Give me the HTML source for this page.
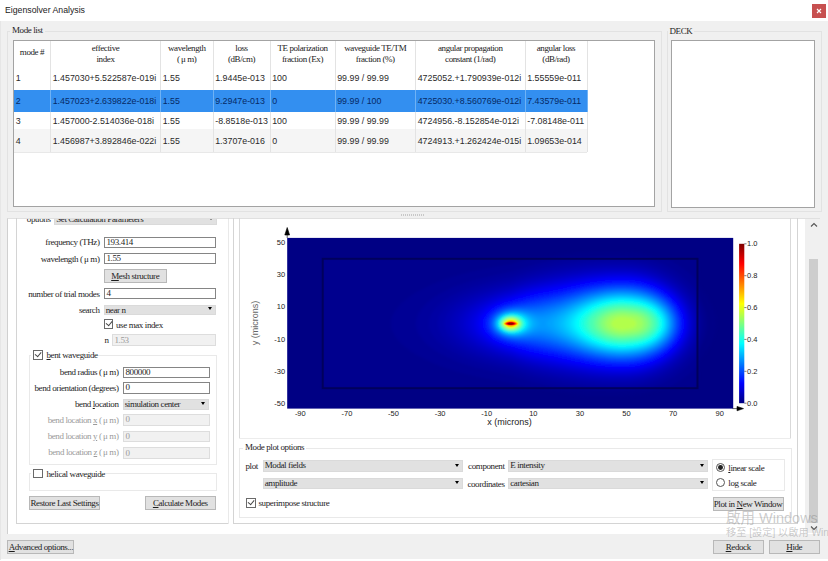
<!DOCTYPE html>
<html><head><meta charset="utf-8"><title>Eigensolver Analysis</title>
<style>
*{box-sizing:border-box}
html,body{margin:0;padding:0}
body{width:828px;height:561px;background:#f0f0f0;position:relative;overflow:hidden;font-family:"Liberation Serif","Noto Serif CJK SC",serif;font-size:9px;letter-spacing:-0.4px;color:#1c1c1c}
.a{position:absolute}
.t{position:absolute;white-space:nowrap;line-height:12px;height:12px}
.r{text-align:right}
.c{text-align:center}
.gb{position:absolute;border:1px solid #e2e2e2}
.in{position:absolute;border:1px solid #858585;background:#fff;height:12px;line-height:10px;padding-left:2px;white-space:nowrap;overflow:hidden}
.dis{background:#f1f1f1;border-color:#dddddd;color:#9a9a9a}
.cb{position:absolute;background:#e1e1e1;border:1px solid #dadada;height:11px;line-height:9px;padding-left:1.2px;white-space:nowrap;overflow:hidden}
.cb:after{content:"";position:absolute;right:2.8px;top:50%;margin-top:-2.2px;border-left:2.5px solid transparent;border-right:2.5px solid transparent;border-top:3px solid #000}
.btn{position:absolute;background:#e1e1e1;border:1px solid #b8b8b8;text-align:center;white-space:nowrap;height:14px;line-height:12px}
.ck{position:absolute;width:9.5px;height:9.5px;border:1px solid #6a6a6a;background:#fff}
.ck.on:after{content:"";position:absolute;left:1.3px;top:0.8px;width:4.5px;height:2.5px;border-left:1px solid #444;border-bottom:1px solid #444;transform:rotate(-50deg)}
.gray{color:#9a9a9a}
.sans{font-family:"Liberation Sans","Noto Sans CJK TC",sans-serif;letter-spacing:0}
.td{position:absolute;white-space:nowrap;font-family:"Liberation Sans",sans-serif;font-size:8.85px;letter-spacing:0;line-height:12px;color:#2a2a2a}
.th{position:absolute;white-space:nowrap;text-align:center;font-size:9px;line-height:11px;color:#222}
.vl{position:absolute;width:1px;background:#e3e3e3}
.ax{font-family:"Liberation Sans",sans-serif;font-size:7.5px;fill:#222;letter-spacing:0}
u{text-decoration:underline}
</style></head>
<body>
<div class="a" style="left:0;top:0;width:828px;height:20.5px;background:#fff"></div>
<div class="t sans" style="left:5px;top:3px;font-size:8.72px;line-height:14px;height:14px;color:#222">Eigensolver Analysis</div>
<div class="a" style="left:812px;top:4px;width:14px;height:14px;background:#c75050"></div>
<svg class="a" style="left:812px;top:4px" width="14" height="14"><path d="M5 5L9 9M9 5L5 9" stroke="#fff" stroke-width="1.1"/></svg>
<div class="a" style="left:0;top:559px;width:828px;height:2px;background:#fff"></div>
<div class="a" style="left:0;top:20.5px;width:1.2px;height:539px;background:#e6e6e6"></div>
<div class="gb" style="left:7px;top:31px;width:655px;height:181px"></div>
<div class="t" style="left:10px;top:24px;background:#f0f0f0;padding:0 2px">Mode list</div>
<div class="a" style="left:13px;top:39.5px;width:641.5px;height:167px;background:#fff;border:1px solid #a3a3a3"></div>
<div class="a" style="left:14px;top:129px;width:573px;height:23px;background:#f5f5f5"></div>
<div class="a" style="left:14px;top:89.5px;width:573px;height:22.2px;background:#338ff0"></div>
<div class="vl" style="left:50.0px;top:41px;height:111px"></div>
<div class="vl" style="left:50.0px;top:89.5px;height:22.5px;background:#6fb2f5"></div>
<div class="vl" style="left:160.0px;top:41px;height:111px"></div>
<div class="vl" style="left:160.0px;top:89.5px;height:22.5px;background:#6fb2f5"></div>
<div class="vl" style="left:212.5px;top:41px;height:111px"></div>
<div class="vl" style="left:212.5px;top:89.5px;height:22.5px;background:#6fb2f5"></div>
<div class="vl" style="left:269.5px;top:41px;height:111px"></div>
<div class="vl" style="left:269.5px;top:89.5px;height:22.5px;background:#6fb2f5"></div>
<div class="vl" style="left:334.5px;top:41px;height:111px"></div>
<div class="vl" style="left:334.5px;top:89.5px;height:22.5px;background:#6fb2f5"></div>
<div class="vl" style="left:415.0px;top:41px;height:111px"></div>
<div class="vl" style="left:415.0px;top:89.5px;height:22.5px;background:#6fb2f5"></div>
<div class="vl" style="left:524.5px;top:41px;height:111px"></div>
<div class="vl" style="left:524.5px;top:89.5px;height:22.5px;background:#6fb2f5"></div>
<div class="vl" style="left:586.5px;top:41px;height:111px"></div>
<div class="vl" style="left:586.5px;top:89.5px;height:22.5px;background:#6fb2f5"></div>
<div class="a" style="left:14px;top:152px;width:573px;height:1px;background:#e8e8e8"></div>
<div class="th" style="left:13.5px;width:37.0px;top:47.0px">mode #</div>
<div class="th" style="left:50.5px;width:110.0px;top:42.5px">effective<br>index</div>
<div class="th" style="left:160.5px;width:52.5px;top:42.5px">wavelength<br>(&#8201;μ m)</div>
<div class="th" style="left:213.0px;width:57.0px;top:42.5px">loss<br>(dB/cm)</div>
<div class="th" style="left:270.0px;width:65.0px;top:42.5px">TE polarization<br>fraction (Ex)</div>
<div class="th" style="left:335.0px;width:80.5px;top:42.5px">waveguide TE/TM<br>fraction (%)</div>
<div class="th" style="left:415.5px;width:109.5px;top:42.5px">angular propagation<br>constant (1/rad)</div>
<div class="th" style="left:525.0px;width:62.0px;top:42.5px">angular loss<br>(dB/rad)</div>
<div class="td" style="left:15.7px;top:71.5px">1</div>
<div class="td" style="left:52.7px;top:71.5px">1.457030+5.522587e-019i</div>
<div class="td" style="left:162.7px;top:71.5px">1.55</div>
<div class="td" style="left:215.2px;top:71.5px">1.9445e-013</div>
<div class="td" style="left:272.2px;top:71.5px">100</div>
<div class="td" style="left:337.2px;top:71.5px">99.99 / 99.99</div>
<div class="td" style="left:417.7px;top:71.5px">4725052.+1.790939e-012i</div>
<div class="td" style="left:527.2px;top:71.5px">1.55559e-011</div>
<div class="td" style="left:15.7px;top:94.5px;color:#062a66">2</div>
<div class="td" style="left:52.7px;top:94.5px;color:#062a66">1.457023+2.639822e-018i</div>
<div class="td" style="left:162.7px;top:94.5px;color:#062a66">1.55</div>
<div class="td" style="left:215.2px;top:94.5px;color:#062a66">9.2947e-013</div>
<div class="td" style="left:272.2px;top:94.5px;color:#062a66">0</div>
<div class="td" style="left:337.2px;top:94.5px;color:#062a66">99.99 / 100</div>
<div class="td" style="left:417.7px;top:94.5px;color:#062a66">4725030.+8.560769e-012i</div>
<div class="td" style="left:527.2px;top:94.5px;color:#062a66">7.43579e-011</div>
<div class="td" style="left:15.7px;top:114.5px">3</div>
<div class="td" style="left:52.7px;top:114.5px">1.457000-2.514036e-018i</div>
<div class="td" style="left:162.7px;top:114.5px">1.55</div>
<div class="td" style="left:215.2px;top:114.5px">-8.8518e-013</div>
<div class="td" style="left:272.2px;top:114.5px">100</div>
<div class="td" style="left:337.2px;top:114.5px">99.99 / 99.99</div>
<div class="td" style="left:417.7px;top:114.5px">4724956.-8.152854e-012i</div>
<div class="td" style="left:527.2px;top:114.5px">-7.08148e-011</div>
<div class="td" style="left:15.7px;top:134.5px">4</div>
<div class="td" style="left:52.7px;top:134.5px">1.456987+3.892846e-022i</div>
<div class="td" style="left:162.7px;top:134.5px">1.55</div>
<div class="td" style="left:215.2px;top:134.5px">1.3707e-016</div>
<div class="td" style="left:272.2px;top:134.5px">0</div>
<div class="td" style="left:337.2px;top:134.5px">99.99 / 99.99</div>
<div class="td" style="left:417.7px;top:134.5px">4724913.+1.262424e-015i</div>
<div class="td" style="left:527.2px;top:134.5px">1.09653e-014</div>
<div class="gb" style="left:667px;top:31px;width:155px;height:181px"></div>
<div class="t" style="left:667.5px;top:24.5px;background:#f0f0f0;padding:0 2px">DECK</div>
<div class="a" style="left:671px;top:39.5px;width:144px;height:168px;background:#fff;border:1px solid #a3a3a3"></div>
<div class="a" style="left:401px;top:214.3px;width:23.5px;height:2px;background:repeating-linear-gradient(90deg,#c8c8c8 0 1px,#f0f0f0 1px 2px)"></div>
<div class="a" style="left:6.5px;top:218px;width:813px;height:315.5px;background:#fff;border-left:1px solid #d0d0d0;border-top:1px solid #e0e0e0"></div>
<div class="a" style="left:16px;top:210px;width:212.5px;height:314px;border:1px solid #d4d4d4;clip-path:inset(8px 0 0 0)"></div>
<div class="a" style="left:233px;top:210px;width:565px;height:314px;border:1px solid #d4d4d4;clip-path:inset(8px 0 0 0)"></div>
<div class="a" style="left:239px;top:210px;width:552px;height:228.5px;border:1px solid #d9d9d9;clip-path:inset(8px 0 0 0)"></div>
<div class="a" style="left:805px;top:218.5px;width:14.5px;height:314.5px;background:#f0f0f0"></div>
<div class="a" style="left:809px;top:258.5px;width:9.3px;height:264.5px;background:#cdcdcd"></div>
<svg class="a" style="left:805px;top:218px" width="15" height="316"><path d="M6 8.5L9 5.5L12 8.5" fill="none" stroke="#555" stroke-width="1.1"/><path d="M6 308.5L9 311.5L12 308.5" fill="none" stroke="#555" stroke-width="1.1"/></svg>
<div class="a" style="left:0;top:218.5px;width:230px;height:12px;overflow:hidden"><div class="t r" style="left:0;width:50.5px;top:-5.5px">options</div><div class="cb" style="left:54px;top:-5.5px;width:163px;height:11.8px;line-height:10px">Set Calculation Parameters</div></div>
<div class="t r " style="left:0;width:99.5px;top:236.0px">frequency (THz)</div>
<div class="in " style="left:103.5px;top:236.5px;width:112.5px;height:11.5px;line-height:9.5px">193.414</div>
<div class="t r " style="left:0;width:99.5px;top:252.5px">wavelength (&#8201;μ m)</div>
<div class="in " style="left:103.5px;top:253.0px;width:112.5px;height:11.0px;line-height:9.0px">1.55</div>
<div class="btn" style="left:104.0px;top:268.5px;width:62.5px;height:14.0px;line-height:12.0px"><u>M</u>esh structure</div>
<div class="t r " style="left:0;width:99.5px;top:287.5px">number of trial modes</div>
<div class="in " style="left:103.5px;top:288.0px;width:112.5px;height:11.0px;line-height:9.0px">4</div>
<div class="t r " style="left:0;width:99.5px;top:303.5px">search</div>
<div class="cb" style="left:103.5px;top:304.5px;width:112.5px;height:10.0px;line-height:8.0px">near n</div>
<div class="ck on" style="left:103.5px;top:319.4px"></div>
<div class="t" style="left:116px;top:318.5px">use max index</div>
<div class="t" style="left:104.5px;top:334px">n</div>
<div class="in dis" style="left:111.5px;top:334.0px;width:104.5px;height:12.0px;line-height:10.0px">1.53</div>
<div class="gb" style="left:28.5px;top:355px;width:188px;height:109.5px;border-color:#e9e9e9"></div>
<div class="a" style="left:31px;top:349px;width:66px;height:12px;background:#fff"></div>
<div class="ck on" style="left:33.1px;top:350.1px"></div>
<div class="t" style="left:46.5px;top:349px"><u>b</u>ent waveguide</div>
<div class="t r " style="left:0;width:118.5px;top:366.0px">bend radius (&#8201;μ m)</div>
<div class="in " style="left:122.5px;top:366.5px;width:87.0px;height:11.5px;line-height:9.5px">800000</div>
<div class="t r " style="left:0;width:118.5px;top:381.5px">bend orientation (degrees)</div>
<div class="in " style="left:122.5px;top:382.0px;width:87.0px;height:11.5px;line-height:9.5px">0</div>
<div class="t r " style="left:0;width:118.5px;top:398.0px">bend <u>l</u>ocation</div>
<div class="cb" style="left:122.5px;top:399.0px;width:86.5px;height:10.5px;line-height:8.5px">simulation center</div>
<div class="t r gray" style="left:0;width:118.5px;top:413.5px">bend location <u>x</u> (&#8201;μ m)</div>
<div class="in dis" style="left:122.5px;top:414.0px;width:87.0px;height:11.5px;line-height:9.5px">0</div>
<div class="t r gray" style="left:0;width:118.5px;top:430.0px">bend location <u>y</u> (&#8201;μ m)</div>
<div class="in dis" style="left:122.5px;top:430.5px;width:87.0px;height:11.5px;line-height:9.5px">0</div>
<div class="t r gray" style="left:0;width:118.5px;top:446.0px">bend location <u>z</u> (&#8201;μ m)</div>
<div class="in dis" style="left:122.5px;top:446.5px;width:87.0px;height:12.0px;line-height:10.0px">0</div>
<div class="gb" style="left:28.5px;top:473px;width:188px;height:17.5px;border-color:#e9e9e9"></div>
<div class="a" style="left:31px;top:467px;width:73px;height:12px;background:#fff"></div>
<div class="ck" style="left:33.1px;top:468.7px"></div>
<div class="t" style="left:46.5px;top:467.5px">helical waveguide</div>
<div class="btn" style="left:29.0px;top:496.0px;width:71.0px;height:14.0px;line-height:12.0px">Restore Last Settings</div>
<div class="btn" style="left:145.0px;top:496.0px;width:70.5px;height:14.0px;line-height:12.0px"><u>C</u>alculate Modes</div>
<div class="btn" style="left:7.2px;top:540.2px;width:67.3px;height:14.0px;line-height:12.0px"><u>A</u>dvanced options...</div>
<div class="gb" style="left:239px;top:448px;width:552.5px;height:69.5px;border-color:#e9e9e9"></div>
<div class="t" style="left:243px;top:441.3px;background:#fff;padding:0 2px">Mode plot options</div>
<div class="t" style="left:245.5px;top:460px">plot</div>
<div class="cb" style="left:262.5px;top:460.0px;width:200.0px;height:11.7px;line-height:9.7px">Modal fields</div>
<div class="cb" style="left:262.5px;top:477.6px;width:200.0px;height:11.7px;line-height:9.7px">amplitude</div>
<div class="t r" style="left:400px;width:104.5px;top:460px">component</div>
<div class="t r" style="left:400px;width:104.5px;top:478px">coordinates</div>
<div class="cb" style="left:508.0px;top:460.0px;width:199.5px;height:11.7px;line-height:9.7px">E intensity</div>
<div class="cb" style="left:508.0px;top:477.6px;width:199.5px;height:11.7px;line-height:9.7px">cartesian</div>
<div class="ck on" style="left:246px;top:498px"></div>
<div class="t" style="left:258.5px;top:497px">superimpose structure</div>
<div class="gb" style="left:712px;top:458.5px;width:73px;height:32.5px;border-color:#e9e9e9"></div>
<div class="a" style="left:716.2px;top:463.2px;width:9px;height:9px;border:1px solid #555;border-radius:50%;background:#fff"></div>
<div class="a" style="left:718.3px;top:465.3px;width:4.8px;height:4.8px;border-radius:50%;background:#222"></div>
<div class="a" style="left:716.2px;top:478px;width:9px;height:9px;border:1px solid #555;border-radius:50%;background:#fff"></div>
<div class="t" style="left:728.3px;top:461.5px"><u>l</u>inear scale</div>
<div class="t" style="left:728.3px;top:476.5px">log scale</div>
<div class="btn" style="left:712.5px;top:496.5px;width:71.0px;height:14.0px;line-height:12.0px">Plot in <u>N</u>ew Window</div>
<div class="btn" style="left:713.0px;top:540.2px;width:50.5px;height:14.0px;line-height:12.0px"><u>R</u>edock</div>
<div class="btn" style="left:769.0px;top:540.2px;width:50.5px;height:14.0px;line-height:12.0px"><u>H</u>ide</div>
<svg class="a" style="left:239.5px;top:219px" width="551" height="219" viewBox="239.5 219 551 219">
<g transform="translate(286.7,237.9)"><rect x="0" y="0" width="446.0" height="170.7" fill="#000084"/>
<filter id="bl" x="-5%" y="-5%" width="110%" height="110%"><feGaussianBlur stdDeviation="1.6"/></filter><filter id="bl2"><feGaussianBlur stdDeviation="0.5"/></filter><clipPath id="pc"><rect x="0" y="0" width="446.0" height="170.7"/></clipPath><g clip-path="url(#pc)">
<g filter="url(#bl)"><path fill="#000087" d="M298.5,13.6 303.3,13.2 309.3,13.1 315.4,13.1 321.4,13.0 327.4,13.1 333.4,13.2 339.4,13.4 343.9,13.7 349.9,14.4 354.4,15.2 360.4,16.6 364.9,17.9 369.4,19.4 373.9,19.8 379.9,19.9 385.9,20.0 391.9,20.2 397.9,20.2 404.0,20.3 410.0,20.3 410.8,25.7 410.9,31.7 411.1,37.8 411.3,43.8 411.5,48.5 414.5,52.0 417.4,55.9 419.5,58.9 422.0,62.9 423.9,66.5 425.9,71.0 427.4,75.5 428.3,80.1 428.7,86.1 428.1,92.1 427.1,96.7 425.5,101.2 423.5,105.5 421.7,108.8 419.0,113.1 416.7,116.3 414.3,119.3 411.5,122.7 411.2,128.4 411.0,134.4 410.9,140.5 410.8,146.5 408.5,150.4 402.5,150.4 396.4,150.5 390.4,150.6 384.4,150.7 378.4,150.9 372.4,151.0 367.9,152.3 363.4,153.8 358.9,155.0 354.4,156.0 348.4,157.0 343.9,157.5 337.9,157.9 331.9,158.1 325.9,158.2 319.9,158.2 313.9,158.2 307.8,158.1 301.8,158.0 295.8,157.4 291.3,156.9 285.3,156.2 280.8,155.5 274.8,154.6 270.3,153.8 264.3,152.7 259.8,151.7 255.3,151.0 249.3,150.9 243.3,150.8 237.3,150.8 231.3,150.7 225.3,150.6 219.2,150.6 213.2,150.6 207.2,150.5 201.2,150.5 195.2,150.5 189.2,150.5 183.2,150.5 177.2,150.4 171.2,150.4 165.2,150.4 159.2,150.4 153.2,150.4 147.2,150.4 141.2,150.4 135.2,150.4 129.1,150.4 123.1,150.3 117.1,150.3 111.1,150.3 105.1,150.3 99.1,150.3 93.1,150.3 87.1,150.3 81.1,150.3 75.1,150.3 69.1,150.3 63.1,150.3 57.1,150.3 51.1,150.3 45.1,150.3 39.0,150.3 35.3,148.0 35.3,142.0 35.3,136.0 35.3,129.9 35.3,123.9 35.3,117.8 35.2,111.8 35.2,105.7 35.2,99.7 35.2,93.7 35.2,87.6 35.2,81.6 35.2,75.5 35.2,69.5 35.2,63.4 35.3,57.4 35.3,51.4 35.3,45.3 35.3,39.3 35.3,33.2 35.3,27.2 35.3,21.1 40.5,20.4 46.6,20.4 52.6,20.4 58.6,20.4 64.6,20.4 70.6,20.4 76.6,20.4 82.6,20.4 88.6,20.4 94.6,20.4 100.6,20.4 106.6,20.4 112.6,20.4 118.6,20.4 124.6,20.4 130.6,20.3 136.7,20.3 142.7,20.3 148.7,20.3 154.7,20.3 160.7,20.3 166.7,20.3 172.7,20.3 178.7,20.3 184.7,20.2 190.7,20.2 196.7,20.2 202.7,20.2 208.7,20.2 214.7,20.2 220.7,20.1 226.8,20.1 232.8,20.0 238.8,20.0 244.8,19.9 250.8,19.8 256.8,19.7 261.3,19.2 266.9,18.1 271.8,17.2 276.3,16.4 282.3,15.5 286.8,14.9 292.8,14.1 298.5,13.6Z"/>
<path fill="#00008e" d="M300.3,19.6 304.8,19.3 310.8,19.1 316.9,18.9 322.9,18.8 328.9,18.8 334.9,18.9 340.9,19.1 346.4,19.6 351.4,19.7 357.4,19.9 363.4,20.0 369.4,20.2 375.4,20.4 381.4,20.6 387.4,20.7 393.4,20.8 399.4,20.9 405.5,20.9 410.1,21.1 410.2,27.2 410.3,33.2 410.5,39.3 410.7,45.3 411.0,51.4 411.4,57.4 413.0,61.6 414.7,65.0 416.7,69.5 418.2,74.0 419.1,78.6 419.7,84.6 419.4,90.6 418.7,95.2 417.4,99.7 415.7,104.2 413.4,108.8 411.5,112.1 411.1,117.8 410.8,123.9 410.5,129.9 410.4,136.0 410.2,142.0 410.2,148.0 407.0,149.7 400.9,149.8 394.9,149.9 388.9,150.0 382.9,150.1 376.9,150.3 370.9,150.5 364.9,150.7 358.9,150.8 352.9,151.0 348.4,151.3 342.4,152.0 336.4,152.3 330.4,152.4 324.4,152.4 318.4,152.3 312.4,152.2 306.3,152.0 300.3,151.6 294.9,151.1 289.8,151.0 283.8,150.9 277.8,150.8 271.8,150.7 265.8,150.6 259.8,150.5 253.8,150.4 247.8,150.3 241.8,150.2 235.8,150.1 229.8,150.0 223.8,150.0 217.7,149.9 211.7,149.9 205.7,149.9 199.7,149.9 193.7,149.8 187.7,149.8 181.7,149.8 175.7,149.8 169.7,149.8 163.7,149.8 157.7,149.7 151.7,149.7 145.7,149.7 139.7,149.7 133.6,149.7 127.6,149.7 121.6,149.7 115.6,149.7 109.6,149.7 103.6,149.7 97.6,149.7 91.6,149.7 85.6,149.7 79.6,149.7 73.6,149.7 67.6,149.7 61.6,149.7 55.6,149.7 49.6,149.7 43.5,149.7 37.5,149.6 35.9,146.5 35.9,140.5 35.9,134.4 35.9,128.4 35.9,122.4 35.9,116.3 35.9,110.3 35.9,104.2 35.9,98.2 35.9,92.1 35.9,86.1 35.9,80.1 35.9,74.0 35.9,68.0 35.9,61.9 35.9,55.9 35.9,49.9 35.9,43.8 35.9,37.8 35.9,31.7 35.9,25.7 36.0,21.1 42.0,21.1 48.1,21.0 54.1,21.0 60.1,21.0 66.1,21.0 72.1,21.0 78.1,21.0 84.1,21.0 90.1,21.0 96.1,21.0 102.1,21.0 108.1,21.0 114.1,21.0 120.1,21.0 126.1,21.0 132.1,21.0 138.2,21.0 144.2,21.0 150.2,21.0 156.2,21.0 162.2,21.0 168.2,20.9 174.2,20.9 180.2,20.9 186.2,20.9 192.2,20.9 198.2,20.9 204.2,20.8 210.2,20.8 216.2,20.8 222.2,20.8 228.3,20.7 234.3,20.6 240.3,20.6 246.3,20.5 252.3,20.4 258.3,20.3 264.3,20.2 270.3,20.1 276.3,20.0 282.3,19.9 288.3,19.8 294.3,19.7 300.3,19.6Z"/>
<path fill="#000095" d="M242.4,21.1 246.3,21.1 250.8,21.0 255.3,20.9 259.8,20.9 264.3,20.8 268.8,20.7 273.3,20.6 277.8,20.5 282.3,20.5 286.8,20.4 291.3,20.3 295.8,20.3 300.3,20.2 304.8,20.2 309.3,20.2 313.9,20.1 318.4,20.1 322.9,20.1 327.4,20.1 331.9,20.1 336.4,20.1 340.9,20.1 345.4,20.2 349.9,20.3 354.4,20.4 358.9,20.5 363.4,20.6 367.9,20.8 372.4,20.9 376.9,21.1 379.9,21.4 382.9,22.9 385.9,24.6 388.9,26.4 391.9,28.3 394.7,30.2 396.8,31.7 399.4,33.7 402.5,36.1 404.4,37.8 407.0,40.0 409.4,42.3 410.1,45.3 410.3,49.9 410.6,54.4 410.9,58.9 411.2,63.4 411.5,67.6 412.8,71.0 413.7,74.0 414.5,77.4 415.1,81.6 415.3,86.1 415.0,90.6 414.5,93.8 413.4,98.2 412.4,101.2 411.4,104.2 411.1,108.8 410.8,113.3 410.5,117.8 410.2,122.4 410.0,126.9 408.5,129.8 406.7,131.4 404.0,133.8 401.4,136.0 399.4,137.5 396.4,139.8 393.4,141.9 391.0,143.5 388.6,145.0 385.9,146.6 382.9,148.3 379.9,149.6 375.4,149.7 370.9,149.9 366.4,150.0 361.9,150.2 357.4,150.3 352.9,150.4 348.4,150.5 343.9,150.6 339.4,150.6 334.9,150.7 330.4,150.7 325.9,150.7 321.4,150.7 316.9,150.7 312.4,150.6 307.8,150.6 303.3,150.6 298.8,150.5 294.3,150.5 289.8,150.4 285.3,150.3 280.8,150.3 276.3,150.2 271.8,150.1 267.3,150.0 262.8,150.0 258.3,149.9 253.8,149.8 249.3,149.7 244.8,149.6 240.3,149.6 237.3,148.7 234.3,147.9 229.8,146.5 226.8,145.6 223.8,144.7 219.2,144.0 216.2,143.4 211.7,142.7 208.1,142.0 204.2,141.3 200.1,140.5 196.7,139.8 192.7,139.0 189.2,138.3 185.8,137.5 181.7,136.5 178.7,135.8 174.2,134.6 171.2,133.8 168.2,132.9 163.7,131.5 160.7,130.5 157.7,129.4 154.7,128.3 150.9,126.9 147.2,125.4 144.2,124.1 141.2,122.7 138.2,121.3 135.2,119.7 132.1,118.1 129.1,116.4 126.6,114.8 124.2,113.3 121.6,111.5 118.6,109.2 116.2,107.3 114.1,105.3 111.6,102.7 109.6,100.4 108.0,98.2 106.3,95.2 105.0,92.1 104.0,87.6 104.1,83.1 105.1,78.8 106.6,75.5 108.1,72.9 109.6,70.8 112.1,68.0 114.1,65.9 116.8,63.4 118.7,61.9 121.6,59.7 124.6,57.7 127.4,55.9 130.0,54.4 132.6,52.9 135.5,51.4 138.5,49.9 141.6,48.3 145.0,46.8 148.6,45.3 151.7,44.1 154.7,42.9 157.7,41.8 160.7,40.8 165.2,39.3 168.2,38.4 171.2,37.5 175.7,36.3 178.7,35.5 181.8,34.7 186.2,33.7 189.2,33.0 193.7,32.1 196.7,31.5 201.2,30.6 204.2,30.0 208.7,29.1 211.7,28.6 216.2,27.8 220.2,27.2 223.8,26.6 226.8,25.7 231.3,24.3 234.3,23.4 237.3,22.6 241.8,21.3Z"/>
<path fill="#00009d" d="M277.0,21.1 280.8,21.1 285.3,21.0 289.8,20.9 294.3,20.9 298.8,20.8 303.3,20.8 307.8,20.7 312.4,20.7 316.9,20.7 321.4,20.7 325.9,20.7 330.4,20.7 334.9,20.7 339.4,20.7 343.9,20.7 348.4,20.8 352.9,20.9 357.4,21.0 361.0,21.1 364.9,22.3 367.9,23.3 370.9,24.5 373.9,25.8 376.9,27.2 379.9,28.7 382.9,30.4 385.9,32.2 388.9,34.2 391.8,36.3 393.7,37.8 396.4,40.0 399.1,42.3 400.9,44.1 403.7,46.8 405.5,48.8 407.7,51.4 410.0,54.3 410.2,57.4 410.5,61.9 410.8,66.5 411.1,71.0 411.4,75.5 411.7,78.6 412.2,83.1 412.2,87.6 411.8,92.1 411.4,95.2 411.2,99.7 410.9,104.2 410.5,108.8 410.2,113.3 410.0,116.9 408.1,119.3 405.5,122.4 404.0,124.1 401.2,126.9 399.4,128.6 396.4,131.2 394.4,132.9 391.9,134.8 388.9,137.0 385.9,139.0 383.4,140.5 380.8,142.0 377.9,143.5 374.8,145.0 371.3,146.5 367.9,147.8 364.9,148.9 361.9,149.6 357.4,149.7 352.9,149.9 348.4,150.0 343.9,150.0 339.4,150.1 334.9,150.1 330.4,150.1 325.9,150.1 321.4,150.1 316.9,150.1 312.4,150.1 307.8,150.0 303.3,150.0 298.8,150.0 294.3,149.9 289.8,149.8 285.3,149.8 280.8,149.7 276.3,149.6 273.3,149.5 268.8,148.8 265.2,148.0 261.3,147.3 257.8,146.5 253.8,145.7 250.8,144.9 246.3,143.8 243.3,143.0 239.6,142.0 235.8,140.9 232.8,140.0 229.6,139.0 225.3,137.6 222.2,136.8 217.9,136.0 214.7,135.4 210.4,134.4 207.2,133.8 203.5,132.9 199.7,132.1 196.7,131.4 192.2,130.2 189.2,129.5 185.5,128.4 181.7,127.3 178.7,126.4 175.7,125.4 171.5,123.9 168.2,122.6 165.2,121.4 162.2,120.0 159.2,118.6 156.2,117.1 153.2,115.5 150.2,113.7 147.3,111.8 145.1,110.3 142.7,108.4 139.7,105.8 138.0,104.2 135.3,101.2 133.6,99.1 132.1,96.7 130.6,93.7 129.3,89.1 129.0,86.1 129.1,83.0 130.2,78.6 131.6,75.5 133.4,72.5 135.2,70.2 137.1,68.0 139.7,65.5 142.0,63.4 144.2,61.7 147.2,59.6 150.2,57.6 153.1,55.9 155.8,54.4 158.8,52.9 162.0,51.4 165.2,49.9 168.2,48.7 171.2,47.5 174.2,46.5 177.6,45.3 181.7,44.0 184.7,43.1 187.7,42.3 192.2,41.1 195.2,40.3 199.5,39.3 202.7,38.5 206.2,37.8 210.2,36.9 213.3,36.3 217.7,35.3 221.1,34.7 225.3,33.7 228.3,32.7 231.5,31.7 235.8,30.4 238.8,29.5 241.8,28.7 246.3,27.5 249.3,26.7 253.7,25.7 256.8,25.0 260.6,24.2 264.3,23.4 268.3,22.7 271.8,22.0 276.3,21.3Z"/>
<path fill="#0000a4" d="M300.1,22.7 303.3,22.3 307.8,22.1 312.4,21.9 316.9,21.8 321.4,21.6 325.9,21.6 330.4,21.6 334.9,21.6 339.4,21.8 343.9,22.1 348.4,22.6 351.4,23.1 355.9,24.0 358.9,24.7 362.3,25.7 366.4,27.0 369.4,28.1 372.4,29.4 375.4,30.8 378.4,32.3 381.4,34.0 384.4,35.9 387.2,37.8 389.3,39.3 391.9,41.3 394.9,43.8 396.5,45.3 399.4,48.2 401.0,49.9 403.6,52.9 405.5,55.3 407.0,57.4 408.9,60.4 410.0,63.4 410.4,68.0 410.7,72.5 410.9,77.0 411.1,81.6 411.1,86.1 411.0,90.6 410.9,95.2 410.6,99.7 410.3,104.2 410.0,108.8 408.5,111.5 407.0,113.8 405.2,116.3 402.7,119.3 400.9,121.4 398.6,123.9 396.4,126.0 393.7,128.4 391.9,129.9 388.9,132.2 385.9,134.3 383.4,136.0 380.9,137.5 378.2,139.0 375.2,140.5 371.9,142.0 368.2,143.5 364.9,144.7 361.9,145.7 358.7,146.5 354.4,147.6 351.4,148.1 346.9,148.8 342.4,149.2 337.9,149.5 334.6,149.6 330.4,149.6 325.9,149.6 321.5,149.6 318.4,149.5 313.9,149.3 309.3,149.2 304.8,149.0 300.3,148.6 295.8,148.1 292.8,147.8 288.3,147.2 283.8,146.6 280.8,146.2 276.3,145.4 273.3,144.9 268.8,144.2 265.4,143.5 261.3,142.7 257.8,142.0 253.8,141.1 250.8,140.4 246.3,139.3 243.3,138.6 239.4,137.5 235.8,136.4 232.8,135.5 229.5,134.4 225.3,133.0 222.2,132.2 218.6,131.4 214.7,130.6 211.7,129.9 207.2,128.9 204.2,128.1 199.7,126.9 196.7,126.1 193.7,125.3 189.2,123.9 186.2,123.0 183.2,122.0 180.2,120.8 176.3,119.3 172.7,117.8 169.7,116.4 166.7,114.9 163.7,113.3 161.2,111.8 158.8,110.3 156.2,108.4 153.2,106.0 151.2,104.2 148.7,101.6 147.1,99.7 145.1,96.7 143.5,93.7 142.5,90.6 141.8,86.1 142.3,81.6 143.2,78.6 144.5,75.5 146.4,72.5 148.7,69.7 150.3,68.0 153.2,65.3 155.5,63.4 157.7,61.8 160.7,59.8 163.7,58.0 166.7,56.4 169.7,54.9 172.7,53.5 175.7,52.2 178.7,51.0 181.8,49.9 186.2,48.4 189.2,47.4 192.2,46.5 196.3,45.3 199.7,44.4 202.7,43.6 207.2,42.5 210.2,41.7 214.4,40.8 217.7,40.0 221.7,39.3 225.3,38.3 228.3,37.3 231.4,36.3 235.8,34.9 238.8,34.0 241.8,33.2 246.3,32.0 249.3,31.2 253.7,30.2 256.8,29.5 260.7,28.7 264.3,28.0 268.5,27.2 271.8,26.6 276.3,25.8 279.3,25.4 283.8,24.7 287.5,24.2 291.3,23.6 295.8,23.1 300.1,22.7Z"/>
<path fill="#0000ab" d="M302.6,25.7 306.3,25.4 310.8,25.2 315.4,24.9 319.9,24.8 324.4,24.6 328.9,24.6 333.4,24.6 337.9,24.7 342.4,25.0 346.9,25.4 349.9,25.8 354.4,26.6 357.4,27.3 361.9,28.6 364.9,29.6 367.9,30.7 370.9,31.9 373.9,33.3 376.9,34.8 379.9,36.4 382.9,38.3 385.9,40.3 388.6,42.3 390.5,43.8 393.4,46.3 395.6,48.3 397.9,50.8 399.8,52.9 402.3,55.9 404.0,58.2 405.5,60.6 407.1,63.4 408.7,66.5 410.0,69.6 410.3,74.0 410.5,78.6 410.6,83.1 410.6,87.6 410.5,92.1 410.3,96.7 410.0,101.2 408.9,104.2 407.4,107.3 405.7,110.3 404.0,113.0 402.5,115.0 400.3,117.8 397.9,120.4 396.1,122.4 393.4,124.9 391.2,126.9 388.9,128.7 385.9,130.9 382.9,132.9 380.4,134.4 377.8,136.0 374.9,137.5 371.6,139.0 368.0,140.5 364.9,141.6 361.9,142.6 358.7,143.5 354.4,144.6 351.4,145.1 346.9,145.8 342.4,146.2 337.9,146.5 334.9,146.6 330.4,146.6 325.9,146.6 322.8,146.5 318.4,146.4 313.9,146.2 309.3,146.0 304.8,145.7 300.3,145.3 297.3,145.0 292.8,144.5 288.3,143.9 285.3,143.4 280.8,142.8 276.3,142.0 273.3,141.5 268.8,140.7 265.8,140.2 261.3,139.3 258.3,138.7 253.8,137.8 250.8,137.1 246.3,136.0 243.3,135.2 240.3,134.4 235.8,133.1 232.8,132.2 229.8,131.2 226.1,129.9 222.2,128.7 219.2,128.1 214.7,127.1 211.7,126.3 208.1,125.4 204.2,124.3 201.2,123.5 197.5,122.4 193.7,121.2 190.7,120.2 187.7,119.1 184.3,117.8 180.6,116.3 177.2,114.8 174.2,113.3 171.3,111.8 168.8,110.3 166.4,108.8 163.7,106.8 160.7,104.4 158.9,102.7 156.2,99.7 154.7,97.7 153.1,95.2 151.7,91.8 150.7,87.6 150.8,83.1 151.7,79.5 153.2,76.1 154.7,73.6 156.7,71.0 159.2,68.3 161.2,66.5 163.7,64.5 166.7,62.4 169.7,60.5 172.5,58.9 175.4,57.4 178.6,55.9 181.7,54.5 184.7,53.3 187.7,52.2 190.7,51.1 194.6,49.9 198.2,48.7 201.2,47.8 204.8,46.8 208.7,45.8 211.7,45.0 216.2,43.9 219.2,43.2 223.5,42.3 226.8,41.2 229.8,40.1 232.8,39.2 237.3,37.8 240.3,36.9 243.3,36.1 247.8,35.0 250.8,34.2 255.3,33.2 258.3,32.6 262.6,31.7 265.8,31.1 270.3,30.3 273.3,29.7 277.8,29.0 280.8,28.5 285.3,27.8 289.8,27.2 292.8,26.8 297.3,26.2 301.8,25.8Z"/>
<path fill="#0000b2" d="M320.8,27.2 324.4,27.1 328.9,27.0 333.4,27.0 337.9,27.1 340.9,27.3 345.4,27.6 349.9,28.2 352.9,28.8 357.4,29.8 360.4,30.6 364.0,31.7 367.9,33.2 370.9,34.4 373.9,35.8 376.9,37.4 379.9,39.1 382.6,40.8 384.9,42.3 387.4,44.2 390.4,46.6 392.3,48.3 394.9,50.9 396.8,52.9 399.4,55.9 400.9,58.0 402.7,60.4 404.5,63.4 406.1,66.5 407.4,69.5 408.5,72.5 409.7,77.0 410.0,80.1 410.1,84.6 410.1,89.1 410.0,92.5 409.1,96.7 408.1,99.7 407.0,102.7 405.5,105.9 403.9,108.8 402.0,111.8 399.8,114.8 397.9,117.1 395.9,119.3 393.4,121.8 391.2,123.9 388.9,125.8 385.9,128.1 383.4,129.9 381.1,131.4 378.4,133.0 375.4,134.6 372.4,136.1 369.3,137.5 365.4,139.0 361.9,140.2 358.9,141.1 355.0,142.0 351.4,142.7 346.9,143.4 343.9,143.7 339.4,144.0 334.9,144.2 330.4,144.2 325.9,144.2 321.4,144.1 316.9,143.9 312.4,143.6 309.3,143.4 304.8,143.1 300.3,142.7 295.8,142.2 292.8,141.8 288.3,141.1 284.0,140.5 280.8,140.0 276.3,139.3 273.3,138.8 268.8,138.0 265.8,137.4 261.3,136.6 258.3,135.9 253.8,135.0 250.8,134.3 246.3,133.3 243.3,132.5 239.4,131.4 235.8,130.4 232.8,129.4 229.6,128.4 225.3,126.9 222.2,126.0 219.2,125.3 214.7,124.2 211.7,123.4 208.1,122.4 204.2,121.2 201.2,120.3 198.2,119.3 193.9,117.8 190.7,116.6 187.7,115.5 184.7,114.2 181.7,112.8 178.7,111.3 175.7,109.6 172.7,107.7 169.9,105.7 168.0,104.2 165.2,101.7 163.3,99.7 161.0,96.7 159.3,93.7 158.2,90.6 157.5,87.6 157.6,83.1 158.3,80.1 159.6,77.0 161.4,74.0 163.7,71.2 165.3,69.5 168.2,66.9 170.7,65.0 172.9,63.4 175.7,61.7 178.7,60.1 181.7,58.5 184.7,57.2 187.7,55.9 191.5,54.4 195.2,53.0 198.2,52.0 201.2,51.0 205.1,49.9 208.7,48.8 211.7,47.9 216.0,46.8 219.2,46.0 222.4,45.3 226.8,43.9 229.8,42.9 232.8,41.9 236.3,40.8 240.3,39.6 243.3,38.8 247.5,37.8 250.8,37.0 254.1,36.3 258.3,35.3 261.3,34.7 265.8,33.9 269.3,33.2 273.3,32.5 277.8,31.8 280.8,31.3 285.3,30.6 288.3,30.1 292.8,29.5 297.3,28.9 300.3,28.5 304.8,28.1 309.3,27.8 313.9,27.5 318.4,27.3Z"/>
<path fill="#0000b9" d="M305.8,30.2 307.8,30.0 310.8,29.8 313.9,29.6 316.9,29.4 319.9,29.3 322.9,29.2 325.9,29.1 328.9,29.0 331.9,29.0 334.9,29.1 337.9,29.1 340.9,29.3 343.9,29.5 346.9,29.8 349.6,30.2 351.4,30.5 354.4,31.1 357.0,31.7 358.9,32.2 361.9,33.1 363.4,33.6 366.4,34.7 367.9,35.2 370.3,36.3 372.4,37.2 373.9,38.0 376.4,39.3 378.4,40.4 379.9,41.3 381.5,42.3 383.7,43.8 385.8,45.3 387.4,46.6 388.9,47.8 390.4,49.1 391.9,50.5 393.4,52.0 394.9,53.6 396.4,55.3 397.9,57.1 399.3,58.9 400.4,60.4 401.4,61.9 402.5,63.7 403.9,66.5 404.6,68.0 405.5,69.9 406.4,72.5 407.0,74.3 407.7,77.0 408.2,80.1 408.5,82.9 408.5,84.6 408.5,87.6 408.4,89.1 408.0,92.1 407.4,95.2 407.0,96.9 406.1,99.7 405.5,101.3 404.2,104.2 403.4,105.7 402.5,107.5 400.9,109.9 399.7,111.8 398.6,113.3 397.4,114.8 396.1,116.3 394.7,117.8 393.3,119.3 391.7,120.8 390.1,122.4 388.3,123.9 386.5,125.4 384.4,126.9 382.9,128.0 381.4,129.0 379.9,129.9 377.3,131.4 375.4,132.5 373.9,133.2 371.4,134.4 369.4,135.3 367.9,136.0 364.9,137.1 363.4,137.6 360.4,138.6 358.9,139.0 355.9,139.8 352.9,140.4 351.4,140.7 348.4,141.2 345.4,141.6 342.4,141.8 339.5,142.0 337.9,142.1 334.9,142.1 331.9,142.2 328.9,142.2 325.9,142.1 322.9,142.0 321.4,142.0 318.4,141.9 315.4,141.7 312.4,141.5 309.3,141.3 306.3,141.1 303.3,140.8 300.4,140.5 298.8,140.3 295.8,139.9 292.8,139.5 289.8,139.1 288.3,138.8 285.3,138.4 282.3,137.9 279.6,137.5 277.8,137.2 274.8,136.7 271.8,136.1 270.3,135.9 267.3,135.3 264.3,134.8 262.6,134.4 259.8,133.9 256.8,133.3 255.1,132.9 252.3,132.3 249.3,131.7 247.8,131.3 244.8,130.6 242.3,129.9 240.3,129.4 237.3,128.5 235.8,128.1 232.8,127.1 231.3,126.6 228.3,125.6 226.8,125.1 223.8,124.0 222.2,123.6 219.2,122.9 217.2,122.4 214.7,121.7 211.7,120.9 210.2,120.4 207.2,119.5 205.7,119.0 202.7,118.0 201.2,117.5 198.2,116.4 196.7,115.9 193.9,114.8 192.2,114.1 190.3,113.3 187.7,112.1 186.2,111.4 183.9,110.3 181.7,109.1 180.2,108.2 178.6,107.3 176.3,105.7 174.3,104.2 172.7,102.9 171.2,101.6 169.7,100.1 168.2,98.4 166.9,96.7 165.9,95.2 165.1,93.7 163.9,90.6 163.5,89.1 163.1,86.1 163.3,83.1 163.7,81.4 164.7,78.6 165.4,77.0 166.7,74.9 168.2,72.9 169.7,71.2 171.2,69.7 172.7,68.4 174.2,67.2 175.7,66.0 177.3,65.0 179.6,63.4 181.7,62.2 183.2,61.4 185.1,60.4 187.7,59.2 189.2,58.5 191.8,57.4 193.7,56.6 195.5,55.9 198.2,54.9 199.7,54.3 202.7,53.3 204.2,52.8 207.2,51.8 208.8,51.4 211.7,50.5 213.9,49.9 216.2,49.2 219.2,48.4 220.7,48.1 223.8,47.3 225.3,46.8 228.3,45.7 229.8,45.2 232.8,44.2 234.3,43.7 237.3,42.8 239.1,42.3 241.8,41.5 244.7,40.8 246.3,40.4 249.3,39.7 251.0,39.3 253.8,38.6 256.8,38.0 258.3,37.7 261.3,37.1 264.3,36.5 265.8,36.2 268.8,35.7 271.8,35.1 274.1,34.7 276.3,34.4 279.3,33.8 282.3,33.4 283.8,33.1 286.8,32.6 289.8,32.2 292.8,31.8 294.3,31.5 297.3,31.1 300.3,30.7 303.3,30.4 305.8,30.2Z"/>
<path fill="#0000c0" d="M310.4,31.7 312.4,31.6 315.4,31.3 318.4,31.2 321.4,31.0 324.4,30.9 327.4,30.8 330.4,30.8 333.4,30.8 336.4,30.8 339.4,30.9 342.4,31.1 345.4,31.4 347.9,31.7 349.9,32.0 352.9,32.5 355.9,33.2 357.4,33.6 360.4,34.4 361.9,34.9 364.9,35.9 366.4,36.5 369.4,37.7 370.9,38.4 372.8,39.3 375.4,40.6 376.9,41.4 378.4,42.3 380.8,43.8 382.9,45.3 384.4,46.3 385.9,47.5 387.4,48.7 388.9,50.0 390.5,51.4 392.0,52.9 393.5,54.4 394.9,56.0 396.4,57.8 397.9,59.8 399.4,61.9 400.4,63.4 401.3,65.0 402.5,67.2 403.5,69.5 404.1,71.0 405.1,74.0 405.6,75.5 406.2,78.6 406.7,81.6 406.9,84.6 406.8,87.6 406.6,90.6 406.1,93.7 405.5,96.0 404.8,98.2 404.0,100.6 403.1,102.7 402.3,104.2 400.9,106.8 399.8,108.8 398.8,110.3 397.7,111.8 396.4,113.4 394.9,115.2 393.4,116.9 391.9,118.4 390.4,119.9 388.9,121.2 387.4,122.5 385.7,123.9 383.7,125.4 381.5,126.9 379.9,128.0 378.4,128.9 376.6,129.9 373.9,131.4 372.4,132.1 370.7,132.9 367.9,134.1 366.4,134.7 363.4,135.8 361.9,136.3 358.9,137.2 357.4,137.6 354.4,138.3 351.4,138.9 349.9,139.2 346.9,139.6 343.9,140.0 340.9,140.2 337.9,140.3 334.9,140.4 331.9,140.4 328.9,140.4 325.9,140.4 322.9,140.3 319.9,140.1 316.9,140.0 313.9,139.8 310.8,139.6 307.8,139.3 304.8,139.0 303.3,138.9 300.3,138.6 297.3,138.2 294.3,137.7 292.6,137.5 289.8,137.1 286.8,136.6 283.8,136.1 282.3,135.9 279.3,135.4 276.3,134.9 274.0,134.4 271.8,134.1 268.8,133.5 265.8,133.0 264.3,132.7 261.3,132.1 258.3,131.5 256.8,131.2 253.8,130.6 250.8,129.9 249.3,129.6 246.3,128.9 244.4,128.4 241.8,127.7 238.8,126.9 237.3,126.5 234.3,125.6 232.8,125.1 229.8,124.1 228.3,123.6 225.3,122.5 223.8,121.9 220.7,121.2 219.2,120.8 216.2,120.0 214.1,119.3 211.7,118.6 209.3,117.8 207.2,117.2 204.8,116.3 202.7,115.6 200.7,114.8 198.2,113.9 196.7,113.2 193.7,112.0 192.2,111.3 190.1,110.3 187.7,109.1 186.2,108.2 184.5,107.3 182.1,105.7 180.2,104.5 178.7,103.3 177.2,102.1 175.7,100.8 174.2,99.3 172.7,97.5 171.2,95.5 170.1,93.7 169.4,92.1 168.4,89.1 168.2,87.6 168.1,84.6 168.3,83.1 169.0,80.1 169.7,78.5 171.2,75.8 172.5,74.0 173.8,72.5 175.2,71.0 176.9,69.5 178.7,68.0 180.2,66.9 181.7,65.8 183.2,64.9 185.6,63.4 187.7,62.3 189.2,61.5 191.4,60.4 193.7,59.4 195.2,58.7 198.2,57.5 199.7,56.9 202.4,55.9 204.2,55.2 206.6,54.4 208.7,53.7 211.2,52.9 213.2,52.2 216.2,51.4 217.7,51.0 220.7,50.2 222.2,49.8 225.3,48.9 226.8,48.3 229.8,47.3 231.3,46.8 234.3,45.8 235.8,45.3 238.8,44.4 241.0,43.8 243.3,43.2 246.3,42.4 247.8,42.1 250.8,41.4 253.5,40.8 255.3,40.4 258.3,39.8 260.9,39.3 262.8,38.9 265.8,38.3 268.8,37.8 270.3,37.5 273.3,36.9 276.3,36.4 277.8,36.2 280.8,35.6 283.8,35.1 286.3,34.7 288.3,34.4 291.3,33.9 294.3,33.5 296.3,33.2 298.8,32.9 301.8,32.5 304.8,32.2 307.8,31.9 310.4,31.7Z"/>
<path fill="#0000c7" d="M312.1,33.2 313.9,33.1 316.9,32.9 319.9,32.7 322.9,32.5 325.9,32.4 328.9,32.4 331.9,32.3 334.9,32.4 337.9,32.4 340.9,32.6 343.9,32.8 346.9,33.1 348.4,33.3 351.4,33.8 354.4,34.4 355.9,34.8 358.9,35.6 361.2,36.3 363.4,37.0 365.5,37.8 367.9,38.7 369.4,39.3 372.4,40.7 373.9,41.5 375.4,42.3 378.0,43.8 379.9,45.0 381.4,46.0 382.9,47.0 384.7,48.3 386.6,49.9 388.3,51.4 390.0,52.9 391.5,54.4 392.9,55.9 394.2,57.4 395.5,58.9 396.6,60.4 397.9,62.3 399.4,64.7 400.4,66.5 401.2,68.0 402.5,70.8 403.1,72.5 404.0,75.2 404.4,77.0 405.0,80.1 405.3,83.1 405.4,86.1 405.2,89.1 404.8,92.1 404.2,95.2 403.8,96.7 402.7,99.7 402.1,101.2 400.9,103.7 399.9,105.7 399.0,107.3 397.9,108.9 396.4,111.0 394.9,113.0 393.4,114.7 392.0,116.3 390.5,117.8 388.9,119.3 387.4,120.6 385.9,121.9 384.4,123.1 382.9,124.2 381.2,125.4 378.8,126.9 376.9,128.1 375.4,128.9 373.5,129.9 370.9,131.2 369.4,131.9 366.8,132.9 364.9,133.7 362.7,134.4 360.4,135.2 357.7,136.0 355.9,136.4 352.9,137.1 350.8,137.5 348.4,137.9 345.4,138.3 342.4,138.5 339.4,138.7 336.4,138.8 333.4,138.9 330.4,138.9 327.4,138.8 324.4,138.7 321.4,138.6 318.4,138.5 315.4,138.3 312.4,138.0 309.3,137.8 306.3,137.5 304.8,137.4 301.8,137.0 298.8,136.6 295.8,136.2 294.3,136.0 291.3,135.5 288.3,135.0 285.3,134.5 283.8,134.3 280.8,133.8 277.8,133.3 276.0,132.9 273.3,132.5 270.3,131.9 267.6,131.4 265.8,131.1 262.8,130.5 259.8,129.9 258.3,129.7 255.3,129.1 252.3,128.4 250.8,128.1 247.8,127.4 245.7,126.9 243.3,126.3 240.3,125.5 238.8,125.1 235.8,124.2 234.3,123.7 231.3,122.7 229.8,122.2 226.8,121.2 225.3,120.6 222.2,119.6 220.7,119.2 217.7,118.4 215.7,117.8 213.2,117.1 210.9,116.3 208.7,115.6 206.6,114.8 204.2,113.9 202.7,113.3 199.7,112.1 198.2,111.4 195.6,110.3 193.7,109.3 192.2,108.6 189.8,107.3 187.7,106.0 186.2,105.1 184.7,104.1 182.8,102.7 181.0,101.2 179.3,99.7 177.9,98.2 176.6,96.7 175.5,95.2 174.2,92.8 173.3,90.6 172.7,88.3 172.4,86.1 172.7,83.1 173.0,81.6 174.2,78.6 175.0,77.0 176.0,75.5 177.2,73.9 178.7,72.3 180.2,70.8 181.7,69.5 183.7,68.0 185.8,66.5 187.7,65.3 189.2,64.4 190.9,63.4 193.7,62.0 195.2,61.3 197.0,60.4 199.7,59.2 201.2,58.6 204.2,57.4 205.7,56.9 208.4,55.9 210.2,55.2 212.9,54.4 214.7,53.8 217.7,52.9 219.2,52.5 222.2,51.7 223.8,51.3 226.8,50.2 228.3,49.6 231.3,48.6 232.8,48.1 235.8,47.1 237.3,46.7 240.3,45.8 242.2,45.3 244.8,44.6 247.8,43.9 249.3,43.6 252.3,42.9 255.2,42.3 256.8,42.0 259.8,41.3 262.7,40.8 264.3,40.5 267.3,39.9 270.3,39.4 271.8,39.1 274.8,38.5 277.8,38.0 279.3,37.7 282.3,37.2 285.3,36.7 288.1,36.3 289.8,36.0 292.8,35.5 295.8,35.0 298.0,34.7 300.3,34.4 303.3,34.0 306.3,33.7 309.3,33.5 312.1,33.2Z"/>
<path fill="#0000cf" d="M311.8,34.7 313.9,34.6 316.9,34.3 319.9,34.1 322.9,34.0 325.9,33.8 328.9,33.8 331.9,33.7 334.9,33.8 337.9,33.8 340.9,34.0 343.9,34.2 346.9,34.5 348.4,34.8 351.4,35.2 354.4,35.9 356.0,36.3 358.9,37.0 361.4,37.8 363.4,38.4 365.7,39.3 367.9,40.2 369.4,40.8 372.4,42.2 373.9,43.0 375.4,43.8 378.0,45.3 379.9,46.6 381.4,47.6 382.9,48.7 384.5,49.9 386.3,51.4 388.1,52.9 389.7,54.4 391.2,55.9 392.5,57.4 393.8,58.9 395.0,60.4 396.4,62.4 397.9,64.7 399.0,66.5 399.8,68.0 400.9,70.6 401.7,72.5 402.5,74.8 403.1,77.0 403.7,80.1 404.0,82.9 404.1,84.6 404.0,87.6 403.9,89.1 403.5,92.1 402.8,95.2 402.4,96.7 401.3,99.7 400.7,101.2 399.4,103.8 398.4,105.7 397.5,107.3 396.4,108.8 394.9,110.9 393.4,112.7 391.9,114.5 390.4,116.0 388.9,117.5 387.4,118.9 385.9,120.2 384.4,121.4 382.9,122.5 381.1,123.9 378.8,125.4 376.9,126.5 375.4,127.4 373.5,128.4 370.9,129.7 369.4,130.4 366.9,131.4 364.9,132.2 362.9,132.9 360.4,133.8 358.0,134.4 355.9,135.0 352.9,135.7 351.3,136.0 348.4,136.5 345.4,136.8 342.4,137.1 339.4,137.3 336.4,137.4 333.4,137.4 330.4,137.4 327.4,137.4 324.4,137.3 321.4,137.2 318.4,137.0 315.4,136.8 312.4,136.5 309.3,136.3 306.3,136.0 304.8,135.8 301.8,135.5 298.8,135.1 295.8,134.6 294.3,134.4 291.3,133.9 288.3,133.4 285.6,132.9 283.8,132.6 280.8,132.1 277.8,131.6 276.3,131.3 273.3,130.8 270.3,130.2 268.7,129.9 265.8,129.4 262.8,128.8 260.7,128.4 258.3,127.9 255.3,127.3 253.2,126.9 250.8,126.4 247.8,125.7 246.3,125.3 243.3,124.6 240.6,123.9 238.8,123.4 235.8,122.5 234.3,122.0 231.3,121.0 229.8,120.5 226.8,119.5 225.3,118.9 222.2,117.9 220.7,117.5 217.7,116.7 216.2,116.2 213.2,115.2 211.7,114.7 208.7,113.6 207.2,113.1 204.2,111.9 202.7,111.2 200.5,110.3 198.2,109.2 196.7,108.4 194.4,107.3 192.2,106.0 190.7,105.1 189.2,104.1 187.3,102.7 185.3,101.2 183.6,99.7 182.1,98.2 180.8,96.7 179.6,95.2 178.7,93.7 177.3,90.6 176.8,89.1 176.4,86.1 176.7,83.1 177.2,81.1 178.2,78.6 179.1,77.0 180.2,75.4 181.7,73.6 183.2,72.0 184.7,70.7 186.2,69.4 188.1,68.0 190.4,66.5 192.2,65.4 193.7,64.5 195.7,63.4 198.2,62.2 199.7,61.4 202.0,60.4 204.2,59.5 205.7,58.9 208.7,57.7 210.2,57.2 213.2,56.1 214.7,55.6 217.7,54.7 219.2,54.2 222.2,53.4 224.1,52.9 226.8,51.9 228.3,51.3 231.3,50.3 232.8,49.8 235.8,48.8 237.4,48.3 240.3,47.5 242.9,46.8 244.8,46.3 247.8,45.6 249.3,45.3 252.3,44.6 255.3,44.0 256.8,43.7 259.8,43.1 262.8,42.5 264.3,42.2 267.3,41.6 270.3,41.1 271.8,40.8 274.8,40.2 277.8,39.7 280.1,39.3 282.3,38.9 285.3,38.4 288.3,37.8 289.8,37.6 292.8,37.1 295.8,36.6 298.4,36.3 300.3,36.0 303.3,35.5 306.3,35.2 309.3,35.0 311.8,34.7Z"/>
<path fill="#0000d6" d="M310.2,36.3 312.4,36.0 315.4,35.8 318.4,35.5 321.4,35.4 324.4,35.2 327.4,35.1 330.4,35.1 333.4,35.0 336.4,35.1 339.4,35.2 342.4,35.4 345.4,35.7 348.4,36.1 349.9,36.3 352.9,36.8 355.9,37.5 357.4,37.9 360.4,38.8 362.0,39.3 364.9,40.3 366.4,40.9 369.4,42.2 370.9,42.9 372.8,43.8 375.4,45.2 376.9,46.1 378.4,47.0 380.4,48.3 382.5,49.9 384.4,51.3 385.9,52.6 387.4,53.9 388.9,55.3 390.4,56.9 391.9,58.5 393.4,60.3 394.7,61.9 395.7,63.4 396.7,65.0 397.9,67.1 399.2,69.5 399.8,71.0 400.9,74.0 401.4,75.5 402.2,78.6 402.5,80.2 402.8,83.1 402.9,86.1 402.7,89.1 402.5,90.9 402.0,93.7 401.1,96.7 400.6,98.2 399.4,101.1 398.7,102.7 397.9,104.2 396.4,106.7 395.0,108.8 393.9,110.3 392.7,111.8 391.4,113.3 390.0,114.8 388.5,116.3 386.8,117.8 385.1,119.3 383.2,120.8 381.4,122.1 379.9,123.2 378.4,124.2 376.4,125.4 373.9,126.8 372.4,127.6 370.7,128.4 367.9,129.7 366.4,130.3 363.4,131.4 361.9,132.0 358.9,132.9 357.4,133.3 354.4,134.0 352.4,134.4 349.9,134.9 346.9,135.4 343.9,135.7 340.9,135.9 339.4,136.0 336.4,136.1 333.4,136.2 330.4,136.1 327.4,136.1 324.4,136.0 322.9,135.9 319.9,135.8 316.9,135.6 313.9,135.3 310.8,135.0 307.8,134.7 305.2,134.4 303.3,134.3 300.3,133.8 297.3,133.4 294.6,132.9 292.8,132.7 289.8,132.2 286.8,131.6 285.3,131.4 282.3,130.8 279.3,130.3 277.3,129.9 274.8,129.5 271.8,128.9 269.1,128.4 267.3,128.1 264.3,127.5 261.3,126.9 259.8,126.6 256.8,126.1 253.8,125.4 252.3,125.1 249.3,124.5 246.7,123.9 244.8,123.4 241.8,122.6 240.3,122.2 237.3,121.4 235.5,120.8 232.8,120.0 230.9,119.3 228.3,118.4 226.6,117.8 223.8,116.8 222.2,116.3 219.2,115.5 217.1,114.8 214.7,114.1 212.6,113.3 210.2,112.4 208.6,111.8 205.7,110.6 204.2,110.0 201.6,108.8 199.7,107.8 198.2,107.0 195.9,105.7 193.7,104.4 192.2,103.4 190.7,102.4 189.2,101.2 187.5,99.7 185.9,98.2 184.5,96.7 183.2,94.9 181.7,92.4 180.9,90.6 180.2,87.7 180.1,86.1 180.2,83.8 180.7,81.6 181.7,79.0 182.8,77.0 183.8,75.5 185.1,74.0 186.5,72.5 188.2,71.0 190.0,69.5 192.1,68.0 193.7,66.9 195.2,66.0 197.0,65.0 199.7,63.5 201.2,62.8 203.0,61.9 205.7,60.7 207.2,60.1 210.2,58.9 211.7,58.3 214.4,57.4 216.2,56.8 219.2,55.9 220.7,55.4 223.8,54.6 225.3,54.0 228.3,52.9 229.8,52.4 232.8,51.4 234.3,50.9 237.3,50.0 238.8,49.5 241.8,48.7 243.3,48.3 246.3,47.6 249.3,46.9 250.8,46.5 253.8,45.9 256.5,45.3 258.3,45.0 261.3,44.4 264.2,43.8 265.8,43.5 268.8,42.9 271.8,42.4 273.3,42.1 276.3,41.5 279.3,41.0 280.8,40.7 283.8,40.1 286.8,39.6 288.8,39.3 291.3,38.8 294.3,38.3 297.3,37.9 298.8,37.6 301.8,37.2 304.8,36.8 307.8,36.5 310.2,36.3Z"/>
<path fill="#0000dd" d="M331.9,36.3 332.0,36.3 334.9,36.3 337.9,36.3 340.9,36.5 343.9,36.7 346.9,37.0 349.9,37.5 351.4,37.8 354.4,38.4 357.4,39.1 358.9,39.5 361.9,40.5 363.4,41.0 366.4,42.1 367.9,42.8 370.2,43.8 372.4,44.9 373.9,45.7 375.9,46.8 378.4,48.3 379.9,49.4 381.4,50.4 382.9,51.5 384.6,52.9 386.3,54.4 387.9,55.9 389.4,57.4 390.8,58.9 392.1,60.4 393.4,62.1 394.9,64.2 396.3,66.5 397.2,68.0 397.9,69.5 399.3,72.5 399.8,74.0 400.7,77.0 401.0,78.6 401.5,81.6 401.7,84.6 401.7,87.6 401.4,90.6 400.9,93.0 400.4,95.2 399.4,98.2 398.9,99.7 397.9,101.7 396.6,104.2 395.7,105.7 394.7,107.3 393.4,109.1 391.9,111.0 390.4,112.7 388.9,114.3 387.4,115.8 385.9,117.2 384.4,118.5 382.9,119.7 381.3,120.8 379.2,122.4 376.9,123.8 375.4,124.7 373.9,125.5 371.2,126.9 369.4,127.8 367.9,128.4 364.9,129.7 363.4,130.2 360.4,131.2 358.9,131.7 355.9,132.5 353.9,132.9 351.4,133.5 348.4,134.0 345.4,134.3 343.9,134.5 340.9,134.7 337.9,134.9 334.9,135.0 331.9,135.0 328.9,134.9 325.9,134.8 322.9,134.7 319.9,134.5 318.4,134.4 315.4,134.2 312.4,133.9 309.3,133.6 306.3,133.3 303.3,132.9 301.8,132.7 298.8,132.3 295.8,131.8 293.7,131.4 291.3,131.0 288.3,130.5 285.3,129.9 283.8,129.7 280.8,129.1 277.8,128.6 276.3,128.3 273.3,127.7 270.3,127.2 268.8,126.9 265.8,126.3 262.8,125.7 261.0,125.4 258.3,124.9 255.3,124.3 253.4,123.9 250.8,123.3 247.8,122.6 246.3,122.3 243.3,121.6 240.6,120.8 238.8,120.3 235.8,119.5 234.3,119.0 231.3,118.0 229.8,117.5 226.8,116.4 225.3,115.9 222.2,114.8 220.7,114.4 217.7,113.5 216.2,113.0 213.2,112.0 211.7,111.4 208.9,110.3 207.2,109.6 205.4,108.8 202.7,107.5 201.2,106.7 199.5,105.7 196.9,104.2 195.2,103.1 193.7,102.0 192.2,100.9 190.7,99.6 189.2,98.1 187.7,96.5 186.2,94.5 184.9,92.1 184.2,90.6 183.4,87.6 183.3,84.6 183.9,81.6 184.7,79.6 186.1,77.0 187.2,75.5 188.4,74.0 189.9,72.5 191.6,71.0 193.5,69.5 195.2,68.3 196.7,67.3 198.2,66.3 200.7,65.0 202.7,63.9 204.2,63.1 206.9,61.9 208.7,61.1 210.5,60.4 213.2,59.4 214.7,58.9 217.7,57.8 219.2,57.4 222.2,56.5 224.2,55.9 226.8,54.9 228.3,54.4 231.3,53.3 232.8,52.8 235.8,51.9 237.5,51.4 240.3,50.6 243.0,49.9 244.8,49.4 247.8,48.7 249.3,48.3 252.3,47.7 255.3,47.1 256.8,46.7 259.8,46.1 262.8,45.6 264.3,45.3 267.3,44.7 270.3,44.1 272.0,43.8 274.8,43.3 277.8,42.7 280.0,42.3 282.3,41.8 285.3,41.3 288.2,40.8 289.8,40.5 292.8,39.9 295.8,39.4 297.3,39.2 300.3,38.7 303.3,38.3 306.3,37.9 308.0,37.8 310.8,37.5 313.9,37.2 316.9,36.9 319.9,36.7 322.9,36.5 325.9,36.4 328.9,36.3 331.9,36.3Z"/>
<path fill="#0000e4" d="M320.9,37.8 322.9,37.6 325.9,37.5 328.9,37.4 331.9,37.4 334.9,37.4 337.9,37.4 340.9,37.6 343.2,37.8 345.4,38.0 348.4,38.4 351.4,38.9 353.3,39.3 355.9,39.9 358.9,40.7 360.4,41.1 363.4,42.1 364.9,42.7 367.6,43.8 369.4,44.6 370.9,45.3 373.8,46.8 375.4,47.7 376.9,48.6 378.8,49.9 381.0,51.4 382.9,52.9 384.4,54.1 385.9,55.4 387.4,56.8 388.9,58.3 390.4,60.0 391.9,61.8 393.2,63.4 394.2,65.0 395.2,66.5 396.4,68.8 397.5,71.0 398.2,72.5 399.2,75.5 399.6,77.0 400.3,80.1 400.6,83.1 400.7,86.1 400.5,89.1 400.1,92.1 399.4,94.8 398.9,96.7 397.9,99.2 397.1,101.2 396.3,102.7 394.9,105.1 393.5,107.3 392.4,108.8 391.2,110.3 389.9,111.8 388.5,113.3 387.0,114.8 385.3,116.3 383.6,117.8 381.6,119.3 379.9,120.6 378.4,121.6 376.9,122.6 374.7,123.9 372.4,125.1 370.9,125.9 368.7,126.9 366.4,127.9 364.9,128.5 361.9,129.6 360.4,130.1 357.4,131.0 355.5,131.4 352.9,132.0 349.9,132.6 347.6,132.9 345.4,133.2 342.4,133.5 339.4,133.7 336.4,133.8 333.4,133.9 330.4,133.8 327.4,133.8 324.4,133.7 321.4,133.5 318.4,133.3 315.4,133.0 313.9,132.9 310.8,132.6 307.8,132.3 304.8,131.9 301.8,131.5 300.3,131.3 297.3,130.8 294.3,130.3 292.4,129.9 289.8,129.5 286.8,128.9 284.2,128.4 282.3,128.1 279.3,127.5 276.3,126.9 274.8,126.6 271.8,126.1 268.8,125.5 267.3,125.2 264.3,124.6 261.3,124.0 259.8,123.7 256.8,123.2 253.8,122.5 252.3,122.2 249.3,121.6 246.3,120.9 244.8,120.5 241.8,119.8 240.2,119.3 237.3,118.5 235.0,117.8 232.8,117.1 230.4,116.3 228.3,115.6 226.2,114.8 223.8,113.9 221.7,113.3 219.2,112.6 216.8,111.8 214.7,111.1 212.6,110.3 210.2,109.3 208.7,108.7 205.7,107.3 204.2,106.6 202.7,105.7 200.0,104.2 198.2,103.1 196.7,102.0 195.2,100.9 193.7,99.6 192.2,98.2 190.7,96.6 189.2,94.7 187.7,92.1 187.1,90.6 186.3,87.6 186.2,86.1 186.2,84.5 186.8,81.6 187.7,79.3 189.0,77.0 190.0,75.5 191.3,74.0 192.8,72.5 194.5,71.0 196.5,69.5 198.2,68.3 199.7,67.3 201.2,66.4 203.9,65.0 205.7,64.0 207.2,63.3 210.2,62.0 211.7,61.4 214.4,60.4 216.2,59.8 218.9,58.9 220.7,58.3 223.8,57.5 225.3,56.9 228.0,55.9 229.8,55.2 232.3,54.4 234.3,53.7 237.1,52.9 238.8,52.4 241.8,51.6 243.3,51.2 246.3,50.4 248.8,49.9 250.8,49.4 253.8,48.8 255.9,48.3 258.3,47.9 261.3,47.3 263.6,46.8 265.8,46.4 268.8,45.8 271.4,45.3 273.3,44.9 276.3,44.4 279.2,43.8 280.8,43.5 283.8,42.9 286.8,42.3 288.3,42.1 291.3,41.5 294.3,41.0 295.8,40.7 298.8,40.2 301.8,39.7 304.8,39.3 306.3,39.1 309.3,38.8 312.4,38.5 315.4,38.2 318.4,37.9 320.9,37.8Z"/>
<path fill="#0000eb" d="M315.5,39.3 318.4,39.0 321.4,38.8 324.4,38.6 327.4,38.5 330.4,38.4 333.4,38.4 336.4,38.4 339.4,38.5 342.4,38.7 345.4,39.0 347.3,39.3 349.9,39.7 352.9,40.2 355.3,40.8 357.4,41.3 360.4,42.2 361.9,42.7 364.9,43.8 366.4,44.4 368.5,45.3 370.9,46.4 372.4,47.2 374.5,48.3 376.9,49.8 378.4,50.8 379.9,51.8 381.4,52.9 383.3,54.4 385.0,55.9 386.7,57.4 388.2,58.9 389.5,60.4 390.8,61.9 392.0,63.4 393.4,65.5 394.9,68.0 395.7,69.5 396.5,71.0 397.7,74.0 398.2,75.5 399.0,78.6 399.4,81.2 399.7,83.1 399.7,86.1 399.6,89.1 399.4,90.6 398.8,93.7 397.9,96.5 397.3,98.2 396.4,100.2 395.2,102.7 394.3,104.2 393.4,105.7 391.9,107.8 390.4,109.7 388.9,111.4 387.4,113.0 385.9,114.5 384.4,115.8 382.9,117.1 381.4,118.3 379.9,119.4 377.8,120.8 375.4,122.3 373.9,123.2 372.4,124.0 369.6,125.4 367.9,126.2 366.2,126.9 363.4,128.0 361.9,128.5 358.9,129.5 357.3,129.9 354.4,130.6 351.4,131.3 349.9,131.5 346.9,132.0 343.9,132.3 340.9,132.6 337.9,132.7 334.9,132.8 331.9,132.8 328.9,132.8 325.9,132.7 322.9,132.5 319.9,132.3 316.9,132.1 313.9,131.8 310.8,131.5 309.3,131.3 306.3,130.9 303.3,130.6 300.3,130.1 298.8,129.8 295.8,129.3 292.8,128.8 290.8,128.4 288.3,127.9 285.3,127.4 282.9,126.9 280.8,126.5 277.8,125.9 275.2,125.4 273.3,125.0 270.3,124.4 267.4,123.9 265.8,123.6 262.8,123.0 259.8,122.4 258.3,122.1 255.3,121.5 252.3,120.9 250.8,120.6 247.8,119.9 245.4,119.3 243.3,118.8 240.3,118.0 238.8,117.6 235.8,116.7 234.3,116.3 231.3,115.3 229.8,114.8 226.8,113.7 225.3,113.2 222.2,112.2 220.7,111.7 217.7,110.8 216.2,110.3 213.2,109.2 211.7,108.6 208.7,107.3 207.2,106.6 205.5,105.7 202.8,104.2 201.2,103.3 199.7,102.3 198.2,101.2 196.3,99.7 194.7,98.2 193.2,96.7 192.0,95.2 190.7,93.1 189.5,90.6 189.0,89.1 188.6,86.1 188.8,83.1 189.2,81.6 190.5,78.6 191.4,77.0 192.5,75.5 193.9,74.0 195.4,72.5 197.1,71.0 199.1,69.5 201.2,68.1 202.7,67.2 204.2,66.3 206.9,65.0 208.7,64.1 210.2,63.4 213.2,62.2 214.7,61.6 217.7,60.6 219.2,60.1 222.2,59.2 223.8,58.7 226.8,57.6 228.3,57.1 231.3,56.1 232.8,55.6 235.8,54.6 237.3,54.2 240.3,53.3 241.9,52.9 244.8,52.1 247.8,51.4 249.3,51.1 252.3,50.4 255.1,49.9 256.8,49.5 259.8,48.9 262.7,48.3 264.3,48.0 267.3,47.4 270.3,46.9 271.8,46.6 274.8,46.0 277.8,45.4 279.3,45.1 282.3,44.5 285.3,43.9 286.8,43.6 289.8,43.0 292.8,42.5 294.3,42.2 297.3,41.6 300.3,41.1 302.6,40.8 304.8,40.5 307.8,40.1 310.8,39.7 313.9,39.4 315.5,39.3Z"/>
<path fill="#0000f2" d="M311.0,40.8 313.9,40.5 316.9,40.2 319.9,39.9 322.9,39.7 325.9,39.6 328.9,39.5 331.9,39.4 334.9,39.4 337.9,39.5 340.9,39.6 343.9,39.8 346.9,40.2 349.9,40.7 351.4,40.9 354.4,41.6 357.3,42.3 358.9,42.7 361.9,43.7 363.4,44.2 366.2,45.3 367.9,46.1 369.6,46.8 372.4,48.3 373.9,49.1 375.4,50.0 377.6,51.4 379.8,52.9 381.4,54.1 382.9,55.3 384.4,56.6 385.9,58.0 387.4,59.5 388.9,61.1 390.4,62.9 391.9,64.9 393.0,66.5 393.9,68.0 394.9,69.9 396.1,72.5 396.7,74.0 397.7,77.0 398.1,78.6 398.6,81.6 398.8,84.6 398.8,87.6 398.4,90.6 397.9,93.1 397.4,95.2 396.4,97.9 395.7,99.7 394.9,101.3 393.4,104.0 392.3,105.7 391.2,107.3 390.0,108.8 388.8,110.3 387.4,111.8 385.9,113.3 384.2,114.8 382.4,116.3 380.5,117.8 378.4,119.3 376.9,120.3 375.4,121.2 373.5,122.4 370.9,123.7 369.4,124.5 367.3,125.4 364.9,126.4 363.4,127.0 360.4,128.0 358.9,128.4 355.9,129.3 353.1,129.9 351.4,130.3 348.4,130.8 345.4,131.2 343.0,131.4 340.9,131.6 337.9,131.7 334.9,131.8 331.9,131.8 328.9,131.8 325.9,131.7 322.9,131.5 321.4,131.4 318.4,131.2 315.4,130.9 312.4,130.6 309.3,130.2 306.8,129.9 304.8,129.7 301.8,129.2 298.8,128.7 297.1,128.4 294.3,127.9 291.3,127.3 289.0,126.9 286.8,126.5 283.8,125.9 281.4,125.4 279.3,125.0 276.3,124.4 273.9,123.9 271.8,123.5 268.8,122.9 266.2,122.4 264.3,122.0 261.3,121.4 258.5,120.8 256.8,120.5 253.8,119.9 251.1,119.3 249.3,119.0 246.3,118.3 244.4,117.8 241.8,117.2 238.8,116.3 237.3,115.9 234.3,115.0 232.8,114.5 229.8,113.5 228.3,113.0 225.3,111.9 223.8,111.4 220.7,110.5 219.2,110.1 216.2,109.1 214.7,108.5 211.7,107.3 210.2,106.7 208.2,105.7 205.7,104.5 204.2,103.7 202.7,102.7 200.5,101.2 198.5,99.7 196.9,98.2 195.4,96.7 194.2,95.2 193.1,93.7 192.2,92.0 191.1,89.1 190.7,86.1 190.7,86.1 190.9,83.1 191.9,80.1 192.6,78.6 193.7,76.8 195.2,74.9 196.7,73.3 198.2,71.9 199.7,70.7 201.4,69.5 203.8,68.0 205.7,66.9 207.2,66.1 209.6,65.0 211.7,64.0 213.2,63.4 216.2,62.3 217.7,61.8 220.7,60.8 222.2,60.4 225.3,59.4 226.8,58.9 229.8,57.8 231.3,57.3 234.3,56.3 235.8,55.9 238.8,55.0 241.0,54.4 243.3,53.8 246.3,53.1 247.8,52.7 250.8,52.0 253.8,51.4 255.3,51.1 258.3,50.5 261.3,49.9 262.8,49.6 265.8,49.0 268.8,48.4 270.3,48.1 273.3,47.5 276.3,46.9 277.8,46.6 280.8,46.0 283.8,45.4 285.3,45.1 288.3,44.5 291.3,43.9 292.8,43.6 295.8,43.0 298.8,42.5 300.3,42.3 303.3,41.8 306.3,41.4 309.3,41.0 311.0,40.8Z"/>
<path fill="#0000f9" d="M321.2,40.8 322.9,40.7 325.9,40.5 328.9,40.4 331.9,40.3 334.9,40.3 337.9,40.4 340.9,40.6 343.8,40.8 345.4,41.0 348.4,41.3 351.4,41.9 353.4,42.3 355.9,42.9 358.9,43.7 360.4,44.2 363.4,45.2 364.9,45.8 367.4,46.8 369.4,47.7 370.9,48.5 373.5,49.9 375.4,51.0 376.9,51.9 378.4,53.0 380.4,54.4 382.3,55.9 384.1,57.4 385.7,58.9 387.2,60.4 388.5,61.9 389.8,63.4 390.9,65.0 391.9,66.5 393.4,68.9 394.5,71.0 395.2,72.5 396.3,75.5 396.8,77.0 397.5,80.1 397.9,83.1 397.9,86.1 397.8,89.1 397.3,92.1 396.5,95.2 396.0,96.7 394.9,99.3 394.0,101.2 393.2,102.7 391.9,104.7 390.4,106.9 388.9,108.8 387.6,110.3 386.2,111.8 384.6,113.3 382.9,114.8 381.4,116.0 379.9,117.2 378.4,118.3 376.8,119.3 374.3,120.8 372.4,121.9 370.9,122.7 368.5,123.9 366.4,124.8 364.9,125.4 361.9,126.5 360.4,127.0 357.4,127.9 355.5,128.4 352.9,129.0 349.9,129.6 347.9,129.9 345.4,130.3 342.4,130.6 339.4,130.7 336.4,130.8 333.4,130.9 330.4,130.9 327.4,130.8 324.4,130.6 321.4,130.4 318.4,130.2 315.4,129.9 313.9,129.8 310.8,129.4 307.8,129.0 304.8,128.6 303.3,128.4 300.3,127.9 297.3,127.4 294.8,126.9 292.8,126.5 289.8,125.9 287.1,125.4 285.3,125.0 282.3,124.4 279.8,123.9 277.8,123.5 274.8,122.9 272.4,122.4 270.3,121.9 267.3,121.3 264.8,120.8 262.8,120.5 259.8,119.9 257.1,119.3 255.3,119.0 252.3,118.4 249.8,117.8 247.8,117.4 244.8,116.7 243.3,116.3 240.3,115.5 237.7,114.8 235.8,114.2 232.8,113.3 231.3,112.8 228.3,111.8 226.8,111.3 223.8,110.3 222.2,109.9 219.2,109.0 217.7,108.5 214.7,107.4 213.2,106.8 210.7,105.7 208.7,104.8 207.2,104.1 204.9,102.7 202.7,101.4 201.2,100.3 199.7,99.0 198.2,97.7 196.7,96.0 195.2,94.0 194.1,92.1 193.4,90.6 192.6,87.6 192.5,84.6 193.1,81.6 193.7,80.1 195.2,77.3 196.5,75.5 197.9,74.0 199.5,72.5 201.2,71.1 202.7,70.0 204.2,69.0 206.0,68.0 208.7,66.5 210.2,65.8 212.2,65.0 214.7,63.9 216.2,63.4 219.2,62.4 220.8,61.9 223.8,61.1 225.6,60.4 228.3,59.5 230.1,58.9 232.8,58.0 234.8,57.4 237.3,56.6 240.0,55.9 241.8,55.4 244.8,54.7 246.3,54.3 249.3,53.6 252.3,53.0 253.8,52.6 256.8,52.0 259.8,51.4 261.3,51.1 264.3,50.5 267.3,49.9 268.8,49.6 271.8,49.0 274.8,48.4 276.3,48.1 279.3,47.5 282.3,46.9 283.8,46.5 286.8,45.9 289.8,45.3 291.3,45.0 294.3,44.4 297.3,43.9 298.8,43.6 301.8,43.0 304.8,42.6 307.0,42.3 309.3,42.0 312.4,41.6 315.4,41.3 318.4,41.0 321.2,40.8Z"/>
<path fill="#0002ff" d="M314.8,42.3 316.9,42.1 319.9,41.8 322.9,41.6 325.9,41.4 328.9,41.3 331.9,41.2 334.9,41.2 337.9,41.3 340.9,41.4 343.9,41.7 346.9,42.0 348.6,42.3 351.4,42.8 354.4,43.4 355.9,43.8 358.9,44.6 361.1,45.3 363.4,46.1 365.2,46.8 367.9,48.0 369.4,48.7 371.7,49.9 373.9,51.1 375.4,52.0 376.9,52.9 379.0,54.4 381.0,55.9 382.8,57.4 384.4,58.9 385.9,60.3 387.4,61.9 388.7,63.4 389.9,65.0 391.0,66.5 391.9,68.0 393.4,70.7 394.3,72.5 394.9,74.1 395.9,77.0 396.4,79.2 396.9,81.6 397.1,84.6 397.1,87.6 396.7,90.6 396.4,92.1 395.6,95.2 394.9,97.1 393.8,99.7 393.1,101.2 391.9,103.2 390.4,105.5 389.1,107.3 387.9,108.8 386.5,110.3 385.0,111.8 383.4,113.3 381.6,114.8 379.9,116.1 378.4,117.2 376.9,118.3 375.2,119.3 372.6,120.8 370.9,121.8 369.4,122.5 366.4,123.9 364.9,124.5 362.5,125.4 360.4,126.1 357.8,126.9 355.9,127.4 352.9,128.1 351.4,128.4 348.4,129.0 345.4,129.4 342.4,129.7 339.4,129.8 336.9,129.9 334.9,130.0 331.9,130.0 329.3,129.9 327.4,129.9 324.4,129.7 321.4,129.5 318.4,129.3 315.4,129.0 312.4,128.6 310.5,128.4 307.8,128.1 304.8,127.6 301.8,127.2 300.3,126.9 297.3,126.3 294.3,125.8 292.4,125.4 289.8,124.9 286.8,124.2 285.1,123.9 282.3,123.3 279.3,122.6 277.8,122.3 274.8,121.7 271.8,121.1 270.3,120.8 267.3,120.2 264.3,119.6 262.8,119.3 259.8,118.7 256.8,118.1 255.3,117.8 252.3,117.2 249.3,116.5 247.8,116.2 244.8,115.5 242.1,114.8 240.3,114.3 237.3,113.5 235.8,113.1 232.8,112.2 231.3,111.7 228.3,110.7 226.8,110.2 223.8,109.2 222.1,108.8 219.2,108.0 217.2,107.3 214.7,106.4 213.1,105.7 210.2,104.5 208.7,103.8 206.8,102.7 204.4,101.2 202.7,100.1 201.2,98.9 199.7,97.5 198.2,95.9 196.7,93.9 195.7,92.1 195.0,90.6 194.2,87.6 194.1,84.6 194.7,81.6 195.3,80.1 196.7,77.5 198.2,75.5 199.6,74.0 201.2,72.5 202.7,71.3 204.2,70.2 205.7,69.3 208.1,68.0 210.2,66.9 211.7,66.2 214.7,65.0 216.2,64.4 219.2,63.4 220.7,63.0 223.8,62.1 225.3,61.6 228.3,60.6 229.8,60.1 232.8,59.2 234.3,58.7 237.3,57.8 238.8,57.4 241.8,56.6 244.6,55.9 246.3,55.5 249.3,54.8 251.3,54.4 253.8,53.8 256.8,53.2 258.6,52.9 261.3,52.3 264.3,51.7 266.2,51.4 268.8,50.8 271.8,50.2 273.5,49.9 276.3,49.3 279.3,48.6 280.8,48.3 283.8,47.7 286.8,47.0 288.3,46.7 291.3,46.1 294.3,45.5 295.8,45.2 298.8,44.6 301.8,44.1 303.3,43.8 306.3,43.4 309.3,42.9 312.4,42.6 314.8,42.3Z"/>
<path fill="#000aff" d="M328.5,42.3 330.4,42.2 333.4,42.2 336.4,42.3 338.0,42.3 340.9,42.4 343.9,42.7 346.9,43.0 349.9,43.5 351.6,43.8 354.4,44.4 357.4,45.2 358.9,45.6 361.9,46.6 363.4,47.1 366.4,48.3 367.9,49.0 369.7,49.9 372.4,51.3 373.9,52.1 375.4,53.1 377.4,54.4 379.5,55.9 381.4,57.4 382.9,58.7 384.4,60.1 385.9,61.6 387.4,63.3 388.8,65.0 389.9,66.5 390.9,68.0 391.9,69.8 393.3,72.5 394.0,74.0 394.9,76.9 395.4,78.6 395.9,81.6 396.2,84.6 396.1,87.6 395.8,90.6 395.1,93.7 394.7,95.2 393.5,98.2 392.8,99.7 391.9,101.4 390.4,103.9 389.1,105.7 388.0,107.3 386.7,108.8 385.3,110.3 383.7,111.8 382.0,113.3 380.2,114.8 378.4,116.1 376.9,117.2 375.4,118.1 373.4,119.3 370.9,120.7 369.4,121.5 367.5,122.4 364.9,123.5 363.4,124.1 360.4,125.1 358.9,125.6 355.9,126.4 353.9,126.9 351.4,127.4 348.4,128.0 345.4,128.4 343.9,128.5 340.9,128.8 337.9,128.9 334.9,129.0 331.9,129.0 328.9,128.9 325.9,128.8 322.9,128.6 319.9,128.4 318.4,128.3 315.4,128.0 312.4,127.6 309.3,127.2 307.1,126.9 304.8,126.6 301.8,126.1 298.8,125.5 297.3,125.2 294.3,124.6 291.3,124.0 289.8,123.7 286.8,123.0 283.8,122.4 282.3,122.0 279.3,121.4 276.9,120.8 274.8,120.4 271.8,119.8 269.7,119.3 267.3,118.8 264.3,118.2 262.3,117.8 259.8,117.3 256.8,116.7 254.7,116.3 252.3,115.8 249.3,115.2 247.6,114.8 244.8,114.2 241.8,113.4 240.3,113.0 237.3,112.2 235.8,111.8 232.8,110.9 230.7,110.3 228.3,109.6 225.8,108.8 223.8,108.1 220.7,107.3 219.2,106.9 216.2,105.9 214.7,105.3 212.1,104.2 210.2,103.4 208.7,102.6 206.3,101.2 204.2,99.8 202.7,98.6 201.2,97.3 199.7,95.7 198.2,93.8 197.2,92.1 196.5,90.6 195.7,87.6 195.6,84.6 196.2,81.6 196.8,80.1 198.2,77.6 199.7,75.7 201.2,74.1 202.7,72.7 204.2,71.6 205.7,70.5 207.4,69.5 210.2,68.0 211.7,67.3 213.7,66.5 216.2,65.5 217.8,65.0 220.7,64.0 223.0,63.4 225.3,62.7 227.9,61.9 229.8,61.3 232.8,60.4 234.3,60.0 237.3,59.1 238.8,58.7 241.8,57.9 243.9,57.4 246.3,56.8 249.3,56.1 250.8,55.8 253.8,55.2 256.8,54.6 258.3,54.3 261.3,53.7 264.3,53.1 265.8,52.8 268.8,52.1 271.8,51.5 273.3,51.2 276.3,50.5 279.3,49.9 280.8,49.5 283.8,48.9 286.3,48.3 288.3,47.9 291.3,47.2 293.3,46.8 295.8,46.3 298.8,45.7 301.0,45.3 303.3,44.9 306.3,44.4 309.3,44.0 310.8,43.8 313.9,43.4 316.9,43.1 319.9,42.8 322.9,42.6 325.9,42.4 328.5,42.3Z"/>
<path fill="#0014ff" d="M322.3,43.8 324.4,43.7 327.4,43.5 330.4,43.4 333.4,43.4 336.4,43.4 339.4,43.5 342.4,43.7 343.9,43.8 346.9,44.2 349.9,44.6 352.9,45.2 354.4,45.6 357.4,46.4 359.0,46.8 361.9,47.8 363.4,48.3 366.4,49.6 367.9,50.2 370.2,51.4 372.4,52.5 373.9,53.4 375.5,54.4 377.7,55.9 379.7,57.4 381.4,58.8 382.9,60.2 384.4,61.6 385.9,63.2 387.4,65.0 388.6,66.5 389.6,68.0 390.5,69.5 391.9,72.1 392.8,74.0 393.4,75.8 394.3,78.6 394.8,81.6 395.0,83.1 395.1,86.1 394.9,88.7 394.7,90.6 394.0,93.7 393.4,95.4 392.4,98.2 391.6,99.7 390.4,101.9 388.9,104.2 387.8,105.7 386.6,107.3 385.2,108.8 383.7,110.3 382.1,111.8 380.3,113.3 378.4,114.8 376.9,115.9 375.4,116.9 373.8,117.8 371.2,119.3 369.4,120.3 367.9,121.0 364.9,122.3 363.4,122.9 360.5,123.9 358.9,124.4 355.9,125.2 354.4,125.6 351.4,126.3 348.4,126.8 346.9,127.0 343.9,127.4 340.9,127.6 337.9,127.8 334.9,127.8 331.9,127.8 328.9,127.8 325.9,127.6 322.9,127.5 319.9,127.2 316.9,126.9 315.4,126.7 312.4,126.4 309.3,126.0 306.3,125.5 304.8,125.3 301.8,124.8 298.8,124.2 297.3,123.9 294.3,123.2 291.3,122.6 289.8,122.3 286.8,121.6 283.8,120.9 282.3,120.6 279.3,119.9 277.0,119.3 274.8,118.9 271.8,118.2 270.1,117.8 267.3,117.2 264.3,116.6 262.8,116.3 259.8,115.7 256.8,115.1 255.3,114.8 252.3,114.2 249.3,113.6 247.8,113.2 244.8,112.5 241.8,111.8 240.3,111.4 237.3,110.7 235.8,110.2 232.8,109.4 230.4,108.8 228.3,108.2 225.3,107.3 223.8,106.9 220.7,106.1 219.2,105.7 216.2,104.7 214.7,104.1 211.7,102.8 210.2,102.1 208.6,101.2 206.2,99.7 204.2,98.3 202.7,96.9 201.2,95.4 199.9,93.7 198.9,92.1 198.2,90.6 197.4,87.6 197.3,84.6 197.9,81.6 198.5,80.1 199.7,78.0 201.2,76.0 202.7,74.4 204.2,73.1 205.7,72.0 207.2,71.0 209.8,69.5 211.7,68.5 213.2,67.9 216.2,66.7 217.7,66.2 220.7,65.3 222.2,64.9 225.3,64.0 227.4,63.4 229.8,62.7 232.7,61.9 234.3,61.5 237.3,60.7 238.8,60.3 241.8,59.5 244.3,58.9 246.3,58.4 249.3,57.8 251.0,57.4 253.8,56.8 256.8,56.2 258.3,55.9 261.3,55.3 264.3,54.7 265.8,54.4 268.8,53.7 271.8,53.1 273.3,52.7 276.3,52.1 279.3,51.4 280.8,51.0 283.8,50.4 286.0,49.9 288.3,49.3 291.3,48.6 292.8,48.3 295.8,47.7 298.8,47.1 300.3,46.8 303.3,46.2 306.3,45.7 309.0,45.3 310.8,45.0 313.9,44.6 316.9,44.3 319.9,44.0 322.3,43.8Z"/>
<path fill="#001eff" d="M318.1,45.3 319.9,45.1 322.9,44.9 325.9,44.7 328.9,44.5 331.9,44.5 334.9,44.5 337.9,44.5 340.9,44.7 343.9,44.9 346.9,45.3 348.4,45.5 351.4,46.0 354.4,46.7 355.9,47.1 358.9,47.9 360.4,48.4 363.4,49.5 364.9,50.1 367.8,51.4 369.4,52.1 370.9,52.9 373.5,54.4 375.4,55.6 376.9,56.6 378.4,57.7 380.0,58.9 381.7,60.4 383.3,61.9 384.8,63.4 386.1,65.0 387.4,66.7 388.9,68.8 390.2,71.0 391.0,72.5 391.9,74.7 392.8,77.0 393.4,79.6 393.8,81.6 394.1,84.6 394.0,87.6 393.6,90.6 393.3,92.1 392.5,95.2 391.9,96.7 390.5,99.7 389.7,101.2 388.7,102.7 387.4,104.5 385.9,106.4 384.4,108.1 382.9,109.6 381.4,111.0 379.9,112.3 378.4,113.5 376.6,114.8 374.3,116.3 372.4,117.5 370.9,118.3 368.9,119.3 366.4,120.5 364.9,121.1 361.9,122.3 360.4,122.8 357.4,123.7 355.9,124.1 352.9,124.9 350.2,125.4 348.4,125.7 345.4,126.1 342.4,126.4 339.4,126.6 336.4,126.7 333.4,126.7 330.4,126.7 327.4,126.6 324.4,126.4 321.4,126.2 318.4,125.9 315.4,125.6 313.8,125.4 310.8,125.0 307.8,124.5 304.8,124.0 303.3,123.8 300.3,123.2 297.3,122.6 295.8,122.2 292.8,121.6 289.8,120.9 288.3,120.5 285.3,119.8 283.2,119.3 280.8,118.8 277.8,118.1 276.3,117.7 273.3,117.0 270.3,116.3 268.8,116.0 265.8,115.4 263.1,114.8 261.3,114.4 258.3,113.8 255.7,113.3 253.8,112.9 250.8,112.3 248.5,111.8 246.3,111.3 243.3,110.6 241.8,110.3 238.8,109.5 235.8,108.8 234.3,108.4 231.3,107.7 229.5,107.3 226.8,106.6 223.8,105.7 222.2,105.4 219.2,104.6 217.7,104.1 214.7,103.0 213.2,102.4 210.7,101.2 208.7,100.1 207.2,99.2 205.7,98.1 204.1,96.7 202.6,95.2 201.2,93.4 199.7,90.7 199.1,89.1 198.6,86.1 198.9,83.1 199.7,80.7 200.8,78.6 201.9,77.0 203.2,75.5 204.9,74.0 206.8,72.5 208.7,71.3 210.2,70.4 212.1,69.5 214.7,68.3 216.2,67.8 219.2,66.8 220.7,66.4 223.8,65.6 226.2,65.0 228.3,64.4 231.3,63.7 232.8,63.3 235.8,62.5 238.3,61.9 240.3,61.4 243.3,60.7 244.8,60.4 247.8,59.7 250.8,59.0 252.3,58.7 255.3,58.1 258.3,57.5 259.8,57.2 262.8,56.5 265.8,55.9 267.3,55.6 270.3,54.9 272.7,54.4 274.8,53.9 277.8,53.2 279.3,52.9 282.3,52.1 285.3,51.4 286.8,51.1 289.8,50.3 292.0,49.9 294.3,49.3 297.3,48.7 298.8,48.3 301.8,47.7 304.8,47.2 307.0,46.8 309.3,46.4 312.4,46.0 315.4,45.6 318.1,45.3Z"/>
<path fill="#0028ff" d="M314.7,46.8 316.9,46.5 319.9,46.2 322.9,46.0 325.9,45.8 328.9,45.6 331.9,45.5 334.9,45.5 337.9,45.6 340.9,45.7 343.9,46.0 346.9,46.3 349.9,46.8 351.4,47.1 354.4,47.8 356.6,48.3 358.9,49.0 361.4,49.9 363.4,50.6 365.3,51.4 367.9,52.5 369.4,53.2 371.5,54.4 373.9,55.8 375.4,56.8 376.9,57.8 378.4,58.9 380.2,60.4 381.9,61.9 383.4,63.4 384.8,65.0 386.1,66.5 387.4,68.3 388.9,70.7 389.9,72.5 390.6,74.0 391.7,77.0 392.2,78.6 392.8,81.6 393.1,84.6 393.0,87.6 392.6,90.6 391.9,93.5 391.4,95.2 390.4,97.5 389.4,99.7 388.5,101.2 387.4,102.9 385.9,104.9 384.4,106.7 382.9,108.3 381.4,109.7 379.9,111.0 378.4,112.3 376.9,113.4 374.9,114.8 372.4,116.3 370.9,117.2 369.4,118.0 366.5,119.3 364.9,120.0 362.8,120.8 360.4,121.7 358.3,122.4 355.9,123.1 352.9,123.8 351.4,124.1 348.4,124.6 345.4,125.1 342.4,125.3 340.9,125.5 337.9,125.6 334.9,125.7 331.9,125.7 328.9,125.6 325.9,125.4 324.4,125.4 321.4,125.1 318.4,124.8 315.4,124.5 312.4,124.1 310.8,123.8 307.8,123.4 304.8,122.9 302.2,122.4 300.3,122.0 297.3,121.3 295.2,120.8 292.8,120.3 289.8,119.6 288.3,119.2 285.3,118.5 282.7,117.8 280.8,117.4 277.8,116.6 276.3,116.3 273.3,115.5 270.3,114.8 268.8,114.5 265.8,113.8 263.2,113.3 261.3,112.9 258.3,112.3 255.9,111.8 253.8,111.3 250.8,110.7 248.7,110.3 246.3,109.8 243.3,109.1 241.8,108.8 238.8,108.1 235.8,107.4 234.3,107.1 231.3,106.5 228.3,105.8 226.8,105.5 223.8,104.8 221.7,104.2 219.2,103.6 216.5,102.7 214.7,102.1 212.8,101.2 210.2,99.9 208.7,99.0 207.2,98.0 205.6,96.7 204.0,95.2 202.7,93.6 201.2,91.1 200.4,89.1 199.9,86.1 200.2,83.1 201.2,80.2 202.2,78.6 203.3,77.0 204.7,75.5 206.4,74.0 208.5,72.5 210.2,71.5 211.7,70.7 214.4,69.5 216.2,68.7 218.6,68.0 220.7,67.3 223.8,66.6 225.3,66.3 228.3,65.5 231.0,65.0 232.8,64.6 235.8,63.9 237.9,63.4 240.3,62.9 243.3,62.2 244.8,61.9 247.8,61.2 250.8,60.6 252.3,60.3 255.3,59.7 258.3,59.0 259.8,58.7 262.8,58.1 265.8,57.4 267.3,57.1 270.3,56.4 272.6,55.9 274.8,55.4 277.8,54.6 279.3,54.3 282.3,53.5 284.9,52.9 286.8,52.4 289.8,51.7 291.3,51.3 294.3,50.6 297.3,49.9 298.8,49.6 301.8,48.9 304.8,48.4 306.3,48.1 309.3,47.6 312.4,47.1 314.7,46.8Z"/>
<path fill="#0033ff" d="M325.2,46.8 327.4,46.7 330.4,46.6 333.4,46.5 336.4,46.6 339.4,46.7 341.9,46.8 343.9,47.0 346.9,47.4 349.9,47.8 352.4,48.3 354.4,48.8 357.4,49.6 358.9,50.0 361.9,51.0 363.4,51.6 366.4,52.9 367.9,53.6 369.5,54.4 372.2,55.9 373.9,56.9 375.4,57.9 376.9,59.0 378.8,60.4 380.5,61.9 382.1,63.4 383.6,65.0 384.9,66.5 386.0,68.0 387.4,70.1 388.8,72.5 389.6,74.0 390.4,76.2 391.2,78.6 391.8,81.6 392.0,83.1 392.1,86.1 391.9,88.6 391.6,90.6 390.9,93.7 390.4,95.2 389.1,98.2 388.3,99.7 387.4,101.2 385.9,103.3 384.4,105.2 382.9,106.9 381.4,108.4 379.9,109.8 378.4,111.1 376.9,112.2 375.4,113.3 373.1,114.8 370.9,116.1 369.4,116.9 367.5,117.8 364.9,119.0 363.4,119.6 360.4,120.7 358.9,121.2 355.9,122.0 354.4,122.4 351.4,123.1 348.4,123.6 346.6,123.9 343.9,124.2 340.9,124.5 337.9,124.6 334.9,124.7 331.9,124.7 328.9,124.6 325.9,124.4 322.9,124.2 319.9,123.9 318.4,123.8 315.4,123.4 312.4,123.0 309.3,122.5 307.8,122.3 304.8,121.7 301.8,121.1 300.3,120.8 297.3,120.1 294.3,119.4 292.8,119.1 289.8,118.3 287.9,117.8 285.3,117.2 282.3,116.4 280.8,116.0 277.8,115.2 276.2,114.8 273.3,114.1 270.3,113.4 268.8,113.0 265.8,112.3 263.3,111.8 261.3,111.4 258.3,110.7 256.1,110.3 253.8,109.8 250.8,109.2 248.8,108.8 246.3,108.2 243.3,107.6 241.4,107.3 238.8,106.7 235.8,106.2 233.5,105.7 231.3,105.4 228.3,104.8 225.7,104.2 223.8,103.8 220.7,103.1 219.2,102.7 216.2,101.8 214.7,101.2 211.7,99.8 210.2,98.9 208.7,98.0 207.0,96.7 205.3,95.2 204.0,93.7 202.7,91.8 201.5,89.1 201.2,87.6 201.1,84.6 201.3,83.1 202.5,80.1 203.4,78.6 204.6,77.0 206.1,75.5 207.9,74.0 210.2,72.5 211.7,71.6 213.2,70.9 216.2,69.6 217.7,69.1 220.7,68.3 222.2,67.9 225.3,67.2 228.3,66.6 229.8,66.3 232.8,65.7 235.8,65.2 237.3,64.9 240.3,64.3 243.3,63.7 244.8,63.4 247.8,62.8 250.8,62.2 252.3,61.8 255.3,61.2 258.3,60.6 259.8,60.3 262.8,59.6 265.8,59.0 267.3,58.6 270.3,57.9 272.4,57.4 274.8,56.8 277.8,56.0 279.3,55.7 282.3,54.9 284.2,54.4 286.8,53.7 289.8,52.9 291.3,52.5 294.3,51.8 296.2,51.4 298.8,50.7 301.8,50.1 303.3,49.8 306.3,49.2 309.3,48.7 311.6,48.3 313.9,48.0 316.9,47.6 319.9,47.3 322.9,47.0 325.2,46.8Z"/>
<path fill="#003dff" d="M319.3,48.3 321.4,48.1 324.4,47.9 327.4,47.7 330.4,47.6 333.4,47.5 336.4,47.5 339.4,47.6 342.4,47.8 345.4,48.1 346.9,48.3 349.9,48.8 352.9,49.4 354.7,49.9 357.4,50.6 359.9,51.4 361.9,52.0 364.0,52.9 366.4,53.9 367.9,54.6 370.4,55.9 372.4,57.1 373.9,58.0 375.4,59.0 377.3,60.4 379.2,61.9 380.8,63.4 382.3,65.0 383.7,66.5 384.9,68.0 386.0,69.5 387.4,71.8 388.6,74.0 389.2,75.5 390.2,78.6 390.6,80.1 391.1,83.1 391.2,86.1 391.0,89.1 390.4,91.8 389.9,93.7 388.9,96.3 388.1,98.2 387.2,99.7 385.9,101.8 384.4,103.8 382.9,105.6 381.4,107.2 379.9,108.6 378.4,109.9 376.9,111.1 375.4,112.2 373.8,113.3 371.3,114.8 369.4,115.8 367.9,116.6 365.2,117.8 363.4,118.6 361.4,119.3 358.9,120.2 356.6,120.8 354.4,121.4 351.4,122.1 349.9,122.4 346.9,122.9 343.9,123.2 340.9,123.5 337.9,123.6 334.9,123.7 331.9,123.7 328.9,123.6 325.9,123.4 322.9,123.2 319.9,122.9 316.9,122.6 315.2,122.4 312.4,122.0 309.3,121.5 306.3,120.9 304.8,120.6 301.8,120.0 298.9,119.3 297.3,119.0 294.3,118.2 292.8,117.8 289.8,117.1 287.0,116.3 285.3,115.9 282.3,115.1 280.8,114.6 277.8,113.8 275.7,113.3 273.3,112.7 270.3,111.9 268.8,111.6 265.8,110.8 263.3,110.3 261.3,109.8 258.3,109.2 256.3,108.8 253.8,108.2 250.8,107.6 248.9,107.3 246.3,106.7 243.3,106.2 240.7,105.7 238.8,105.4 235.8,105.0 232.8,104.5 230.8,104.2 228.3,103.8 225.3,103.3 222.7,102.7 220.7,102.3 217.7,101.4 216.2,100.9 213.4,99.7 211.7,98.9 210.2,98.0 208.3,96.7 206.5,95.2 205.1,93.7 204.0,92.1 202.7,89.5 202.2,87.6 202.1,84.6 202.7,81.9 203.5,80.1 204.5,78.6 205.8,77.0 207.3,75.5 209.3,74.0 211.7,72.5 213.2,71.7 214.9,71.0 217.7,69.9 219.3,69.5 222.2,68.7 225.3,68.1 226.8,67.8 229.8,67.3 232.8,66.8 235.2,66.5 237.3,66.2 240.3,65.7 243.3,65.2 244.8,64.9 247.8,64.3 250.8,63.7 252.3,63.4 255.3,62.8 258.3,62.1 259.8,61.8 262.8,61.1 265.8,60.4 267.3,60.1 270.3,59.4 272.1,58.9 274.8,58.2 277.8,57.4 279.3,57.0 282.3,56.2 283.8,55.8 286.8,55.0 289.0,54.4 291.3,53.8 294.3,53.0 295.8,52.6 298.8,51.9 301.2,51.4 303.3,50.9 306.3,50.3 308.8,49.9 310.8,49.5 313.9,49.0 316.9,48.6 319.3,48.3Z"/>
<path fill="#0047ff" d="M315.1,49.9 316.9,49.6 319.9,49.2 322.9,48.9 325.9,48.7 328.9,48.6 331.9,48.5 334.9,48.5 337.9,48.5 340.9,48.7 343.9,48.9 346.9,49.3 349.9,49.8 351.4,50.1 354.4,50.7 356.8,51.4 358.9,52.0 361.5,52.9 363.4,53.6 365.3,54.4 367.9,55.6 369.4,56.4 371.3,57.4 373.7,58.9 375.4,60.1 376.9,61.2 378.4,62.5 379.9,63.8 381.4,65.3 382.9,67.0 384.4,68.8 385.9,71.0 386.8,72.5 387.6,74.0 388.8,77.0 389.3,78.6 390.0,81.6 390.3,84.6 390.2,87.6 389.8,90.6 389.0,93.7 388.4,95.2 387.4,97.4 386.2,99.7 385.2,101.2 384.2,102.7 382.9,104.2 381.4,105.9 379.9,107.4 378.4,108.8 376.5,110.3 374.4,111.8 372.4,113.1 370.9,114.0 369.4,114.8 366.4,116.3 364.9,117.0 362.8,117.8 360.4,118.7 358.5,119.3 355.9,120.1 352.9,120.8 351.4,121.2 348.4,121.7 345.4,122.1 343.1,122.4 340.9,122.5 337.9,122.7 334.9,122.8 331.9,122.7 328.9,122.7 325.9,122.5 324.1,122.4 321.4,122.1 318.4,121.8 315.4,121.4 312.4,120.9 310.8,120.7 307.8,120.2 304.8,119.6 303.3,119.3 300.3,118.6 297.3,117.8 295.8,117.5 292.8,116.7 291.3,116.3 288.3,115.4 286.1,114.8 283.8,114.2 280.8,113.3 279.3,112.9 276.3,112.1 274.8,111.7 271.8,110.9 269.5,110.3 267.3,109.7 264.3,109.0 262.8,108.6 259.8,108.0 256.8,107.3 255.3,107.0 252.3,106.4 249.3,105.8 247.8,105.5 244.8,105.0 241.8,104.6 239.0,104.2 237.3,104.0 234.3,103.7 231.3,103.4 228.3,103.0 226.8,102.7 223.8,102.2 220.7,101.6 219.2,101.1 216.2,100.2 214.7,99.6 212.0,98.2 210.2,97.1 208.7,96.1 207.2,94.7 205.7,93.1 204.2,90.8 203.5,89.1 202.9,86.1 203.3,83.1 204.2,80.6 205.5,78.6 206.8,77.0 208.5,75.5 210.2,74.2 211.7,73.3 213.3,72.5 216.2,71.2 217.7,70.7 220.7,69.8 222.4,69.5 225.3,68.9 228.3,68.4 231.3,68.0 232.8,67.8 235.8,67.5 238.8,67.1 241.8,66.8 243.8,66.5 246.3,66.1 249.3,65.5 252.2,65.0 253.8,64.6 256.8,64.0 259.3,63.4 261.3,63.0 264.3,62.3 265.8,61.9 268.8,61.2 271.8,60.4 273.3,60.0 276.3,59.2 277.8,58.8 280.8,57.9 282.7,57.4 285.3,56.7 288.0,55.9 289.8,55.4 292.8,54.6 294.3,54.2 297.3,53.4 299.4,52.9 301.8,52.3 304.8,51.7 306.3,51.4 309.3,50.8 312.4,50.3 315.1,49.9Z"/>
<path fill="#0051ff" d="M323.2,49.9 325.9,49.6 328.9,49.5 331.9,49.4 334.9,49.4 337.9,49.4 340.9,49.6 343.9,49.8 345.4,50.0 348.4,50.4 351.4,51.0 353.2,51.4 355.9,52.0 358.7,52.9 360.4,53.4 363.0,54.4 364.9,55.2 366.5,55.9 369.4,57.4 370.9,58.2 372.4,59.1 374.4,60.4 376.4,61.9 378.3,63.4 379.9,65.0 381.4,66.5 382.7,68.0 383.8,69.5 384.9,71.0 385.9,72.8 387.3,75.5 387.9,77.0 388.8,80.1 389.1,81.6 389.4,84.6 389.3,87.6 388.9,90.3 388.5,92.1 387.5,95.2 386.8,96.7 385.9,98.4 384.4,100.9 383.1,102.7 381.8,104.2 380.4,105.7 378.8,107.3 377.1,108.8 375.4,110.0 373.9,111.1 372.4,112.1 370.4,113.3 367.9,114.6 366.4,115.4 364.2,116.3 361.9,117.2 360.3,117.8 357.4,118.7 355.2,119.3 352.9,119.9 349.9,120.5 347.9,120.8 345.4,121.2 342.4,121.5 339.4,121.7 336.4,121.8 333.4,121.8 330.4,121.8 327.4,121.7 324.4,121.5 321.4,121.2 318.5,120.8 316.9,120.6 313.9,120.2 310.8,119.7 308.9,119.3 306.3,118.8 303.3,118.2 301.7,117.8 298.8,117.1 295.8,116.3 294.3,115.9 291.3,115.1 289.8,114.7 286.8,113.8 285.2,113.3 282.3,112.4 280.1,111.8 277.8,111.1 274.9,110.3 273.3,109.8 270.3,109.0 268.8,108.6 265.8,107.8 263.4,107.3 261.3,106.8 258.3,106.1 256.8,105.7 253.8,105.1 250.8,104.5 249.0,104.2 246.3,103.8 243.3,103.4 240.3,103.2 237.3,102.9 234.4,102.7 232.8,102.6 229.8,102.3 226.8,102.0 223.8,101.5 222.2,101.2 219.2,100.5 217.0,99.7 214.7,98.8 213.2,98.1 210.8,96.7 208.8,95.2 207.2,93.7 206.0,92.1 205.0,90.6 204.2,88.6 203.8,86.1 204.1,83.1 204.6,81.6 205.7,79.6 207.2,77.7 208.7,76.2 210.2,75.1 211.9,74.0 214.7,72.6 216.2,71.9 219.1,71.0 220.7,70.5 223.8,69.9 226.4,69.5 228.3,69.2 231.3,68.9 234.3,68.6 237.3,68.4 240.3,68.2 242.6,68.0 244.8,67.7 247.8,67.3 250.8,66.8 252.4,66.5 255.3,65.9 258.3,65.2 259.8,64.9 262.8,64.2 265.8,63.4 267.3,63.1 270.3,62.3 271.8,61.9 274.8,61.0 276.8,60.4 279.3,59.7 281.9,58.9 283.8,58.4 286.8,57.5 288.3,57.0 291.3,56.2 292.8,55.7 295.8,54.9 297.8,54.4 300.3,53.7 303.3,53.0 304.8,52.7 307.8,52.1 310.8,51.5 312.4,51.3 315.4,50.8 318.4,50.4 321.4,50.0 323.2,49.9Z"/>
<path fill="#005bff" d="M317.9,51.4 319.9,51.1 322.9,50.8 325.9,50.5 328.9,50.4 331.9,50.3 334.9,50.2 337.9,50.3 340.9,50.5 343.9,50.7 346.9,51.1 348.6,51.4 351.4,51.9 354.4,52.5 355.9,52.9 358.9,53.8 360.5,54.4 363.4,55.5 364.9,56.1 367.7,57.4 369.4,58.3 370.9,59.2 372.9,60.4 375.1,61.9 376.9,63.4 378.4,64.7 379.9,66.2 381.4,67.8 382.8,69.5 383.9,71.0 384.8,72.5 385.9,74.6 387.0,77.0 387.5,78.6 388.2,81.6 388.5,84.6 388.4,87.6 388.0,90.6 387.4,92.8 386.6,95.2 385.9,96.7 384.4,99.3 383.2,101.2 382.0,102.7 380.7,104.2 379.2,105.7 377.6,107.3 375.7,108.8 373.9,110.1 372.4,111.1 370.9,112.0 368.6,113.3 366.4,114.4 364.9,115.1 361.9,116.3 360.4,116.9 357.4,117.8 355.9,118.3 352.9,119.0 351.4,119.3 348.4,119.9 345.4,120.3 342.4,120.6 339.4,120.8 337.9,120.9 334.9,121.0 331.9,120.9 329.1,120.8 327.4,120.8 324.4,120.6 321.4,120.3 318.4,119.9 315.4,119.5 313.9,119.3 310.8,118.7 307.8,118.1 306.3,117.8 303.3,117.2 300.3,116.4 298.8,116.0 295.8,115.2 294.3,114.8 291.3,113.9 289.2,113.3 286.8,112.6 284.3,111.8 282.3,111.2 279.5,110.3 277.8,109.8 274.8,108.9 273.3,108.4 270.3,107.5 268.8,107.1 265.8,106.3 263.6,105.7 261.3,105.2 258.3,104.5 256.8,104.1 253.8,103.5 250.8,103.0 249.1,102.7 246.3,102.4 243.3,102.1 240.3,102.0 237.3,101.9 234.3,101.8 231.3,101.7 228.3,101.4 226.6,101.2 223.8,100.8 220.7,100.2 219.0,99.7 216.2,98.8 214.7,98.1 212.0,96.7 210.2,95.5 208.7,94.3 207.2,92.7 205.9,90.6 205.1,89.1 204.5,86.1 204.9,83.1 205.7,81.0 207.2,78.7 208.7,77.1 210.2,75.9 211.7,74.8 213.2,74.0 216.2,72.6 217.7,72.0 220.7,71.2 222.2,70.9 225.3,70.3 228.3,70.0 231.3,69.7 234.3,69.6 237.1,69.5 238.8,69.4 241.8,69.3 244.8,69.1 247.8,68.8 250.8,68.4 252.8,68.0 255.3,67.5 258.3,66.8 259.9,66.5 262.8,65.8 265.8,65.0 267.3,64.6 270.3,63.7 271.8,63.3 274.8,62.4 276.4,61.9 279.3,61.0 281.2,60.4 283.8,59.6 286.1,58.9 288.3,58.2 291.0,57.4 292.8,56.9 295.8,56.0 297.3,55.6 300.3,54.8 302.0,54.4 304.8,53.7 307.8,53.1 309.3,52.8 312.4,52.2 315.4,51.7 317.9,51.4Z"/>
<path fill="#0066ff" d="M326.6,51.4 328.9,51.2 331.9,51.1 334.9,51.1 337.9,51.2 340.9,51.3 342.4,51.4 345.4,51.7 348.4,52.2 351.4,52.7 352.9,53.1 355.9,53.8 357.9,54.4 360.4,55.2 362.2,55.9 364.9,57.0 366.4,57.7 368.8,58.9 370.9,60.1 372.4,61.1 373.9,62.1 375.7,63.4 377.5,65.0 379.1,66.5 380.5,68.0 381.8,69.5 382.9,71.1 384.4,73.5 385.5,75.5 386.1,77.0 387.0,80.1 387.4,82.3 387.7,84.6 387.6,87.6 387.4,89.1 386.8,92.1 385.9,94.5 385.0,96.7 384.2,98.2 382.9,100.1 381.4,102.1 379.9,103.8 378.4,105.4 376.9,106.7 375.4,108.0 373.9,109.1 372.2,110.3 369.7,111.8 367.9,112.8 366.4,113.5 363.5,114.8 361.9,115.4 359.4,116.3 357.4,117.0 354.4,117.8 352.9,118.1 349.9,118.8 346.9,119.2 345.4,119.5 342.4,119.8 339.4,120.0 336.4,120.1 333.4,120.1 330.4,120.0 327.4,119.9 324.4,119.7 321.4,119.4 319.9,119.2 316.9,118.8 313.9,118.3 311.1,117.8 309.3,117.5 306.3,116.9 304.0,116.3 301.8,115.8 298.8,115.0 297.3,114.6 294.3,113.7 292.8,113.2 289.8,112.3 288.2,111.8 285.3,110.9 283.5,110.3 280.8,109.4 278.9,108.8 276.3,107.9 274.2,107.3 271.8,106.5 269.3,105.7 267.3,105.2 264.3,104.3 262.8,103.9 259.8,103.2 257.8,102.7 255.3,102.2 252.3,101.6 249.3,101.2 247.8,101.1 244.8,100.9 241.8,100.9 238.8,100.9 235.8,100.9 232.8,100.9 229.8,100.8 226.8,100.6 223.8,100.2 221.4,99.7 219.2,99.2 216.3,98.2 214.7,97.5 213.1,96.7 210.8,95.2 209.0,93.7 207.6,92.1 206.6,90.6 205.7,88.5 205.2,86.1 205.6,83.1 206.2,81.6 207.2,79.8 208.7,78.0 210.2,76.6 211.8,75.5 214.4,74.0 216.2,73.2 218.3,72.5 220.7,71.8 223.8,71.2 225.4,71.0 228.3,70.7 231.3,70.5 234.3,70.4 237.3,70.5 240.3,70.5 243.3,70.5 246.3,70.4 249.3,70.1 252.3,69.7 253.8,69.4 256.8,68.8 259.8,68.1 261.3,67.8 264.3,67.0 266.1,66.5 268.8,65.7 271.2,65.0 273.3,64.3 276.0,63.4 277.8,62.9 280.6,61.9 282.3,61.4 285.2,60.4 286.8,59.9 289.8,58.9 291.3,58.5 294.3,57.5 295.8,57.1 298.8,56.2 300.3,55.8 303.3,55.1 306.3,54.4 307.8,54.0 310.8,53.4 313.9,52.9 315.4,52.6 318.4,52.2 321.4,51.8 324.4,51.5 326.6,51.4Z"/>
<path fill="#0070ff" d="M319.9,52.9 322.9,52.5 325.9,52.3 328.9,52.1 331.9,52.0 334.9,51.9 337.9,52.0 340.9,52.2 343.9,52.4 346.9,52.8 348.4,53.0 351.4,53.6 354.4,54.3 355.9,54.7 358.9,55.6 360.4,56.1 363.4,57.2 364.9,57.9 367.1,58.9 369.4,60.2 370.9,61.1 372.4,62.0 374.4,63.4 376.3,65.0 377.9,66.5 379.4,68.0 380.7,69.5 381.9,71.0 382.9,72.6 384.4,75.3 385.2,77.0 385.9,79.3 386.5,81.6 386.8,84.6 386.7,87.6 386.3,90.6 385.9,92.1 384.8,95.2 384.1,96.7 382.9,98.6 381.4,100.8 379.9,102.7 378.4,104.2 376.9,105.7 375.4,107.0 373.9,108.1 372.4,109.2 370.7,110.3 368.0,111.8 366.4,112.6 364.9,113.3 361.9,114.6 360.4,115.1 357.4,116.1 355.9,116.5 352.9,117.3 350.3,117.8 348.4,118.2 345.4,118.6 342.4,118.9 339.4,119.1 336.4,119.2 333.4,119.3 330.4,119.2 327.4,119.0 324.4,118.8 321.4,118.5 318.4,118.1 316.3,117.8 313.9,117.4 310.8,116.9 308.3,116.3 306.3,115.9 303.3,115.2 301.8,114.8 298.8,113.9 296.6,113.3 294.3,112.6 291.8,111.8 289.8,111.1 287.2,110.3 285.3,109.6 282.8,108.8 280.8,108.1 278.5,107.3 276.3,106.5 274.0,105.7 271.8,105.0 269.4,104.2 267.3,103.6 264.4,102.7 262.8,102.3 259.8,101.5 258.3,101.1 255.3,100.4 252.3,99.9 250.1,99.7 247.8,99.6 244.8,99.6 241.8,99.7 240.3,99.8 237.3,100.0 234.3,100.1 231.3,100.2 228.3,100.1 225.3,99.8 223.8,99.6 220.7,99.0 217.9,98.2 216.2,97.6 214.3,96.7 211.7,95.2 210.2,94.0 208.7,92.5 207.3,90.6 206.6,89.1 205.9,86.1 206.3,83.1 207.2,81.0 208.7,78.9 210.2,77.4 211.7,76.2 213.2,75.3 215.8,74.0 217.7,73.2 220.3,72.5 222.2,72.1 225.3,71.6 228.3,71.3 231.3,71.2 234.3,71.3 237.3,71.4 240.3,71.6 243.3,71.7 246.3,71.8 249.3,71.7 252.3,71.4 254.6,71.0 256.8,70.6 259.8,69.8 261.3,69.4 264.3,68.6 266.4,68.0 268.8,67.2 271.2,66.5 273.3,65.8 275.7,65.0 277.8,64.2 280.1,63.4 282.3,62.7 284.4,61.9 286.8,61.1 288.8,60.4 291.3,59.6 293.5,58.9 295.8,58.2 298.4,57.4 300.3,56.9 303.3,56.0 304.8,55.7 307.8,55.0 310.8,54.4 312.4,54.1 315.4,53.5 318.4,53.1 319.9,52.9Z"/>
<path fill="#007aff" d="M329.7,52.9 331.9,52.8 334.9,52.8 337.9,52.8 339.4,52.9 342.4,53.1 345.4,53.4 348.4,53.9 351.2,54.4 352.9,54.7 355.9,55.5 357.4,55.9 360.4,56.9 361.9,57.5 364.9,58.8 366.4,59.5 368.3,60.4 370.8,61.9 372.4,63.0 373.9,64.1 375.4,65.3 376.9,66.6 378.4,68.1 379.9,69.8 381.4,71.8 382.9,74.0 383.7,75.5 384.4,77.4 385.3,80.1 385.9,83.1 386.0,84.6 385.9,87.3 385.7,89.1 385.0,92.1 384.4,93.9 383.1,96.7 382.3,98.2 381.3,99.7 379.9,101.4 378.4,103.1 376.9,104.6 375.4,105.9 373.8,107.3 371.6,108.8 369.4,110.1 367.9,111.0 366.3,111.8 363.4,113.1 361.9,113.7 358.9,114.8 357.4,115.3 354.4,116.1 352.9,116.5 349.9,117.1 346.9,117.6 344.9,117.8 342.4,118.1 339.4,118.3 336.4,118.4 333.4,118.4 330.4,118.4 327.4,118.2 324.4,118.0 322.9,117.8 319.9,117.5 316.9,117.0 313.9,116.5 312.4,116.2 309.3,115.6 306.3,114.9 304.8,114.6 301.8,113.8 300.2,113.3 297.3,112.5 295.2,111.8 292.8,111.0 290.7,110.3 288.3,109.4 286.4,108.8 283.8,107.8 282.3,107.3 279.3,106.2 277.8,105.6 274.8,104.5 273.3,104.0 270.3,102.9 268.8,102.4 265.8,101.4 264.3,100.9 261.3,100.0 259.8,99.6 256.8,98.9 253.8,98.4 252.3,98.2 249.3,98.0 246.3,98.1 244.8,98.2 241.8,98.6 238.8,98.9 235.8,99.2 232.8,99.4 229.8,99.5 226.8,99.4 223.8,99.0 220.7,98.5 219.2,98.1 216.2,97.1 214.7,96.4 212.6,95.2 210.6,93.7 209.1,92.1 208.0,90.6 207.2,89.1 206.5,86.1 206.9,83.1 207.5,81.6 208.7,79.7 210.2,78.1 211.7,76.8 213.8,75.5 216.2,74.3 217.7,73.8 220.7,72.9 223.0,72.5 225.3,72.2 228.3,71.9 231.3,71.9 234.3,72.0 237.3,72.3 239.3,72.5 241.8,72.8 244.8,73.1 247.8,73.3 250.8,73.3 253.8,73.0 256.3,72.5 258.3,72.1 261.3,71.3 262.8,70.8 265.8,69.9 267.3,69.4 270.3,68.4 271.8,67.8 274.8,66.8 276.3,66.2 279.3,65.1 280.8,64.5 283.8,63.4 285.3,62.9 287.9,61.9 289.8,61.3 292.3,60.4 294.3,59.7 296.9,58.9 298.8,58.3 301.8,57.4 303.3,57.0 306.3,56.3 308.0,55.9 310.8,55.3 313.9,54.7 315.6,54.4 318.4,53.9 321.4,53.5 324.4,53.2 327.4,53.0 329.7,52.9Z"/>
<path fill="#0084ff" d="M321.4,54.4 324.4,54.1 327.4,53.8 330.4,53.7 333.4,53.6 336.4,53.6 339.4,53.7 342.4,53.9 345.4,54.2 346.9,54.4 349.9,54.9 352.9,55.6 354.4,55.9 357.4,56.8 359.4,57.4 361.9,58.3 363.4,58.9 366.4,60.3 367.9,61.1 369.4,62.0 371.7,63.4 373.8,65.0 375.4,66.3 376.9,67.7 378.4,69.2 379.9,71.0 381.0,72.5 381.9,74.0 382.9,75.9 384.0,78.6 384.5,80.1 385.0,83.1 385.2,86.1 384.9,89.1 384.4,91.2 383.6,93.7 382.9,95.3 381.4,98.0 380.3,99.7 379.1,101.2 377.7,102.7 376.2,104.2 374.4,105.7 372.5,107.3 370.9,108.3 369.4,109.2 367.6,110.3 364.9,111.6 363.4,112.3 360.8,113.3 358.9,114.0 356.1,114.8 354.4,115.3 351.4,116.0 349.6,116.3 346.9,116.8 343.9,117.1 340.9,117.4 337.9,117.6 334.9,117.6 331.9,117.6 328.9,117.5 325.9,117.3 322.9,117.0 319.9,116.6 317.8,116.3 315.4,115.9 312.4,115.4 309.8,114.8 307.8,114.4 304.8,113.6 303.3,113.2 300.3,112.3 298.5,111.8 295.8,110.9 294.0,110.3 291.3,109.3 289.7,108.8 286.8,107.7 285.3,107.1 282.3,105.9 280.8,105.3 278.0,104.2 276.3,103.6 274.1,102.7 271.8,101.8 270.2,101.2 267.3,100.1 265.8,99.6 262.8,98.6 261.3,98.1 258.3,97.2 255.7,96.7 253.8,96.4 250.8,96.2 247.8,96.5 246.2,96.7 243.3,97.2 240.3,97.7 237.5,98.2 235.8,98.4 232.8,98.8 229.8,98.9 226.8,98.8 223.8,98.5 222.0,98.2 219.2,97.6 216.7,96.7 214.7,95.8 213.2,95.0 211.4,93.7 209.8,92.1 208.6,90.6 207.3,87.6 207.1,86.1 207.2,84.3 208.1,81.6 209.1,80.1 210.5,78.6 212.3,77.0 214.7,75.6 216.2,74.8 218.6,74.0 220.7,73.4 223.8,72.9 226.8,72.6 229.8,72.5 232.8,72.6 235.8,72.9 238.8,73.4 241.8,73.9 243.3,74.2 246.3,74.7 249.3,75.0 252.3,75.1 255.3,74.7 258.3,74.1 259.8,73.7 262.8,72.7 264.3,72.2 267.3,71.2 268.8,70.6 271.7,69.5 273.3,68.9 275.6,68.0 277.8,67.1 279.4,66.5 282.3,65.3 283.8,64.7 286.8,63.6 288.3,63.0 291.2,61.9 292.8,61.3 295.5,60.4 297.3,59.8 300.2,58.9 301.8,58.4 304.8,57.6 306.3,57.2 309.3,56.5 312.2,55.9 313.9,55.6 316.9,55.0 319.9,54.6 321.4,54.4Z"/>
<path fill="#008eff" d="M333.2,54.4 334.9,54.4 336.4,54.4 339.4,54.5 342.4,54.7 345.4,55.0 348.4,55.5 350.6,55.9 352.9,56.4 355.9,57.1 357.4,57.6 360.4,58.6 361.9,59.2 364.9,60.4 366.4,61.2 367.9,62.0 370.4,63.4 372.4,64.9 373.9,66.0 375.4,67.3 376.9,68.7 378.4,70.4 379.9,72.3 381.0,74.0 381.9,75.5 382.9,77.9 383.6,80.1 384.2,83.1 384.4,86.1 384.1,89.1 383.3,92.1 382.8,93.7 381.4,96.5 380.4,98.2 379.3,99.7 378.1,101.2 376.7,102.7 375.0,104.2 373.2,105.7 371.1,107.3 369.4,108.3 367.9,109.2 365.9,110.3 363.4,111.4 361.9,112.1 358.9,113.1 357.4,113.6 354.4,114.5 352.9,114.8 349.9,115.5 346.9,116.0 344.1,116.3 342.4,116.5 339.4,116.7 336.4,116.8 333.4,116.8 330.4,116.8 327.4,116.6 324.4,116.3 322.9,116.2 319.9,115.8 316.9,115.3 314.0,114.8 312.4,114.5 309.3,113.8 307.3,113.3 304.8,112.7 301.8,111.8 300.3,111.3 297.3,110.4 295.8,109.8 292.8,108.8 291.3,108.2 288.9,107.3 286.8,106.4 285.1,105.7 282.3,104.6 280.8,103.9 277.9,102.7 276.3,102.0 274.4,101.2 271.8,100.1 270.3,99.4 267.3,98.2 265.8,97.6 263.4,96.7 261.3,95.9 259.0,95.2 256.8,94.6 253.8,94.2 250.8,94.3 247.8,94.8 246.3,95.2 243.3,96.0 240.5,96.7 238.8,97.1 235.8,97.7 232.8,98.1 231.3,98.2 228.3,98.3 225.8,98.2 223.8,98.0 220.7,97.5 217.9,96.7 216.2,96.1 214.5,95.2 212.1,93.7 210.4,92.1 209.2,90.6 208.4,89.1 207.6,86.1 208.0,83.1 208.7,81.6 210.2,79.5 211.7,78.0 213.2,77.0 215.9,75.5 217.7,74.7 220.3,74.0 222.2,73.6 225.3,73.2 228.3,73.1 231.3,73.2 234.3,73.5 237.3,74.0 238.8,74.3 241.8,75.0 243.8,75.5 246.3,76.2 249.3,76.9 250.8,77.1 253.8,77.2 255.3,77.0 258.3,76.4 261.0,75.5 262.8,74.9 265.0,74.0 267.3,73.1 268.8,72.5 271.8,71.2 273.3,70.5 275.7,69.5 277.8,68.6 279.3,67.9 282.3,66.7 283.8,66.0 286.4,65.0 288.3,64.2 290.2,63.4 292.8,62.5 294.3,61.9 297.3,60.9 298.8,60.4 301.8,59.4 303.5,58.9 306.3,58.2 309.3,57.4 310.8,57.1 313.9,56.4 316.8,55.9 318.4,55.6 321.4,55.2 324.4,54.9 327.4,54.6 330.4,54.5 333.2,54.4Z"/>
<path fill="#0099ff" d="M322.4,55.9 324.4,55.7 327.4,55.4 330.4,55.2 333.4,55.2 336.4,55.2 339.4,55.3 342.4,55.5 345.4,55.8 346.9,56.0 349.9,56.5 352.9,57.2 354.4,57.5 357.4,58.4 359.1,58.9 361.9,60.0 363.4,60.6 366.2,61.9 367.9,62.8 369.4,63.7 371.3,65.0 373.3,66.5 375.0,68.0 376.6,69.5 377.9,71.0 379.1,72.5 380.1,74.0 381.4,76.4 382.3,78.6 382.9,80.6 383.4,83.1 383.6,86.1 383.3,89.1 382.9,90.7 381.9,93.7 381.2,95.2 379.9,97.5 378.4,99.6 377.0,101.2 375.6,102.7 373.9,104.2 372.4,105.4 370.9,106.5 369.4,107.5 367.2,108.8 364.9,109.9 363.4,110.6 360.5,111.8 358.9,112.3 355.9,113.3 354.4,113.7 351.4,114.4 349.1,114.8 346.9,115.2 343.9,115.6 340.9,115.8 337.9,116.0 334.9,116.0 331.9,116.0 328.9,115.9 325.9,115.7 322.9,115.4 319.9,115.0 318.4,114.7 315.4,114.2 312.4,113.6 310.8,113.3 307.8,112.5 305.1,111.8 303.3,111.3 300.3,110.3 298.8,109.8 295.8,108.8 294.3,108.2 291.9,107.3 289.8,106.4 288.2,105.7 285.3,104.5 283.8,103.8 281.3,102.7 279.3,101.8 277.8,101.1 274.9,99.7 273.3,98.9 271.8,98.2 268.8,96.7 267.3,96.0 265.5,95.2 262.8,93.9 261.3,93.2 258.6,92.1 256.8,91.6 253.8,91.4 250.8,91.9 249.3,92.4 246.3,93.6 244.8,94.1 242.1,95.2 240.3,95.8 237.3,96.6 235.8,97.0 232.8,97.5 229.8,97.8 226.8,97.8 223.8,97.6 220.7,97.1 219.2,96.7 216.2,95.6 214.7,94.9 212.8,93.7 211.1,92.1 209.8,90.6 208.7,88.6 208.1,86.1 208.6,83.1 209.2,81.6 210.3,80.1 211.8,78.6 213.9,77.0 216.2,75.8 217.7,75.2 220.7,74.3 222.6,74.0 225.3,73.7 228.3,73.6 231.3,73.7 233.4,74.0 235.8,74.4 238.8,75.2 240.3,75.6 243.3,76.7 244.8,77.2 247.8,78.4 249.3,79.0 252.3,79.8 255.3,79.9 258.3,79.3 260.2,78.6 262.8,77.5 264.3,76.7 266.7,75.5 268.8,74.6 270.3,73.8 272.9,72.5 274.8,71.6 276.3,70.9 279.3,69.5 280.8,68.8 282.5,68.0 285.3,66.7 286.8,66.1 289.4,65.0 291.3,64.2 293.2,63.4 295.8,62.5 297.3,61.9 300.3,60.9 301.8,60.4 304.8,59.5 307.0,58.9 309.3,58.3 312.4,57.6 313.9,57.3 316.9,56.7 319.9,56.2 322.4,55.9Z"/>
<path fill="#00a3ff" d="M317.7,57.4 319.9,57.0 322.9,56.6 325.9,56.3 328.9,56.1 331.9,56.0 334.9,55.9 337.9,56.0 340.9,56.2 343.9,56.4 346.9,56.8 349.9,57.3 351.4,57.6 354.4,58.3 356.6,58.9 358.9,59.7 361.0,60.4 363.4,61.4 364.9,62.1 367.5,63.4 369.4,64.6 370.9,65.6 372.4,66.7 373.9,68.0 375.5,69.5 376.9,71.0 378.4,72.9 379.9,75.2 380.9,77.0 381.5,78.6 382.3,81.6 382.7,84.6 382.7,87.6 382.1,90.6 381.4,92.7 380.4,95.2 379.5,96.7 378.4,98.3 376.9,100.2 375.4,101.8 373.9,103.2 372.4,104.5 370.7,105.7 368.3,107.3 366.4,108.3 364.9,109.1 362.3,110.3 360.4,111.0 358.2,111.8 355.9,112.5 352.9,113.3 351.4,113.6 348.4,114.2 345.4,114.6 343.6,114.8 340.9,115.0 337.9,115.2 334.9,115.3 331.9,115.2 328.9,115.1 325.9,114.9 324.4,114.7 321.4,114.4 318.4,113.9 315.4,113.4 313.9,113.1 310.8,112.4 308.4,111.8 306.3,111.2 303.3,110.3 301.8,109.8 298.8,108.8 297.3,108.3 294.7,107.3 292.8,106.5 291.0,105.7 288.3,104.5 286.8,103.9 284.4,102.7 282.3,101.7 280.8,100.9 278.4,99.7 276.3,98.6 274.8,97.8 272.8,96.7 270.3,95.2 268.8,94.3 267.3,93.3 265.5,92.1 263.3,90.6 261.4,89.1 259.9,87.6 258.9,86.1 259.8,83.9 261.3,82.4 262.8,81.1 264.3,80.0 266.3,78.6 268.7,77.0 270.3,76.1 271.8,75.2 273.8,74.0 276.3,72.7 277.8,71.9 279.4,71.0 282.3,69.5 283.8,68.8 285.5,68.0 288.3,66.7 289.8,66.0 292.3,65.0 294.3,64.1 296.1,63.4 298.8,62.4 300.3,61.9 303.3,60.9 304.9,60.4 307.8,59.6 310.5,58.9 312.4,58.5 315.4,57.8 317.7,57.4ZM218.1,75.5 220.7,74.7 223.8,74.3 226.8,74.1 229.8,74.2 232.8,74.5 235.8,75.1 237.3,75.5 240.3,76.6 241.8,77.2 244.5,78.6 246.3,79.6 247.8,80.6 249.3,81.7 251.0,83.1 252.3,85.1 252.3,86.4 250.8,88.3 249.3,89.6 247.8,90.8 245.7,92.1 243.3,93.4 241.8,94.1 239.3,95.2 237.3,95.8 234.3,96.6 232.8,96.9 229.8,97.3 226.8,97.3 223.8,97.1 221.1,96.7 219.2,96.3 216.3,95.2 214.7,94.4 213.2,93.4 211.7,92.1 210.2,90.5 208.8,87.6 208.6,86.1 208.7,84.4 209.8,81.6 210.9,80.1 212.4,78.6 214.7,77.0 216.2,76.2 218.1,75.5Z"/>
<path fill="#00adff" d="M323.1,57.4 325.9,57.1 328.9,56.9 331.9,56.7 334.9,56.7 337.9,56.8 340.9,56.9 343.9,57.2 345.6,57.4 348.4,57.8 351.4,58.4 353.7,58.9 355.9,59.5 358.9,60.4 360.4,61.0 362.8,61.9 364.9,62.9 366.4,63.7 368.6,65.0 370.8,66.5 372.4,67.7 373.9,69.0 375.4,70.5 376.9,72.2 378.3,74.0 379.2,75.5 380.0,77.0 381.1,80.1 381.5,81.6 381.9,84.6 381.8,87.6 381.4,90.0 380.8,92.1 379.9,94.3 378.6,96.7 377.6,98.2 376.4,99.7 375.0,101.2 373.4,102.7 371.5,104.2 369.4,105.7 367.9,106.7 366.4,107.5 363.9,108.8 361.9,109.6 360.3,110.3 357.4,111.3 355.6,111.8 352.9,112.5 349.9,113.1 348.4,113.4 345.4,113.8 342.4,114.2 339.4,114.4 336.4,114.5 333.4,114.5 330.4,114.4 327.4,114.2 324.4,114.0 321.4,113.6 319.5,113.3 316.9,112.8 313.9,112.2 311.9,111.8 309.3,111.1 306.3,110.3 304.8,109.8 301.8,108.9 300.3,108.3 297.5,107.3 295.8,106.6 293.8,105.7 291.3,104.7 289.8,104.0 287.2,102.7 285.3,101.7 283.8,101.0 281.5,99.7 279.3,98.4 277.8,97.5 276.3,96.6 274.1,95.2 272.0,93.7 270.3,92.3 268.8,90.9 267.3,89.2 266.3,87.6 266.0,84.6 267.3,82.1 268.8,80.4 270.3,79.0 271.8,77.8 273.3,76.7 274.9,75.5 277.3,74.0 279.3,72.8 280.8,71.9 282.5,71.0 285.3,69.5 286.8,68.7 288.3,68.0 291.3,66.6 292.8,65.9 295.0,65.0 297.3,64.0 298.8,63.4 301.8,62.4 303.3,61.8 306.3,60.9 308.1,60.4 310.8,59.7 313.9,59.0 315.4,58.7 318.4,58.1 321.4,57.6 323.1,57.4ZM219.3,75.5 222.2,74.8 225.3,74.5 228.3,74.5 231.3,74.8 234.3,75.4 235.8,75.8 238.8,76.9 240.3,77.6 242.1,78.6 244.3,80.1 246.0,81.6 247.2,83.1 247.8,84.6 247.8,86.6 246.6,89.1 245.1,90.6 243.3,92.1 241.8,93.0 240.3,93.8 237.3,95.1 235.8,95.6 232.8,96.3 230.3,96.7 228.3,96.9 225.3,96.8 223.6,96.7 220.7,96.3 217.7,95.4 216.2,94.8 214.2,93.7 212.2,92.1 210.8,90.6 209.9,89.1 209.0,86.1 209.5,83.1 210.3,81.6 211.7,79.7 213.2,78.4 215.5,77.0 217.7,76.0 219.3,75.5Z"/>
<path fill="#00b7ff" d="M318.3,58.9 319.9,58.6 322.9,58.2 325.9,57.9 328.9,57.6 331.9,57.5 334.9,57.4 337.9,57.5 340.9,57.7 343.9,58.0 346.9,58.3 349.9,58.8 351.4,59.1 354.4,59.9 356.4,60.4 358.9,61.2 360.8,61.9 363.4,63.0 364.9,63.7 367.2,65.0 369.4,66.4 370.9,67.4 372.4,68.6 373.9,70.0 375.4,71.6 376.9,73.4 378.3,75.5 379.1,77.0 379.9,78.9 380.7,81.6 381.1,84.6 381.0,87.6 380.5,90.6 379.9,92.3 378.6,95.2 377.7,96.7 376.6,98.2 375.4,99.7 373.9,101.2 372.2,102.7 370.3,104.2 368.0,105.7 366.4,106.7 364.9,107.5 362.1,108.8 360.4,109.4 358.0,110.3 355.9,110.9 352.9,111.7 351.4,112.1 348.4,112.6 345.4,113.1 343.4,113.3 340.9,113.5 337.9,113.7 334.9,113.8 331.9,113.7 328.9,113.6 325.9,113.3 324.4,113.2 321.4,112.8 318.4,112.3 315.7,111.8 313.9,111.4 310.8,110.7 309.3,110.2 306.3,109.4 304.4,108.8 301.8,107.9 300.2,107.3 297.3,106.1 295.8,105.5 293.0,104.2 291.3,103.4 289.8,102.7 287.0,101.2 285.3,100.3 283.8,99.4 281.8,98.2 279.5,96.7 277.8,95.4 276.3,94.3 274.8,93.0 273.3,91.5 271.8,89.7 270.7,87.6 270.5,84.6 271.8,81.6 273.0,80.1 274.5,78.6 276.2,77.0 277.8,75.8 279.3,74.8 280.8,73.7 282.7,72.5 285.3,71.0 286.8,70.1 288.3,69.3 291.0,68.0 292.8,67.1 294.3,66.4 297.3,65.1 298.8,64.5 301.6,63.4 303.3,62.8 306.0,61.9 307.8,61.4 310.8,60.6 312.4,60.2 315.4,59.5 318.3,58.9ZM220.8,75.5 223.8,75.0 226.8,74.9 229.8,75.1 232.3,75.5 234.3,76.0 237.3,77.0 238.8,77.7 240.3,78.6 242.4,80.1 243.9,81.6 244.9,83.1 245.6,86.1 244.8,88.5 243.3,90.5 241.8,91.8 240.3,92.8 238.7,93.7 235.8,94.9 234.3,95.4 231.3,96.1 228.3,96.4 225.3,96.5 222.2,96.2 219.2,95.5 217.7,95.0 214.9,93.7 213.2,92.5 211.7,91.1 210.3,89.1 209.7,87.6 209.5,84.6 210.2,82.5 211.7,80.3 213.2,78.9 214.7,77.8 216.3,77.0 219.2,75.9 220.8,75.5Z"/>
<path fill="#00c1ff" d="M323.5,58.9 325.9,58.6 328.9,58.4 331.9,58.2 334.9,58.2 337.9,58.3 340.9,58.4 343.9,58.7 345.5,58.9 348.4,59.3 351.4,59.9 353.6,60.4 355.9,61.0 358.7,61.9 360.4,62.5 362.6,63.4 364.9,64.6 366.4,65.4 368.2,66.5 370.4,68.0 372.3,69.5 373.9,71.0 375.2,72.5 376.4,74.0 377.4,75.5 378.4,77.4 379.5,80.1 379.9,81.8 380.3,84.6 380.2,87.6 379.9,89.4 379.1,92.1 378.4,93.8 376.9,96.4 375.6,98.2 374.3,99.7 372.8,101.2 371.1,102.7 369.4,103.9 367.9,104.9 366.4,105.8 363.7,107.3 361.9,108.1 360.1,108.8 357.4,109.7 355.5,110.3 352.9,111.0 349.9,111.6 348.4,111.9 345.4,112.3 342.4,112.6 339.4,112.9 336.4,113.0 333.4,113.0 330.4,112.9 327.4,112.7 324.4,112.4 321.4,112.0 319.9,111.8 316.9,111.2 313.9,110.5 312.4,110.2 309.3,109.4 307.3,108.8 304.8,108.0 302.8,107.3 300.3,106.3 298.8,105.7 295.8,104.4 294.3,103.6 292.4,102.7 289.8,101.3 288.3,100.5 286.8,99.6 284.6,98.2 282.4,96.7 280.8,95.5 279.3,94.2 277.8,92.8 276.3,91.1 274.9,89.1 274.3,87.6 274.1,84.6 274.8,82.5 276.3,80.1 277.7,78.6 279.3,77.0 280.8,75.8 282.3,74.6 283.8,73.6 285.4,72.5 287.9,71.0 289.8,69.9 291.3,69.1 293.5,68.0 295.8,66.9 297.3,66.2 300.3,65.0 301.8,64.3 304.3,63.4 306.3,62.8 309.0,61.9 310.8,61.4 313.9,60.7 315.4,60.3 318.4,59.7 321.4,59.2 323.5,58.9ZM222.9,75.5 225.3,75.3 228.3,75.4 229.8,75.5 232.8,76.1 235.6,77.0 237.3,77.8 238.8,78.6 240.8,80.1 242.3,81.6 243.3,83.1 244.0,86.1 243.3,88.2 241.8,90.4 240.3,91.7 238.8,92.8 237.2,93.7 234.3,94.8 232.8,95.3 229.8,95.9 226.8,96.1 223.8,96.0 220.7,95.6 219.2,95.1 216.2,94.0 214.7,93.2 213.2,92.1 211.7,90.6 210.2,87.9 209.8,86.1 210.2,83.6 211.2,81.6 212.4,80.1 214.3,78.6 216.2,77.4 217.7,76.7 220.7,75.8 222.9,75.5Z"/>
<path fill="#00ccff" d="M318.8,60.4 321.4,60.0 324.4,59.6 327.4,59.3 330.4,59.0 333.4,59.0 336.4,59.0 339.4,59.1 342.4,59.3 345.4,59.6 348.4,60.1 350.2,60.4 352.9,61.0 355.9,61.8 357.4,62.3 360.4,63.3 361.9,63.9 364.1,65.0 366.4,66.2 367.9,67.1 369.4,68.2 371.1,69.5 372.8,71.0 374.2,72.5 375.5,74.0 376.9,76.3 378.1,78.6 378.6,80.1 379.3,83.1 379.5,86.1 379.2,89.1 378.4,91.7 377.6,93.7 376.8,95.2 375.4,97.2 373.9,99.0 372.4,100.6 370.9,101.9 369.4,103.0 367.7,104.2 365.1,105.7 363.4,106.6 361.9,107.3 358.9,108.4 357.4,108.9 354.4,109.8 352.6,110.3 349.9,110.8 346.9,111.4 343.9,111.7 342.4,111.9 339.4,112.1 336.4,112.2 333.4,112.3 330.4,112.2 327.4,112.0 325.7,111.8 322.9,111.4 319.9,111.0 316.9,110.4 315.4,110.1 312.4,109.3 310.3,108.8 307.8,108.0 305.6,107.3 303.3,106.5 301.5,105.7 298.8,104.6 297.3,103.9 294.9,102.7 292.8,101.6 291.3,100.8 289.5,99.7 287.1,98.2 285.3,96.9 283.8,95.7 282.3,94.4 280.8,93.0 279.3,91.2 278.0,89.1 277.4,87.6 277.2,84.6 277.8,82.7 279.3,80.1 280.5,78.6 282.0,77.0 283.8,75.5 285.3,74.3 286.8,73.3 288.3,72.3 290.3,71.0 292.8,69.6 294.3,68.8 295.9,68.0 298.8,66.6 300.3,66.0 302.8,65.0 304.8,64.2 307.1,63.4 309.3,62.7 312.2,61.9 313.9,61.5 316.9,60.8 318.8,60.4ZM217.9,77.0 220.7,76.2 223.8,75.7 226.8,75.7 229.8,75.9 232.8,76.6 234.3,77.1 237.3,78.5 238.8,79.5 240.3,80.8 241.8,82.8 242.5,84.6 242.3,87.6 241.5,89.1 240.3,90.6 238.5,92.1 235.8,93.7 234.3,94.3 231.3,95.2 229.8,95.5 226.8,95.8 223.8,95.7 220.7,95.2 219.2,94.8 216.3,93.7 214.7,92.8 213.2,91.6 211.7,90.0 210.5,87.6 210.2,86.1 210.3,84.6 211.6,81.6 212.9,80.1 214.7,78.6 216.2,77.7 217.9,77.0Z"/>
<path fill="#00d6ff" d="M323.7,60.4 325.9,60.2 328.9,59.9 331.9,59.7 334.9,59.7 337.9,59.7 340.9,59.9 343.9,60.2 345.6,60.4 348.4,60.8 351.4,61.4 353.6,61.9 355.9,62.5 358.7,63.4 360.4,64.1 362.4,65.0 364.9,66.2 366.4,67.0 367.9,68.0 370.0,69.5 371.7,71.0 373.2,72.5 374.5,74.0 375.6,75.5 376.9,77.9 377.8,80.1 378.4,82.6 378.7,84.6 378.6,87.6 378.3,89.1 377.4,92.1 376.7,93.7 375.4,95.9 373.9,97.9 372.4,99.5 370.9,100.9 369.4,102.1 367.9,103.2 366.3,104.2 363.5,105.7 361.9,106.5 360.0,107.3 357.4,108.2 355.5,108.8 352.9,109.4 349.9,110.1 348.4,110.4 345.4,110.8 342.4,111.1 339.4,111.4 336.4,111.5 333.4,111.5 330.4,111.4 327.4,111.2 324.4,110.9 321.4,110.4 319.9,110.2 316.9,109.6 313.9,108.9 312.4,108.5 309.3,107.6 307.8,107.1 304.8,106.0 303.3,105.5 300.4,104.2 298.8,103.5 297.3,102.7 294.4,101.2 292.8,100.3 291.3,99.4 289.5,98.2 287.4,96.7 285.6,95.2 284.0,93.7 282.7,92.1 281.6,90.6 280.8,89.1 280.0,86.1 280.4,83.1 281.0,81.6 282.3,79.6 283.8,77.8 285.3,76.4 286.8,75.1 288.3,73.9 290.3,72.5 292.7,71.0 294.3,70.1 295.8,69.2 298.3,68.0 300.3,67.0 301.8,66.4 304.8,65.2 306.3,64.6 309.3,63.6 310.8,63.2 313.9,62.3 315.5,61.9 318.4,61.3 321.4,60.8 323.7,60.4ZM218.8,77.0 220.7,76.5 223.8,76.0 226.8,76.0 229.8,76.3 232.6,77.0 234.3,77.6 236.2,78.6 238.4,80.1 239.9,81.6 240.9,83.1 241.5,86.1 240.4,89.1 239.2,90.6 237.3,92.1 235.8,93.1 234.3,93.8 231.3,94.8 228.9,95.2 226.8,95.4 223.8,95.3 222.2,95.2 219.2,94.5 217.0,93.7 214.7,92.4 213.2,91.2 211.7,89.4 210.9,87.6 210.7,84.6 211.7,82.0 213.2,80.2 214.7,79.0 216.2,78.1 218.8,77.0Z"/>
<path fill="#00e0ff" d="M334.4,60.4 335.2,60.4 337.9,60.5 340.9,60.7 343.9,61.0 346.9,61.3 349.9,61.9 351.4,62.2 354.4,62.9 356.3,63.4 358.9,64.3 360.6,65.0 363.4,66.2 364.9,67.0 366.5,68.0 368.7,69.5 370.6,71.0 372.2,72.5 373.5,74.0 374.6,75.5 375.6,77.0 376.9,80.0 377.4,81.6 377.9,84.6 377.8,87.6 377.1,90.6 376.6,92.1 375.4,94.4 373.9,96.7 372.7,98.2 371.2,99.7 369.4,101.2 367.9,102.3 366.4,103.3 364.8,104.2 361.9,105.7 360.4,106.3 357.9,107.3 355.9,107.9 352.9,108.7 351.4,109.0 348.4,109.6 345.4,110.1 343.6,110.3 340.9,110.5 337.9,110.7 334.9,110.8 331.9,110.7 328.9,110.6 325.9,110.3 324.4,110.1 321.4,109.7 318.4,109.1 316.8,108.8 313.9,108.0 311.2,107.3 309.3,106.7 306.6,105.7 304.8,105.1 302.8,104.2 300.3,103.1 298.8,102.3 296.7,101.2 294.3,99.8 292.8,98.9 291.3,97.8 289.8,96.7 288.0,95.2 286.4,93.7 285.1,92.1 283.8,90.2 282.8,87.6 282.6,84.6 283.5,81.6 284.4,80.1 285.6,78.6 286.9,77.0 288.6,75.5 290.5,74.0 292.6,72.5 294.3,71.4 295.8,70.5 297.6,69.5 300.3,68.1 301.8,67.4 304.1,66.5 306.3,65.6 308.1,65.0 310.8,64.1 312.9,63.4 315.4,62.8 318.4,62.1 319.9,61.8 322.9,61.3 325.9,60.9 328.9,60.6 331.9,60.5 334.4,60.4ZM219.8,77.0 222.2,76.5 225.3,76.3 228.3,76.4 231.2,77.0 232.8,77.5 235.1,78.6 237.3,79.9 238.8,81.4 239.9,83.1 240.4,84.6 240.3,87.3 239.5,89.1 238.2,90.6 236.3,92.1 234.3,93.3 232.8,93.9 229.8,94.7 226.8,95.1 223.8,95.0 220.7,94.6 217.7,93.7 216.2,93.0 214.7,92.0 213.1,90.6 211.7,88.7 210.9,86.1 211.5,83.1 212.4,81.6 213.8,80.1 216.0,78.6 217.7,77.7 219.8,77.0Z"/>
<path fill="#00eaff" d="M323.9,61.9 325.9,61.7 328.9,61.4 331.9,61.2 334.9,61.2 337.9,61.2 340.9,61.4 343.9,61.7 345.8,61.9 348.4,62.3 351.4,62.9 353.7,63.4 355.9,64.1 358.6,65.0 360.4,65.7 362.2,66.5 364.9,67.8 366.4,68.8 367.9,69.8 369.5,71.0 371.1,72.5 372.5,74.0 373.9,75.9 375.4,78.5 376.1,80.1 376.9,83.1 377.0,84.6 376.9,87.6 376.7,89.1 375.7,92.1 374.9,93.7 373.9,95.3 372.4,97.3 370.9,98.9 369.4,100.2 367.9,101.4 366.0,102.7 363.4,104.2 361.9,104.9 359.9,105.7 357.4,106.7 355.5,107.3 352.9,107.9 349.9,108.6 348.4,108.9 345.4,109.3 342.4,109.7 339.4,109.9 336.4,110.0 333.4,110.0 330.4,109.9 327.4,109.7 324.4,109.3 321.4,108.9 319.9,108.6 316.9,107.9 314.1,107.3 312.4,106.7 309.3,105.8 307.8,105.2 305.3,104.2 303.3,103.4 301.8,102.7 298.9,101.2 297.3,100.3 295.8,99.4 294.0,98.2 292.0,96.7 290.2,95.2 288.7,93.7 287.4,92.1 286.4,90.6 285.3,88.2 284.9,86.1 285.3,83.1 285.9,81.6 286.8,79.9 288.3,78.0 289.8,76.4 291.3,75.1 292.8,73.9 294.8,72.5 297.2,71.0 298.8,70.1 300.3,69.3 303.0,68.0 304.8,67.2 306.6,66.5 309.3,65.4 310.8,64.9 313.9,64.0 316.1,63.4 318.4,62.9 321.4,62.3 323.9,61.9ZM221.0,77.0 223.8,76.6 226.8,76.6 229.6,77.0 231.3,77.4 234.1,78.6 235.8,79.5 237.3,80.7 238.8,82.6 239.6,84.6 239.4,87.6 238.6,89.1 237.3,90.7 235.4,92.1 232.8,93.4 231.3,94.0 228.3,94.6 225.3,94.8 222.2,94.6 219.2,93.9 217.7,93.4 215.4,92.1 213.5,90.6 212.3,89.1 211.6,87.6 211.3,84.6 211.9,83.1 213.2,81.1 214.7,79.7 216.6,78.6 219.2,77.4 221.0,77.0Z"/>
<path fill="#00f4ff" d="M332.5,61.9 334.9,61.9 337.0,61.9 339.4,62.0 342.4,62.3 345.4,62.6 348.4,63.1 350.4,63.4 352.9,64.0 355.9,64.8 357.4,65.3 360.4,66.4 361.9,67.1 363.6,68.0 366.2,69.5 367.9,70.7 369.4,72.0 370.9,73.4 372.4,75.2 373.7,77.0 374.5,78.6 375.4,80.8 376.0,83.1 376.2,86.1 375.8,89.1 375.4,90.6 374.0,93.7 373.1,95.2 371.9,96.7 370.5,98.2 368.9,99.7 366.9,101.2 364.9,102.5 363.4,103.3 361.6,104.2 358.9,105.4 357.4,105.9 354.4,106.8 352.7,107.3 349.9,107.8 346.9,108.4 343.9,108.8 342.4,108.9 339.4,109.2 336.4,109.3 333.4,109.3 330.4,109.2 327.4,108.9 325.8,108.8 322.9,108.3 319.9,107.8 317.4,107.3 315.4,106.7 312.4,105.9 310.8,105.4 307.8,104.3 306.3,103.7 304.2,102.7 301.8,101.6 300.3,100.8 298.5,99.7 296.1,98.2 294.3,96.9 292.8,95.6 291.3,94.2 289.8,92.5 288.6,90.6 287.8,89.1 287.1,86.1 287.5,83.1 288.3,81.1 289.8,78.8 291.3,77.0 292.8,75.6 294.3,74.4 295.8,73.3 297.3,72.2 299.3,71.0 301.8,69.6 303.3,68.9 305.3,68.0 307.8,66.9 309.3,66.4 312.4,65.4 313.9,64.9 316.9,64.1 319.7,63.4 321.4,63.1 324.4,62.6 327.4,62.3 330.4,62.0 332.5,61.9ZM222.7,77.0 225.3,76.9 227.6,77.0 229.8,77.4 232.8,78.4 234.3,79.1 235.8,80.1 237.3,81.6 238.8,84.3 239.0,86.1 238.7,87.6 237.3,89.9 235.8,91.3 234.3,92.3 231.3,93.6 229.8,94.0 226.8,94.5 223.8,94.5 220.7,94.1 219.2,93.6 216.2,92.4 214.7,91.4 213.2,89.9 211.9,87.6 211.5,86.1 211.7,84.5 213.2,81.6 214.7,80.1 216.2,79.0 217.7,78.3 220.7,77.3 222.7,77.0Z"/>
<path fill="#00fffe" d="M324.1,63.4 325.9,63.2 328.9,62.9 331.9,62.7 334.9,62.6 337.9,62.7 340.9,62.9 343.9,63.2 345.9,63.4 348.4,63.8 351.4,64.4 353.7,65.0 355.9,65.6 358.5,66.5 360.4,67.2 362.0,68.0 364.8,69.5 366.4,70.6 367.9,71.7 369.4,73.0 370.9,74.6 372.4,76.5 373.6,78.6 374.3,80.1 375.1,83.1 375.3,86.1 374.9,89.1 373.9,92.0 373.1,93.7 372.1,95.2 370.9,96.7 369.4,98.2 367.7,99.7 365.6,101.2 363.4,102.5 361.9,103.3 359.8,104.2 357.4,105.1 355.5,105.7 352.9,106.4 349.9,107.1 348.4,107.4 345.4,107.8 342.4,108.2 339.4,108.4 336.4,108.5 333.4,108.6 330.4,108.4 327.4,108.2 324.4,107.8 321.4,107.3 319.9,107.0 316.9,106.3 314.8,105.7 312.4,105.0 310.2,104.2 307.8,103.3 306.3,102.7 303.3,101.2 301.8,100.4 300.3,99.5 298.2,98.2 296.2,96.7 294.4,95.2 292.9,93.7 291.6,92.1 290.7,90.6 289.8,88.8 289.2,86.1 289.6,83.1 290.1,81.6 291.3,79.6 292.8,77.7 294.3,76.1 295.8,74.8 297.3,73.7 299.0,72.5 301.5,71.0 303.3,70.0 304.8,69.3 307.7,68.0 309.3,67.3 311.7,66.5 313.9,65.8 316.7,65.0 318.4,64.5 321.4,63.9 324.1,63.4ZM217.8,78.6 220.7,77.6 223.8,77.2 226.8,77.2 229.8,77.7 232.3,78.6 234.3,79.6 235.8,80.7 237.3,82.4 238.3,84.6 238.0,87.6 237.2,89.1 235.8,90.7 233.7,92.1 231.3,93.2 229.8,93.7 226.8,94.2 223.8,94.2 220.7,93.8 219.2,93.4 216.4,92.1 214.7,91.0 213.2,89.4 212.2,87.6 212.0,84.6 213.2,82.0 214.7,80.4 216.2,79.3 217.8,78.6Z"/>
<path fill="#0afff4" d="M331.9,63.4 333.4,63.4 336.4,63.4 337.9,63.5 340.9,63.7 343.9,63.9 346.9,64.3 349.9,64.9 351.4,65.2 354.4,65.9 356.3,66.5 358.9,67.4 360.4,68.0 363.3,69.5 364.9,70.5 366.4,71.5 367.9,72.7 369.4,74.1 370.9,75.8 372.4,78.1 373.4,80.1 373.9,81.6 374.4,84.6 374.3,87.6 373.9,89.5 372.9,92.1 372.1,93.7 370.9,95.4 369.4,97.1 367.9,98.5 366.4,99.7 364.2,101.2 361.9,102.5 360.4,103.2 357.7,104.2 355.9,104.9 352.9,105.7 351.4,106.0 348.4,106.6 345.4,107.1 343.9,107.3 340.9,107.6 337.9,107.8 334.9,107.8 331.9,107.8 328.9,107.6 326.0,107.3 324.4,107.0 321.4,106.5 318.4,105.8 316.9,105.5 313.9,104.6 312.4,104.1 309.3,102.9 307.8,102.3 305.5,101.2 303.3,100.1 301.8,99.2 300.3,98.2 298.2,96.7 296.4,95.2 294.9,93.7 293.6,92.1 292.7,90.6 291.5,87.6 291.2,86.1 291.3,84.4 292.2,81.6 293.0,80.1 294.3,78.2 295.8,76.6 297.3,75.2 298.9,74.0 301.1,72.5 303.3,71.2 304.8,70.4 306.6,69.5 309.3,68.3 310.8,67.7 313.9,66.6 315.4,66.2 318.4,65.4 320.1,65.0 322.9,64.4 325.9,64.0 328.9,63.6 331.9,63.4ZM218.5,78.6 220.7,77.8 223.8,77.4 226.8,77.5 229.8,78.0 231.4,78.6 234.3,80.0 235.8,81.3 237.1,83.1 237.7,84.6 237.4,87.6 236.6,89.1 235.2,90.6 232.9,92.1 231.3,92.9 228.4,93.7 226.8,93.9 223.8,94.0 221.4,93.7 219.2,93.2 216.9,92.1 214.7,90.7 213.4,89.1 212.5,87.6 212.3,84.6 213.2,82.5 214.7,80.7 216.2,79.6 218.5,78.6Z"/>
<path fill="#14ffea" d="M324.4,65.0 327.4,64.6 330.4,64.3 333.4,64.1 336.4,64.2 339.4,64.3 342.4,64.5 345.4,64.9 346.9,65.1 349.9,65.6 352.9,66.3 354.4,66.7 357.4,67.6 358.9,68.2 361.7,69.5 363.4,70.4 364.9,71.4 366.5,72.5 368.2,74.0 369.6,75.5 370.9,77.3 372.4,80.0 373.0,81.6 373.5,84.6 373.4,87.6 372.6,90.6 372.0,92.1 370.9,93.9 369.4,95.9 367.9,97.4 366.4,98.7 364.9,99.8 362.7,101.2 360.4,102.3 358.9,103.0 355.9,104.1 354.4,104.5 351.4,105.3 349.1,105.7 346.9,106.1 343.9,106.5 340.9,106.8 337.9,107.0 334.9,107.1 331.9,107.0 328.9,106.8 325.9,106.5 322.9,106.0 321.4,105.7 318.4,105.0 315.6,104.2 313.9,103.7 311.3,102.7 309.3,101.9 307.8,101.2 304.8,99.7 303.3,98.8 301.8,97.9 300.2,96.7 298.4,95.2 296.8,93.7 295.6,92.1 294.3,90.1 293.4,87.6 293.2,84.6 294.1,81.6 294.9,80.1 296.0,78.6 297.3,77.0 299.0,75.5 300.9,74.0 303.1,72.5 304.8,71.5 306.3,70.7 308.9,69.5 310.8,68.7 312.6,68.0 315.4,67.1 317.4,66.5 319.9,65.8 322.9,65.2 324.4,65.0ZM219.1,78.6 220.7,78.1 223.8,77.6 226.8,77.7 229.8,78.3 231.3,78.8 233.6,80.1 235.5,81.6 236.6,83.1 237.2,86.1 236.0,89.1 234.6,90.6 232.8,91.9 231.3,92.6 228.3,93.4 226.5,93.7 223.8,93.7 222.2,93.6 219.2,92.9 217.4,92.1 215.1,90.6 213.7,89.1 212.8,87.6 212.5,84.6 213.2,83.0 214.7,81.1 216.2,79.9 219.1,78.6Z"/>
<path fill="#1effe0" d="M331.9,65.0 333.4,64.9 336.4,64.9 337.9,65.0 340.9,65.2 343.9,65.5 346.9,65.9 349.9,66.4 351.4,66.7 354.4,67.5 356.1,68.0 358.9,69.0 360.4,69.7 362.9,71.0 364.9,72.3 366.4,73.5 367.9,74.9 369.4,76.6 370.7,78.6 371.5,80.1 372.4,83.1 372.6,84.6 372.5,87.6 372.2,89.1 371.0,92.1 370.1,93.7 368.9,95.2 367.5,96.7 365.8,98.2 363.7,99.7 361.9,100.7 360.4,101.5 357.5,102.7 355.9,103.3 352.9,104.2 351.4,104.5 348.4,105.1 345.4,105.5 343.8,105.7 340.9,106.0 337.9,106.2 334.9,106.3 331.9,106.2 328.9,106.0 326.3,105.7 324.4,105.4 321.4,104.9 318.7,104.2 316.9,103.7 313.9,102.7 312.4,102.2 310.0,101.2 307.8,100.2 306.3,99.4 304.3,98.2 302.2,96.7 300.3,95.2 298.8,93.7 297.5,92.1 296.5,90.6 295.8,89.1 295.1,86.1 295.4,83.1 296.0,81.6 297.3,79.3 298.8,77.5 300.3,76.0 301.8,74.8 303.3,73.7 305.2,72.5 307.8,71.0 309.3,70.3 311.2,69.5 313.9,68.5 315.4,67.9 318.4,67.1 320.7,66.5 322.9,66.0 325.9,65.5 328.9,65.2 331.9,65.0ZM219.9,78.6 222.2,78.0 225.3,77.8 228.3,78.2 229.8,78.6 232.8,79.9 234.3,81.0 235.8,82.7 236.6,84.6 236.4,87.6 235.5,89.1 234.0,90.6 231.5,92.1 229.8,92.8 226.8,93.4 223.8,93.5 220.7,93.1 218.0,92.1 216.2,91.2 214.7,90.0 213.2,87.8 212.6,86.1 213.2,83.6 214.6,81.6 216.2,80.2 217.7,79.3 219.9,78.6Z"/>
<path fill="#28ffd6" d="M324.9,66.5 327.4,66.1 330.4,65.8 333.4,65.7 336.4,65.7 339.4,65.8 342.4,66.1 345.4,66.4 346.9,66.6 349.9,67.2 352.9,67.8 354.4,68.2 357.4,69.2 358.9,69.8 361.3,71.0 363.4,72.3 364.9,73.3 366.4,74.6 367.9,76.2 369.4,78.1 370.5,80.1 371.1,81.6 371.7,84.6 371.6,87.6 370.9,90.0 370.0,92.1 369.0,93.7 367.8,95.2 366.3,96.7 364.5,98.2 362.2,99.7 360.4,100.7 358.9,101.4 355.9,102.5 354.4,103.0 351.4,103.7 348.9,104.2 346.9,104.6 343.9,105.0 340.9,105.3 337.9,105.5 334.9,105.6 331.9,105.5 328.9,105.3 325.9,104.9 322.9,104.4 321.4,104.0 318.4,103.3 316.5,102.7 313.9,101.8 312.4,101.2 309.3,99.8 307.8,99.0 306.3,98.2 304.1,96.7 302.2,95.2 300.6,93.7 299.3,92.1 298.3,90.6 297.3,88.3 296.9,86.1 297.3,83.1 297.8,81.6 298.8,79.8 300.3,77.9 301.8,76.4 303.3,75.1 304.9,74.0 307.3,72.5 309.3,71.4 310.8,70.7 313.7,69.5 315.4,68.9 318.2,68.0 319.9,67.5 322.9,66.8 324.9,66.5ZM220.7,78.6 222.2,78.2 225.3,78.1 228.3,78.5 229.8,78.9 232.4,80.1 234.3,81.5 235.5,83.1 236.2,84.6 235.9,87.6 235.0,89.1 233.4,90.6 231.3,91.9 229.8,92.5 226.8,93.2 223.8,93.3 220.7,92.9 218.5,92.1 216.2,90.9 214.7,89.6 213.4,87.6 212.9,86.1 213.2,84.3 214.7,81.8 216.2,80.5 217.7,79.6 220.7,78.6Z"/>
<path fill="#33ffcb" d="M332.7,66.5 334.9,66.4 337.2,66.5 339.4,66.6 342.4,66.9 345.4,67.2 348.4,67.7 350.1,68.0 352.9,68.6 355.8,69.5 357.4,70.1 359.5,71.0 361.9,72.3 363.4,73.3 364.9,74.4 366.4,75.8 367.9,77.6 369.4,80.0 370.1,81.6 370.7,84.6 370.6,87.6 369.7,90.6 368.9,92.1 367.9,93.7 366.4,95.4 364.9,96.8 363.1,98.2 360.5,99.7 358.9,100.5 357.2,101.2 354.4,102.2 352.3,102.7 349.9,103.3 346.9,103.8 343.9,104.2 342.4,104.3 339.4,104.6 336.4,104.8 333.4,104.8 330.4,104.6 327.4,104.3 325.9,104.1 322.9,103.5 319.9,102.8 318.4,102.4 315.4,101.4 313.9,100.8 311.3,99.7 309.3,98.7 307.8,97.8 306.1,96.7 304.1,95.2 302.5,93.7 301.2,92.1 300.2,90.6 298.9,87.6 298.7,86.1 298.8,84.2 299.6,81.6 300.5,80.1 301.8,78.3 303.3,76.8 304.8,75.5 306.9,74.0 309.3,72.5 310.8,71.8 312.4,71.0 315.4,69.8 316.9,69.3 319.9,68.4 321.5,68.0 324.4,67.4 327.4,66.9 330.4,66.6 332.7,66.5ZM221.8,78.6 223.8,78.3 226.8,78.5 228.3,78.7 231.3,79.8 232.8,80.7 234.3,82.0 235.7,84.6 235.8,86.1 235.4,87.6 234.3,89.4 232.8,90.7 230.0,92.1 228.3,92.7 225.3,93.1 222.2,93.0 219.2,92.2 217.7,91.6 216.2,90.6 214.6,89.1 213.2,86.3 213.2,85.5 214.1,83.1 215.3,81.6 217.3,80.1 219.2,79.2 221.8,78.6Z"/>
<path fill="#3dffc1" d="M325.7,68.0 327.4,67.7 330.4,67.4 333.4,67.2 336.4,67.2 339.4,67.4 342.4,67.7 345.2,68.0 346.9,68.2 349.9,68.7 352.9,69.4 354.4,69.9 357.4,70.9 358.9,71.6 360.7,72.5 363.0,74.0 364.9,75.5 366.3,77.0 367.5,78.6 368.4,80.1 369.4,82.9 369.7,84.6 369.6,87.6 369.2,89.1 367.9,92.0 366.8,93.7 365.4,95.2 363.7,96.7 361.9,98.0 360.4,98.8 358.7,99.7 355.9,100.8 354.4,101.3 351.4,102.1 348.5,102.7 346.9,103.0 343.9,103.4 340.9,103.7 337.9,103.9 334.9,104.0 331.9,103.9 328.9,103.7 325.9,103.3 323.0,102.7 321.4,102.3 318.4,101.5 316.9,101.0 313.9,99.8 312.4,99.1 310.6,98.2 308.1,96.7 306.3,95.4 304.8,94.1 303.3,92.5 302.0,90.6 301.2,89.1 300.5,86.1 300.9,83.1 301.8,80.9 303.3,78.7 304.8,77.1 306.3,75.8 307.8,74.7 309.3,73.8 311.6,72.5 313.9,71.4 315.4,70.8 318.4,69.7 319.9,69.3 322.9,68.5 325.7,68.0ZM223.7,78.6 223.8,78.5 225.3,78.5 225.3,78.6 226.8,78.7 228.3,79.0 229.8,79.4 231.2,80.1 231.3,80.1 232.8,81.0 233.4,81.6 234.3,82.6 234.7,83.1 235.3,84.6 235.5,86.1 235.0,87.6 234.3,88.8 234.1,89.1 232.8,90.3 232.4,90.6 231.3,91.3 229.8,92.0 229.2,92.1 228.3,92.4 226.8,92.7 225.3,92.9 223.8,92.9 222.2,92.8 220.7,92.5 219.8,92.1 219.2,92.0 217.7,91.3 216.6,90.6 216.2,90.4 214.9,89.1 214.7,88.8 214.0,87.6 213.4,86.1 213.6,84.6 214.3,83.1 214.7,82.6 215.6,81.6 216.2,81.0 217.7,80.1 217.8,80.1 219.2,79.4 220.7,78.9 222.2,78.7 223.7,78.6Z"/>
<path fill="#47ffb7" d="M322.5,69.5 324.4,69.1 327.4,68.6 330.4,68.2 333.4,68.0 336.4,68.0 339.4,68.2 342.4,68.5 345.4,68.8 348.4,69.3 349.9,69.5 352.9,70.3 355.3,71.0 357.4,71.8 358.9,72.5 361.5,74.0 363.4,75.4 364.9,76.9 366.3,78.6 367.2,80.1 367.9,81.6 368.6,84.6 368.5,87.6 367.9,89.6 366.7,92.1 365.5,93.7 364.1,95.2 362.2,96.7 360.4,97.9 358.9,98.7 356.6,99.7 354.4,100.5 351.9,101.2 349.9,101.6 346.9,102.2 343.9,102.6 342.4,102.7 339.4,103.0 336.4,103.2 333.4,103.2 330.4,103.0 327.9,102.7 325.9,102.4 322.9,101.8 320.5,101.2 318.4,100.5 316.1,99.7 313.9,98.7 312.4,97.9 310.2,96.7 308.0,95.2 306.3,93.7 304.9,92.1 303.8,90.6 303.0,89.1 302.3,86.1 302.6,83.1 303.3,81.4 304.8,79.1 306.3,77.5 307.8,76.2 309.3,75.1 311.0,74.0 313.8,72.5 315.4,71.8 317.4,71.0 319.9,70.2 322.5,69.5ZM218.2,80.1 219.2,79.6 220.7,79.1 222.2,78.9 223.8,78.7 225.3,78.7 226.8,78.9 228.3,79.2 229.8,79.7 230.6,80.1 231.3,80.4 232.8,81.4 232.9,81.6 234.2,83.1 234.3,83.2 234.9,84.6 235.1,86.1 234.6,87.6 234.3,88.2 233.6,89.1 232.8,90.0 231.9,90.6 231.3,91.0 229.8,91.7 228.4,92.1 228.3,92.2 226.8,92.5 225.3,92.7 223.8,92.7 222.2,92.5 220.7,92.2 220.4,92.1 219.2,91.8 217.7,91.1 217.0,90.6 216.2,90.1 215.2,89.1 214.7,88.4 214.2,87.6 213.6,86.1 213.8,84.6 214.6,83.1 214.7,82.9 215.9,81.6 216.2,81.3 217.7,80.3 218.2,80.1Z"/>
<path fill="#4cffb2" d="M324.4,69.5 327.4,69.0 330.4,68.6 333.4,68.4 336.4,68.4 339.4,68.6 342.4,68.9 345.4,69.2 347.2,69.5 349.9,70.0 352.9,70.7 354.4,71.1 357.4,72.3 358.9,73.0 360.7,74.0 362.8,75.5 364.4,77.0 365.7,78.6 366.7,80.1 367.8,83.1 368.1,84.6 367.9,87.6 367.5,89.1 366.4,91.5 364.9,93.6 363.4,95.2 361.9,96.4 360.4,97.4 358.9,98.2 355.9,99.5 354.4,100.1 351.4,100.9 349.9,101.2 346.9,101.8 343.9,102.1 340.9,102.5 337.9,102.7 336.4,102.8 333.4,102.8 331.9,102.7 328.9,102.4 325.9,102.0 322.9,101.4 321.4,101.0 318.4,100.0 316.9,99.5 313.9,98.2 312.4,97.3 310.8,96.4 309.0,95.2 307.2,93.7 305.8,92.1 304.7,90.6 303.4,87.6 303.1,86.1 303.3,83.9 304.1,81.6 305.0,80.1 306.3,78.4 307.8,77.0 309.7,75.5 312.1,74.0 313.9,73.1 315.4,72.4 318.4,71.2 319.9,70.7 322.9,69.8 324.4,69.5ZM218.5,80.1 219.2,79.7 220.7,79.2 222.2,78.9 223.8,78.8 225.3,78.8 226.8,79.0 228.3,79.3 229.8,79.8 230.3,80.1 231.3,80.5 232.7,81.6 232.8,81.6 234.0,83.1 234.3,83.6 234.8,84.6 235.0,86.1 234.4,87.6 234.3,87.9 233.4,89.1 232.8,89.8 231.6,90.6 231.3,90.9 229.8,91.6 228.3,92.1 227.9,92.1 226.8,92.4 225.3,92.6 223.8,92.6 222.2,92.4 220.8,92.1 220.7,92.1 219.2,91.7 217.7,91.0 217.2,90.6 216.2,89.9 215.4,89.1 214.7,88.2 214.4,87.6 213.7,86.1 214.0,84.6 214.7,83.1 214.8,83.1 216.1,81.6 216.2,81.4 217.7,80.4 218.5,80.1Z"/>
<path fill="#60ff9e" d="M325.9,71.0 327.4,70.7 330.4,70.3 333.4,70.1 336.4,70.1 339.4,70.3 342.4,70.6 345.4,70.9 346.9,71.2 349.9,71.7 352.9,72.5 354.4,73.0 357.0,74.0 358.9,75.1 360.4,76.1 361.9,77.4 363.4,79.0 364.9,81.5 365.5,83.1 365.8,86.1 365.2,89.1 364.4,90.6 363.4,92.2 361.9,93.8 360.3,95.2 357.9,96.7 355.9,97.7 354.4,98.3 351.4,99.2 348.9,99.7 346.9,100.0 343.9,100.4 340.9,100.7 337.9,101.0 334.9,101.1 331.9,101.0 328.9,100.7 325.9,100.2 323.7,99.7 321.4,99.0 318.9,98.2 316.9,97.3 315.4,96.5 313.1,95.2 311.1,93.7 309.5,92.1 308.3,90.6 307.5,89.1 306.7,86.1 307.1,83.1 307.8,81.4 309.3,79.3 310.8,77.8 312.4,76.6 313.9,75.5 316.6,74.0 318.4,73.3 320.3,72.5 322.9,71.7 325.9,71.0ZM219.5,80.1 220.7,79.6 222.2,79.3 223.8,79.2 225.3,79.2 226.8,79.4 228.3,79.8 229.1,80.1 229.8,80.3 231.3,81.1 231.9,81.6 232.8,82.5 233.3,83.1 234.1,84.6 234.3,86.1 233.7,87.6 232.8,88.9 232.6,89.1 231.3,90.2 230.6,90.6 229.8,91.1 228.3,91.6 226.8,92.0 225.3,92.1 225.3,92.2 223.8,92.2 223.5,92.1 222.2,92.0 220.7,91.8 219.2,91.3 217.9,90.6 217.7,90.5 216.2,89.4 216.0,89.1 214.9,87.6 214.7,87.3 214.1,86.1 214.4,84.6 214.7,84.0 215.3,83.1 216.2,82.0 216.7,81.6 217.7,80.9 219.2,80.1 219.5,80.1Z"/>
<path fill="#75ff89" d="M328.0,72.5 330.4,72.2 333.4,71.9 336.4,71.9 339.4,72.1 342.4,72.4 343.9,72.6 346.9,73.0 349.9,73.6 351.6,74.0 354.4,75.0 355.9,75.7 358.1,77.0 359.9,78.6 361.2,80.1 362.2,81.6 363.1,84.6 362.9,87.6 361.9,90.1 360.4,92.1 358.9,93.6 357.4,94.6 355.9,95.5 353.2,96.7 351.4,97.2 348.4,97.9 346.9,98.2 343.9,98.6 340.9,98.9 337.9,99.2 334.9,99.3 331.9,99.2 328.9,98.8 325.9,98.3 324.4,97.9 321.4,96.9 319.9,96.3 317.6,95.2 315.4,93.7 313.9,92.5 312.4,90.9 311.2,89.1 310.6,87.6 310.4,84.6 310.8,82.9 312.4,80.3 313.9,78.7 315.4,77.5 316.9,76.5 318.6,75.5 321.4,74.3 322.9,73.8 325.9,73.0 328.0,72.5ZM220.6,80.1 220.7,80.0 222.2,79.7 223.8,79.6 225.3,79.6 226.8,79.8 227.7,80.1 228.3,80.2 229.8,80.8 231.0,81.6 231.3,81.8 232.6,83.1 232.8,83.4 233.4,84.6 233.7,86.1 233.0,87.6 232.8,88.0 231.9,89.1 231.3,89.6 229.8,90.6 229.6,90.6 228.3,91.2 226.8,91.6 225.3,91.8 223.8,91.8 222.2,91.7 220.7,91.4 219.2,90.9 218.8,90.6 217.7,90.1 216.6,89.1 216.2,88.8 215.4,87.6 214.7,86.5 214.5,86.1 214.7,85.2 214.9,84.6 215.9,83.1 216.2,82.6 217.4,81.6 217.7,81.3 219.2,80.5 220.6,80.1Z"/>
<path fill="#89ff75" d="M332.1,74.0 334.9,73.9 337.9,74.0 339.4,74.2 342.4,74.5 345.4,74.8 348.4,75.3 349.9,75.7 352.9,76.8 354.4,77.5 356.0,78.6 357.7,80.1 358.9,81.7 359.9,84.6 359.7,87.6 358.9,89.4 357.4,91.4 355.9,92.7 354.4,93.7 351.4,95.0 349.9,95.5 346.9,96.1 343.9,96.6 342.4,96.7 339.4,97.0 336.4,97.3 333.4,97.3 330.4,97.0 328.5,96.7 325.9,96.0 323.2,95.2 321.4,94.3 319.9,93.5 317.8,92.1 316.3,90.6 315.2,89.1 314.2,86.1 314.7,83.1 315.5,81.6 316.9,79.9 318.5,78.6 321.0,77.0 322.9,76.2 324.6,75.5 327.4,74.8 330.4,74.2 332.1,74.0ZM222.4,80.1 223.8,79.9 225.3,80.0 225.8,80.1 226.8,80.2 228.3,80.6 229.8,81.3 230.2,81.6 231.3,82.4 231.9,83.1 232.8,84.5 232.8,84.6 233.2,86.1 232.8,86.9 232.4,87.6 231.3,89.0 231.1,89.1 229.8,90.1 228.6,90.6 228.3,90.8 226.8,91.2 225.3,91.4 223.8,91.5 222.2,91.3 220.7,91.0 219.7,90.6 219.2,90.5 217.7,89.6 217.2,89.1 216.2,88.1 215.9,87.6 214.9,86.1 215.3,84.6 216.2,83.3 216.4,83.1 217.7,81.8 218.1,81.6 219.2,80.9 220.7,80.4 222.2,80.1 222.4,80.1Z"/>
<path fill="#9eff60" d="M328.3,77.0 330.4,76.6 333.4,76.3 336.4,76.2 339.4,76.5 342.4,76.9 344.0,77.0 346.9,77.5 349.9,78.4 351.4,79.2 352.9,80.1 354.4,81.6 355.8,84.6 355.5,87.6 354.4,89.6 352.9,91.0 351.2,92.1 348.4,93.3 346.9,93.7 343.9,94.1 340.9,94.5 337.9,94.9 334.9,95.0 331.9,94.8 328.9,94.3 326.6,93.7 324.4,92.7 322.9,91.9 321.1,90.6 319.7,89.1 318.5,86.1 319.1,83.1 320.1,81.6 321.7,80.1 324.2,78.6 325.9,77.8 328.3,77.0ZM218.8,81.6 219.2,81.3 220.7,80.7 222.2,80.4 223.8,80.3 225.3,80.3 226.8,80.6 228.3,81.0 229.3,81.6 229.8,81.8 231.2,83.1 231.3,83.1 232.3,84.6 232.7,86.1 231.8,87.6 231.3,88.2 230.4,89.1 229.8,89.6 228.3,90.3 227.4,90.6 226.8,90.8 225.3,91.1 223.8,91.1 222.2,91.0 220.7,90.6 220.7,90.6 219.2,90.1 217.8,89.1 217.7,89.1 216.4,87.6 216.2,87.5 215.2,86.1 215.7,84.6 216.2,83.8 216.9,83.1 217.7,82.3 218.8,81.6Z"/>
<path fill="#b2ff4c" d="M329.3,80.1 331.9,79.4 334.9,79.1 337.9,79.3 340.9,79.9 342.6,80.1 345.4,80.8 347.2,81.6 348.7,83.1 349.5,86.1 348.4,88.5 346.9,89.7 345.0,90.6 342.4,91.1 339.4,91.6 336.4,92.1 333.4,92.0 330.4,91.4 328.0,90.6 325.9,89.3 324.4,87.6 323.8,86.1 324.4,83.7 325.9,81.9 327.4,80.9 329.3,80.1ZM219.6,81.6 220.7,81.1 222.2,80.8 223.8,80.6 225.3,80.7 226.8,81.0 228.3,81.5 228.5,81.6 229.8,82.4 230.6,83.1 231.3,83.8 231.8,84.6 232.3,86.1 231.3,87.5 231.2,87.6 229.8,89.1 229.7,89.1 228.3,89.9 226.8,90.4 225.7,90.6 225.3,90.7 223.8,90.8 222.2,90.6 222.2,90.6 220.7,90.3 219.2,89.7 218.4,89.1 217.7,88.6 216.9,87.6 216.2,87.0 215.5,86.1 216.1,84.6 216.2,84.4 217.5,83.1 217.7,82.8 219.2,81.7 219.6,81.6Z"/>
<path fill="#c6ff38" d="M220.5,81.6 220.7,81.5 222.2,81.1 223.8,81.0 225.3,81.0 226.8,81.3 227.5,81.6 228.3,81.9 229.8,82.9 229.9,83.1 231.3,84.5 231.3,84.6 231.8,86.1 231.3,86.9 230.6,87.6 229.8,88.5 228.9,89.1 228.3,89.5 226.8,90.1 225.3,90.4 223.8,90.4 222.2,90.3 220.7,89.9 219.2,89.2 219.1,89.1 217.7,88.0 217.4,87.6 216.2,86.6 215.9,86.1 216.2,85.2 216.5,84.6 217.7,83.3 218.0,83.1 219.2,82.2 220.5,81.6Z"/>
<path fill="#dbff23" d="M221.7,81.6 222.2,81.4 223.8,81.3 225.3,81.4 226.2,81.6 226.8,81.7 228.3,82.4 229.3,83.1 229.8,83.4 230.9,84.6 231.3,85.6 231.4,86.1 231.3,86.4 230.0,87.6 229.8,87.9 228.3,89.0 228.1,89.1 226.8,89.7 225.3,90.0 223.8,90.1 222.2,90.0 220.7,89.6 219.8,89.1 219.2,88.8 217.9,87.6 217.7,87.6 216.2,86.2 216.2,86.1 216.2,86.0 216.9,84.6 217.7,83.7 218.6,83.1 219.2,82.6 220.7,81.8 221.7,81.6Z"/>
<path fill="#efff0f" d="M219.2,83.1 219.2,83.0 220.7,82.2 222.2,81.8 223.8,81.6 225.3,81.7 226.8,82.1 228.3,82.8 228.6,83.1 229.8,83.9 230.4,84.6 231.1,86.1 229.8,87.4 229.4,87.6 228.3,88.6 227.2,89.1 226.8,89.3 225.3,89.7 223.8,89.8 222.2,89.6 220.7,89.2 220.6,89.1 219.2,88.4 218.4,87.6 217.7,87.3 216.5,86.1 217.2,84.6 217.7,84.1 219.2,83.1Z"/></g><path fill="#fff900" d="M222.4,82.1 222.8,82.0 223.3,82.0 223.8,82.0 224.3,82.0 224.8,82.0 225.3,82.1 225.6,82.1 226.1,82.3 226.4,82.3 226.8,82.5 227.1,82.6 227.5,82.8 227.8,83.0 228.1,83.2 228.3,83.4 228.6,83.6 228.9,83.8 229.3,84.1 229.6,84.3 229.8,84.5 230.1,84.7 230.3,84.9 230.6,85.1 230.8,85.5 230.8,85.8 230.7,86.1 230.5,86.3 230.2,86.6 229.9,86.8 229.6,87.1 229.3,87.3 229.1,87.5 228.8,87.7 228.5,87.8 228.2,88.1 227.8,88.3 227.6,88.5 227.3,88.7 226.9,88.8 226.6,89.0 226.2,89.1 225.8,89.2 225.3,89.3 225.1,89.4 224.6,89.4 224.1,89.4 223.6,89.4 223.1,89.4 222.7,89.3 222.3,89.3 221.8,89.2 221.5,89.1 221.1,88.9 220.8,88.8 220.3,88.6 220.1,88.4 219.8,88.3 219.5,88.1 219.2,87.8 218.9,87.6 218.6,87.4 218.3,87.2 218.1,87.1 217.7,86.8 217.3,86.6 217.1,86.4 216.8,86.1 216.6,85.8 216.7,85.3 216.9,85.1 217.2,84.8 217.5,84.6 217.8,84.5 218.1,84.3 218.4,84.1 218.8,83.8 219.1,83.7 219.3,83.5 219.6,83.3 219.8,83.1 220.2,82.8 220.6,82.7 220.8,82.6 221.3,82.4 221.6,82.3 222.0,82.2 222.4,82.1Z"/>
<path fill="#ffe500" d="M223.1,82.3 223.6,82.3 224.1,82.3 224.6,82.3 224.8,82.4 225.3,82.5 225.8,82.6 226.1,82.6 226.6,82.8 226.8,82.9 227.1,83.1 227.6,83.3 227.8,83.5 228.1,83.7 228.3,83.8 228.7,84.1 229.1,84.3 229.3,84.4 229.6,84.6 229.9,84.8 230.2,85.1 230.4,85.3 230.5,85.8 230.3,86.2 230.1,86.5 229.8,86.6 229.5,86.8 229.1,87.1 228.8,87.3 228.6,87.4 228.3,87.6 227.9,87.8 227.6,88.1 227.3,88.2 227.0,88.4 226.6,88.6 226.3,88.7 225.8,88.8 225.6,88.9 225.1,89.0 224.6,89.1 224.1,89.1 223.6,89.1 223.1,89.0 222.6,89.0 222.1,88.9 221.8,88.8 221.3,88.6 221.0,88.5 220.7,88.3 220.3,88.2 220.1,88.0 219.8,87.8 219.4,87.6 219.1,87.4 218.8,87.3 218.5,87.1 218.1,86.9 217.8,86.7 217.6,86.5 217.3,86.3 217.0,86.1 216.9,85.6 217.1,85.3 217.3,85.0 217.6,84.8 218.0,84.6 218.3,84.4 218.6,84.3 218.9,84.1 219.3,83.9 219.6,83.7 219.8,83.5 220.1,83.3 220.6,83.1 220.8,83.0 221.1,82.8 221.6,82.7 221.8,82.6 222.3,82.5 222.8,82.4 223.1,82.3Z"/>
<path fill="#ffd100" d="M222.3,82.8 222.8,82.8 223.3,82.7 223.8,82.7 224.3,82.7 224.8,82.8 225.3,82.8 225.6,82.9 226.1,83.1 226.3,83.2 226.7,83.3 227.1,83.5 227.3,83.6 227.7,83.8 228.1,84.0 228.3,84.1 228.7,84.3 229.1,84.5 229.3,84.7 229.6,84.8 229.9,85.1 230.1,85.3 230.2,85.8 230.1,86.1 229.8,86.4 229.5,86.6 229.1,86.8 228.8,87.0 228.6,87.1 228.1,87.3 227.8,87.5 227.6,87.6 227.1,87.8 226.8,88.0 226.6,88.1 226.1,88.3 225.8,88.4 225.3,88.6 225.1,88.6 224.6,88.7 224.1,88.7 223.6,88.7 223.1,88.7 222.6,88.6 222.3,88.5 221.8,88.4 221.6,88.3 221.1,88.1 220.8,88.0 220.5,87.8 220.1,87.6 219.8,87.5 219.5,87.3 219.1,87.2 218.8,87.0 218.4,86.8 218.1,86.7 217.8,86.5 217.6,86.3 217.3,86.1 217.1,85.6 217.3,85.3 217.6,85.1 217.9,84.8 218.3,84.6 218.6,84.5 218.8,84.3 219.3,84.1 219.6,84.0 219.9,83.8 220.3,83.6 220.6,83.5 220.9,83.3 221.3,83.2 221.6,83.1 222.1,82.9 222.3,82.8Z"/>
<path fill="#ffbc00" d="M223.1,83.1 223.6,83.1 224.1,83.1 224.5,83.1 224.8,83.1 225.3,83.2 225.7,83.3 226.1,83.5 226.4,83.6 226.8,83.7 227.1,83.9 227.6,84.1 227.8,84.2 228.2,84.3 228.6,84.5 228.8,84.6 229.2,84.8 229.6,85.1 229.8,85.3 229.9,85.6 229.8,86.1 229.6,86.3 229.3,86.5 229.1,86.6 228.6,86.8 228.3,87.0 228.1,87.1 227.6,87.3 227.3,87.4 226.9,87.6 226.6,87.8 226.3,87.8 225.8,88.0 225.5,88.1 225.1,88.2 224.6,88.3 224.1,88.3 223.6,88.3 223.1,88.3 222.6,88.2 222.1,88.1 221.8,88.0 221.3,87.8 221.1,87.8 220.7,87.6 220.3,87.5 220.0,87.3 219.6,87.2 219.3,87.1 218.8,86.9 218.6,86.7 218.3,86.6 217.9,86.3 217.6,86.1 217.4,85.8 217.5,85.3 217.8,85.1 218.1,84.9 218.3,84.8 218.7,84.6 219.1,84.4 219.3,84.3 219.8,84.1 220.1,84.0 220.5,83.8 220.8,83.7 221.2,83.6 221.6,83.5 221.9,83.3 222.3,83.2 222.8,83.1 223.1,83.1Z"/>
<path fill="#ffa800" d="M222.3,83.6 222.6,83.5 223.1,83.5 223.6,83.4 224.1,83.4 224.6,83.5 225.1,83.6 225.3,83.6 225.8,83.7 226.2,83.8 226.6,83.9 227.0,84.1 227.3,84.2 227.7,84.3 228.1,84.5 228.3,84.6 228.8,84.8 229.1,85.0 229.3,85.1 229.6,85.4 229.7,85.8 229.5,86.1 229.2,86.3 228.8,86.6 228.6,86.7 228.2,86.8 227.8,87.0 227.6,87.1 227.1,87.3 226.8,87.4 226.3,87.5 226.0,87.6 225.6,87.7 225.1,87.8 224.8,87.9 224.3,87.9 223.8,88.0 223.3,87.9 222.8,87.9 222.5,87.8 222.1,87.8 221.6,87.6 221.3,87.6 220.8,87.4 220.6,87.3 220.1,87.2 219.8,87.1 219.3,86.9 219.1,86.8 218.6,86.6 218.3,86.5 218.1,86.3 217.8,86.1 217.6,85.6 217.8,85.3 218.1,85.1 218.5,84.8 218.8,84.7 219.1,84.6 219.6,84.4 219.8,84.3 220.3,84.1 220.6,84.1 221.1,83.9 221.3,83.8 221.8,83.7 222.3,83.6Z"/>
<path fill="#ff9300" d="M222.4,83.8 222.8,83.8 223.3,83.7 223.8,83.7 224.3,83.7 224.8,83.8 225.1,83.8 225.6,83.9 226.1,84.0 226.3,84.1 226.8,84.2 227.2,84.3 227.6,84.5 227.9,84.6 228.3,84.7 228.6,84.9 229.0,85.1 229.3,85.3 229.4,85.6 229.3,86.0 229.1,86.2 228.8,86.4 228.4,86.6 228.1,86.8 227.8,86.9 227.3,87.0 227.0,87.1 226.6,87.2 226.1,87.3 225.8,87.4 225.3,87.5 224.8,87.6 224.6,87.6 224.1,87.7 223.6,87.7 223.1,87.6 222.7,87.6 222.3,87.5 221.8,87.5 221.3,87.3 221.1,87.3 220.6,87.2 220.3,87.1 219.8,86.9 219.6,86.8 219.1,86.7 218.8,86.6 218.4,86.3 218.1,86.1 217.9,85.8 218.0,85.3 218.3,85.1 218.6,85.0 218.8,84.8 219.3,84.6 219.6,84.5 220.1,84.4 220.3,84.3 220.8,84.2 221.1,84.1 221.6,84.0 222.1,83.9 222.4,83.8Z"/>
<path fill="#ff7f00" d="M222.0,84.1 222.3,84.0 222.8,84.0 223.3,84.0 223.8,83.9 224.3,84.0 224.8,84.0 225.3,84.1 225.6,84.1 226.1,84.2 226.6,84.3 226.8,84.4 227.3,84.5 227.6,84.6 228.1,84.8 228.3,84.9 228.7,85.1 229.0,85.3 229.1,85.6 229.1,86.0 228.8,86.2 228.6,86.4 228.1,86.6 227.8,86.7 227.4,86.8 227.1,87.0 226.6,87.1 226.3,87.1 225.8,87.2 225.3,87.3 225.1,87.4 224.6,87.4 224.1,87.4 223.6,87.4 223.1,87.4 222.6,87.4 222.3,87.3 221.8,87.3 221.3,87.2 220.9,87.1 220.5,87.0 220.1,86.9 219.8,86.8 219.3,86.6 219.1,86.5 218.7,86.3 218.3,86.1 218.1,85.8 218.2,85.3 218.6,85.1 218.8,85.0 219.1,84.8 219.6,84.7 219.8,84.6 220.3,84.4 220.7,84.3 221.1,84.3 221.6,84.2 222.0,84.1Z"/>
<path fill="#ff6b00" d="M221.3,84.3 221.8,84.3 222.3,84.2 222.8,84.2 223.3,84.1 223.8,84.1 224.3,84.1 224.8,84.2 225.3,84.2 225.8,84.3 226.1,84.4 226.6,84.5 227.1,84.6 227.3,84.7 227.8,84.8 228.1,84.9 228.4,85.1 228.7,85.3 228.9,85.6 228.8,85.9 228.6,86.2 228.3,86.3 227.8,86.6 227.6,86.7 227.1,86.8 226.8,86.9 226.3,87.0 225.8,87.1 225.6,87.1 225.1,87.2 224.6,87.3 224.1,87.3 223.6,87.3 223.1,87.3 222.6,87.2 222.1,87.2 221.6,87.1 221.3,87.1 220.8,87.0 220.4,86.8 220.1,86.8 219.6,86.6 219.3,86.5 218.9,86.3 218.6,86.1 218.3,85.8 218.5,85.3 218.8,85.1 219.1,85.0 219.4,84.8 219.8,84.7 220.2,84.6 220.6,84.5 221.1,84.4 221.3,84.3Z"/>
<path fill="#ff5600" d="M222.1,84.4 222.6,84.3 223.1,84.3 223.6,84.2 224.1,84.3 224.6,84.3 225.1,84.3 225.3,84.4 225.8,84.4 226.3,84.5 226.6,84.6 227.1,84.7 227.5,84.8 227.8,85.0 228.1,85.1 228.5,85.3 228.6,85.6 228.6,85.9 228.3,86.2 228.0,86.3 227.6,86.5 227.3,86.6 226.8,86.8 226.4,86.8 226.1,86.9 225.6,87.0 225.1,87.1 224.7,87.1 224.3,87.1 223.8,87.1 223.3,87.1 222.8,87.1 222.6,87.1 222.1,87.1 221.6,87.0 221.1,86.9 220.8,86.8 220.3,86.7 219.9,86.6 219.5,86.5 219.2,86.3 218.8,86.1 218.6,85.9 218.5,85.6 218.7,85.3 219.1,85.1 219.3,85.0 219.7,84.8 220.1,84.7 220.6,84.6 220.8,84.6 221.3,84.5 221.8,84.4 222.1,84.4Z"/>
<path fill="#ff4200" d="M221.1,84.6 221.6,84.5 222.1,84.5 222.6,84.4 223.1,84.4 223.5,84.4 224.0,84.4 224.6,84.4 225.1,84.4 225.6,84.5 226.1,84.6 226.3,84.6 226.8,84.7 227.2,84.8 227.6,85.0 227.8,85.1 228.2,85.3 228.4,85.6 228.3,85.9 228.1,86.2 227.7,86.3 227.3,86.5 227.0,86.6 226.6,86.7 226.1,86.8 225.8,86.9 225.3,86.9 224.8,87.0 224.3,87.0 223.8,87.0 223.3,87.0 222.8,87.0 222.3,87.0 221.8,86.9 221.4,86.8 221.1,86.8 220.6,86.7 220.2,86.6 219.8,86.5 219.5,86.3 219.1,86.1 218.8,85.9 218.8,85.6 219.0,85.3 219.3,85.1 219.6,85.0 220.0,84.8 220.3,84.8 220.8,84.7 221.1,84.6Z"/>
<path fill="#ff2d00" d="M221.7,84.6 222.1,84.5 222.6,84.5 223.1,84.5 223.6,84.5 224.1,84.5 224.6,84.5 225.1,84.5 225.5,84.6 225.8,84.6 226.3,84.7 226.8,84.8 227.1,84.9 227.5,85.1 227.8,85.2 228.1,85.5 228.1,85.8 227.9,86.1 227.6,86.3 227.3,86.4 226.8,86.5 226.6,86.6 226.1,86.7 225.6,86.8 225.1,86.8 224.8,86.9 224.3,86.9 223.8,86.9 223.3,86.9 222.8,86.9 222.3,86.9 222.1,86.8 221.6,86.8 221.1,86.7 220.6,86.6 220.3,86.5 219.8,86.4 219.6,86.3 219.3,86.1 219.0,85.8 219.1,85.5 219.3,85.3 219.6,85.1 220.1,85.0 220.4,84.8 220.8,84.7 221.3,84.7 221.7,84.6Z"/>
<path fill="#ff1900" d="M222.4,84.6 222.8,84.6 223.3,84.6 223.8,84.5 224.3,84.6 224.7,84.6 225.1,84.6 225.6,84.7 226.1,84.8 226.4,84.8 226.8,85.0 227.2,85.1 227.6,85.3 227.8,85.5 227.9,85.8 227.6,86.1 227.3,86.3 227.1,86.4 226.6,86.5 226.2,86.6 225.8,86.7 225.3,86.7 224.8,86.8 224.3,86.8 223.8,86.8 223.3,86.8 222.8,86.8 222.3,86.8 221.8,86.7 221.3,86.7 221.0,86.6 220.6,86.5 220.1,86.4 219.8,86.2 219.5,86.1 219.2,85.8 219.3,85.5 219.6,85.3 219.9,85.1 220.3,85.0 220.8,84.8 221.1,84.8 221.6,84.7 222.0,84.6 222.4,84.6Z"/>
<path fill="#ff0500" d="M221.2,84.8 221.6,84.8 222.1,84.7 222.6,84.7 223.1,84.6 223.6,84.6 224.1,84.6 224.6,84.7 225.1,84.7 225.6,84.8 226.0,84.8 226.3,84.9 226.8,85.1 227.1,85.1 227.5,85.3 227.7,85.6 227.6,86.0 227.3,86.1 226.8,86.3 226.6,86.4 226.1,86.5 225.7,86.6 225.3,86.7 224.8,86.7 224.3,86.8 223.8,86.8 223.3,86.8 222.8,86.8 222.3,86.7 221.8,86.7 221.4,86.6 221.1,86.5 220.6,86.4 220.3,86.3 219.8,86.1 219.6,85.9 219.4,85.6 219.7,85.3 220.1,85.2 220.3,85.1 220.8,84.9 221.2,84.8Z"/>
<path fill="#ef0000" d="M221.6,84.8 222.1,84.8 222.6,84.7 223.1,84.7 223.6,84.7 224.1,84.7 224.6,84.7 225.1,84.8 225.5,84.8 225.8,84.9 226.3,85.0 226.6,85.1 227.1,85.3 227.3,85.5 227.4,85.8 227.1,86.1 226.8,86.2 226.5,86.3 226.1,86.5 225.6,86.5 225.1,86.6 224.8,86.6 224.3,86.7 223.8,86.7 223.3,86.7 222.8,86.7 222.3,86.6 222.0,86.6 221.6,86.5 221.1,86.4 220.7,86.3 220.3,86.2 220.0,86.1 219.7,85.8 219.8,85.5 220.1,85.3 220.5,85.1 220.8,85.0 221.3,84.9 221.6,84.8Z"/>
<path fill="#db0000" d="M222.2,84.8 222.6,84.8 223.1,84.8 223.6,84.8 224.1,84.8 224.6,84.8 224.9,84.8 225.3,84.9 225.8,85.0 226.3,85.1 226.6,85.2 226.9,85.3 227.2,85.6 227.1,85.9 226.8,86.1 226.3,86.3 226.1,86.4 225.6,86.5 225.1,86.5 224.6,86.6 224.3,86.6 223.8,86.6 223.3,86.6 222.9,86.6 222.6,86.6 222.1,86.5 221.6,86.5 221.1,86.4 220.8,86.3 220.3,86.1 220.1,86.0 219.9,85.6 220.2,85.3 220.6,85.2 220.8,85.1 221.3,85.0 221.8,84.9 222.2,84.8Z"/>
<path fill="#c60000" d="M221.1,85.1 221.6,85.0 222.1,84.9 222.6,84.9 223.0,84.9 223.6,84.9 224.1,84.9 224.6,84.9 225.1,84.9 225.6,85.0 225.9,85.1 226.3,85.2 226.7,85.3 227.0,85.6 226.8,85.9 226.6,86.1 226.1,86.3 225.7,86.3 225.3,86.4 224.8,86.5 224.3,86.5 223.8,86.5 223.3,86.5 222.8,86.5 222.3,86.5 221.8,86.4 221.4,86.3 221.1,86.3 220.6,86.1 220.3,86.0 220.1,85.6 220.4,85.3 220.8,85.2 221.1,85.1Z"/>
<path fill="#b20000" d="M221.5,85.1 221.8,85.1 222.3,85.0 222.8,84.9 223.3,84.9 223.8,84.9 224.3,84.9 224.8,85.0 225.3,85.1 225.6,85.1 226.1,85.2 226.4,85.3 226.7,85.6 226.6,85.9 226.3,86.1 225.8,86.2 225.3,86.3 225.1,86.4 224.6,86.4 224.1,86.5 223.6,86.5 223.1,86.5 222.6,86.4 222.1,86.4 221.8,86.3 221.3,86.2 220.8,86.1 220.6,86.0 220.4,85.6 220.7,85.3 221.1,85.2 221.5,85.1Z"/>
<path fill="#9e0000" d="M222.0,85.1 222.3,85.1 222.8,85.0 223.3,85.0 223.8,85.0 224.3,85.0 224.8,85.1 225.1,85.1 225.6,85.2 226.1,85.3 226.3,85.5 226.4,85.8 226.1,86.0 225.8,86.1 225.3,86.3 224.8,86.3 224.6,86.4 224.1,86.4 223.6,86.4 223.1,86.4 222.6,86.4 222.3,86.3 221.8,86.3 221.3,86.2 221.1,86.1 220.7,85.8 220.8,85.5 221.1,85.3 221.6,85.2 222.0,85.1Z"/>
<path fill="#890000" d="M222.6,85.1 223.1,85.1 223.6,85.1 224.1,85.1 224.4,85.1 224.8,85.1 225.3,85.2 225.8,85.3 226.1,85.5 226.1,85.8 225.8,86.0 225.6,86.1 225.1,86.2 224.6,86.3 224.1,86.3 223.6,86.3 223.1,86.3 222.6,86.3 222.1,86.2 221.6,86.1 221.3,86.0 220.9,85.8 221.1,85.5 221.3,85.3 221.8,85.2 222.3,85.1 222.6,85.1Z"/>
</g></g>
<rect x="322.2" y="258.8" width="374.8" height="129.4" fill="none" stroke="#000058" stroke-width="2" opacity="0.9" filter="url(#bl2)"/>
<path d="M286.7 238V232M284.3 235L286.7 227.5L289.1 235Z" stroke="#000" stroke-width="0.6" fill="#000"/>
<path d="M732 408.6H738M736.5 406.4L743 408.6L736.5 410.8Z" stroke="#000" stroke-width="0.6" fill="#000"/>
<defs><linearGradient id="cbg" x1="0" y1="1" x2="0" y2="0">
<stop offset="0.0000" stop-color="#00007f"/>
<stop offset="0.0625" stop-color="#0000bf"/>
<stop offset="0.1250" stop-color="#0000ff"/>
<stop offset="0.1875" stop-color="#003fff"/>
<stop offset="0.2500" stop-color="#007fff"/>
<stop offset="0.3125" stop-color="#00bfff"/>
<stop offset="0.3750" stop-color="#00ffff"/>
<stop offset="0.4375" stop-color="#3fffbf"/>
<stop offset="0.5000" stop-color="#7fff7f"/>
<stop offset="0.5625" stop-color="#bfff3f"/>
<stop offset="0.6250" stop-color="#ffff00"/>
<stop offset="0.6875" stop-color="#ffbf00"/>
<stop offset="0.7500" stop-color="#ff7f00"/>
<stop offset="0.8125" stop-color="#ff3f00"/>
<stop offset="0.8750" stop-color="#ff0000"/>
<stop offset="0.9375" stop-color="#bf0000"/>
<stop offset="1.0000" stop-color="#7f0000"/>
</linearGradient></defs>
<rect x="738.6" y="243.8" width="5.2" height="159.4" fill="url(#cbg)"/>
<path d="M743.8 243.8H746" stroke="#222" stroke-width="0.6"/>
<text class="ax" x="746.5" y="246.4">1.0</text>
<path d="M743.8 275.7H746" stroke="#222" stroke-width="0.6"/>
<text class="ax" x="746.5" y="278.3">0.8</text>
<path d="M743.8 307.6H746" stroke="#222" stroke-width="0.6"/>
<text class="ax" x="746.5" y="310.2">0.6</text>
<path d="M743.8 339.4H746" stroke="#222" stroke-width="0.6"/>
<text class="ax" x="746.5" y="342.0">0.4</text>
<path d="M743.8 371.3H746" stroke="#222" stroke-width="0.6"/>
<text class="ax" x="746.5" y="373.9">0.2</text>
<path d="M743.8 403.2H746" stroke="#222" stroke-width="0.6"/>
<text class="ax" x="746.5" y="405.8">0.0</text>
<text class="ax" x="284.7" y="245.2" text-anchor="end">50</text>
<text class="ax" x="284.7" y="277.4" text-anchor="end">30</text>
<text class="ax" x="284.7" y="309.4" text-anchor="end">10</text>
<text class="ax" x="284.7" y="341.6" text-anchor="end">-10</text>
<text class="ax" x="284.7" y="373.6" text-anchor="end">-30</text>
<text class="ax" x="284.7" y="405.8" text-anchor="end">-50</text>
<text class="ax" x="299.8" y="415.9" text-anchor="middle">-90</text>
<text class="ax" x="346.4" y="415.9" text-anchor="middle">-70</text>
<text class="ax" x="393.0" y="415.9" text-anchor="middle">-50</text>
<text class="ax" x="439.6" y="415.9" text-anchor="middle">-30</text>
<text class="ax" x="486.2" y="415.9" text-anchor="middle">-10</text>
<text class="ax" x="532.8" y="415.9" text-anchor="middle">10</text>
<text class="ax" x="579.4" y="415.9" text-anchor="middle">30</text>
<text class="ax" x="626.0" y="415.9" text-anchor="middle">50</text>
<text class="ax" x="672.6" y="415.9" text-anchor="middle">70</text>
<text class="ax" x="719.2" y="415.9" text-anchor="middle">90</text>
<text class="ax" x="509" y="424.6" text-anchor="middle" style="font-size:9px">x (microns)</text>
<text class="ax" transform="translate(257,323) rotate(-90)" text-anchor="middle" style="font-size:9px;fill:#666">y (microns)</text>
</svg>
<div class="t sans" style="left:726px;top:509px;font-size:14.5px;line-height:18px;height:18px;color:rgba(120,120,120,0.38)">啟用 Windows</div>
<div class="t sans" style="left:726px;top:526px;font-size:10.2px;line-height:14px;height:14px;color:rgba(120,120,120,0.38)">移至 [設定] 以啟用 Windows。</div>
</body></html>
